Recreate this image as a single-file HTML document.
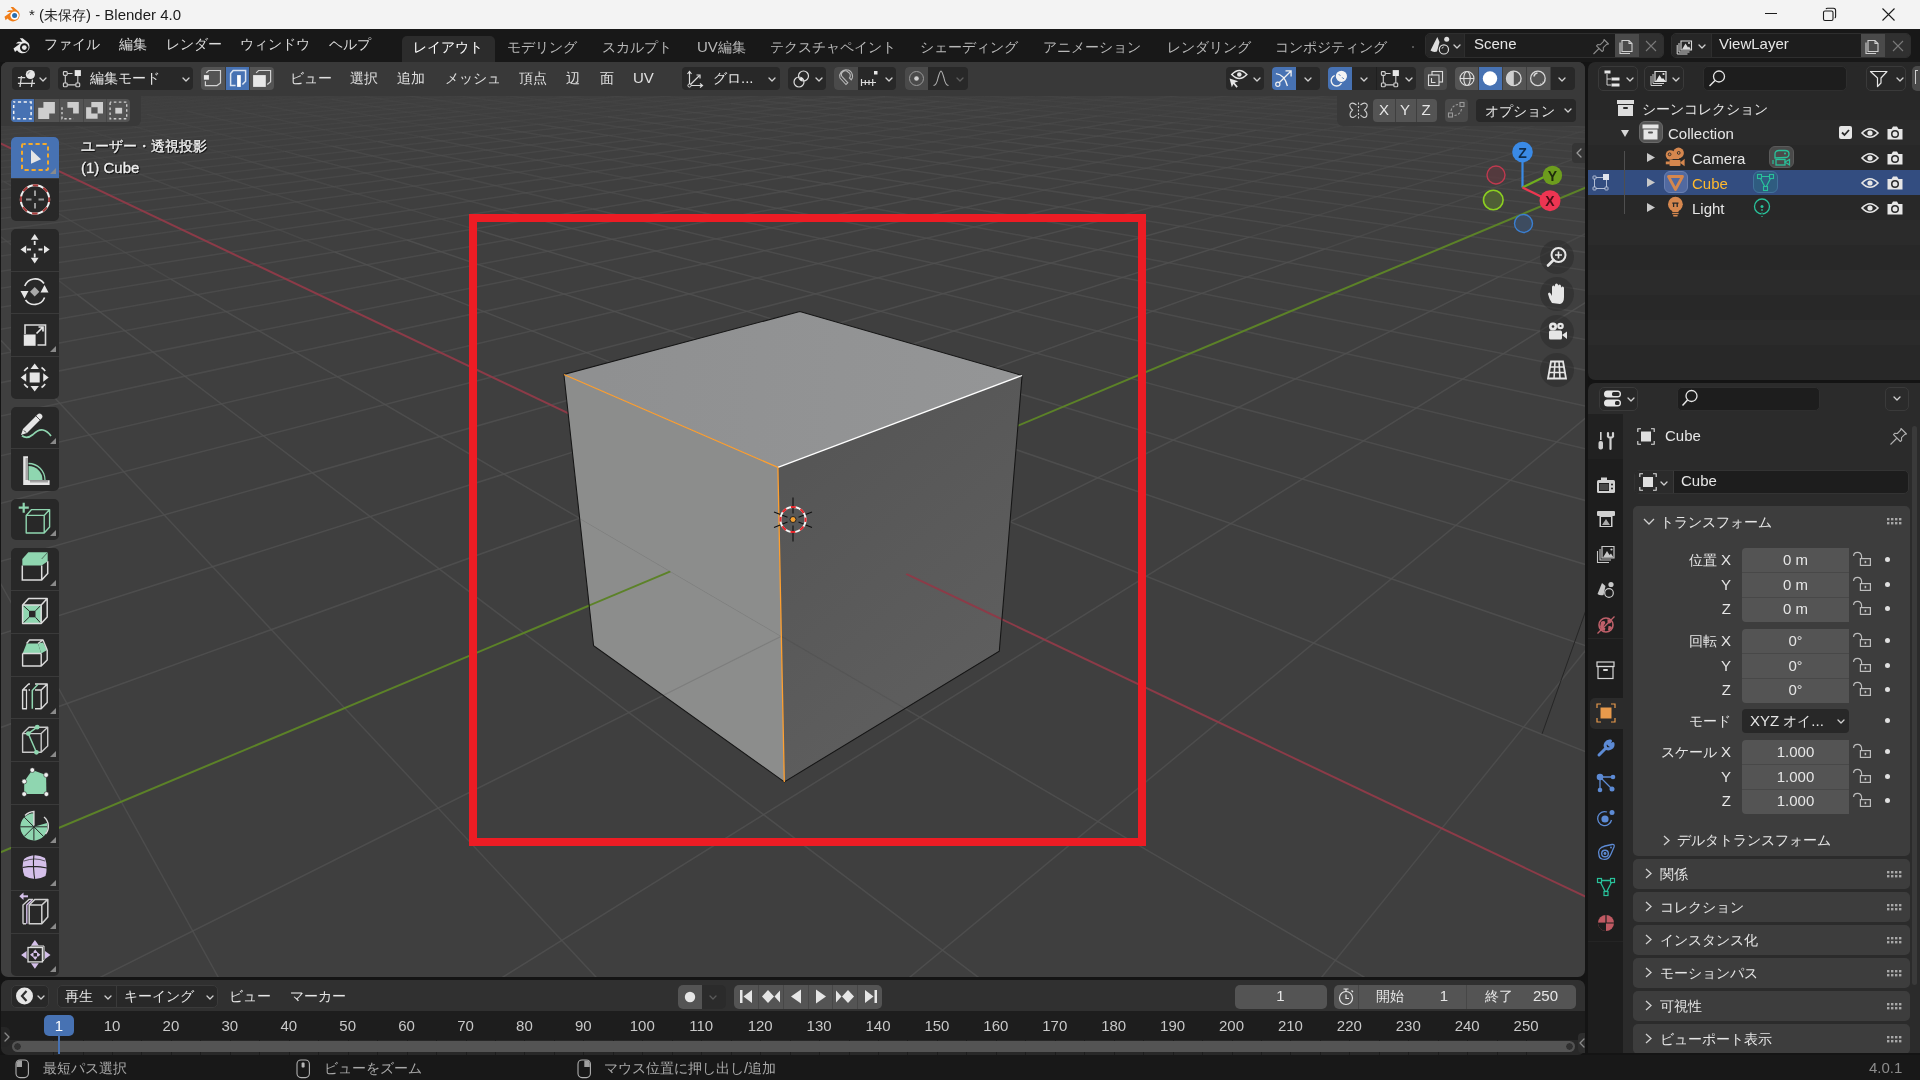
<!DOCTYPE html>
<html><head><meta charset="utf-8"><style>
*{margin:0;padding:0;box-sizing:border-box}
html,body{width:1920px;height:1080px;overflow:hidden;background:#141414;font-family:"Liberation Sans",sans-serif}
.t{position:absolute;line-height:20px;white-space:nowrap;font-size:14px}
.l{font-size:15px}
.r{position:absolute}
svg{position:absolute;overflow:visible}
</style></head><body><div style="position:absolute;left:0;top:0;width:1920px;height:1080px;will-change:transform">
<div class="r" style="left:0px;top:0px;width:1920px;height:29px;background:#f3f3f3;border-radius:0px;"></div><svg style="left:2px;top:5px;" width="21" height="18" viewBox="0 0 21 18"><path d="M2.5 11.8 L9 7 L4.6 7 L7 5.2 L11 5.2 L8.6 2 L11.2 2 L16.5 6.5 A6.5 6.2 0 1 1 5.5 13.6 L3.6 15.2 Z" fill="#f07d18"/>
    <circle cx="12.6" cy="10.6" r="4.2" fill="#fff"/><circle cx="12.6" cy="10.6" r="2.5" fill="#2a6db0"/></svg><div class="t" style="left:29px;top:5px;color:#1b1b1b;font-size:14px"><span class="l">* (</span>未保存<span class="l">) - Blender 4.0</span></div><div class="r" style="left:1765px;top:13px;width:12px;height:1.2px;background:#1b1b1b;border-radius:0px;"></div><svg style="left:1822px;top:7px;" width="15" height="15" viewBox="0 0 15 15"><rect x="1.5" y="4" width="9.5" height="9.5" rx="1.5" fill="none" stroke="#1b1b1b" stroke-width="1.1"/><path d="M4 2.2 Q4.3 1.3 5.5 1.3 L11.5 1.3 Q13.6 1.3 13.6 3.4 L13.6 9.6 Q13.6 10.7 12.8 11" fill="none" stroke="#1b1b1b" stroke-width="1.1"/></svg><svg style="left:1881px;top:7px;" width="15" height="15" viewBox="0 0 15 15"><path d="M1.5 1.5 L13.5 13.5 M13.5 1.5 L1.5 13.5" stroke="#1b1b1b" stroke-width="1.1"/></svg><div class="r" style="left:0px;top:29px;width:1920px;height:33px;background:#181818;border-radius:0px;"></div><svg style="left:12px;top:36px;" width="21" height="19" viewBox="0 0 21 19"><path d="M1.5 12.5 L8.2 7.6 L3.8 7.6 L6.2 5.8 L10.4 5.8 L7.8 2.3 L10.6 2.3 L16.5 7 A6.7 6.5 0 1 1 5 14.3 L3 16 Z" fill="#e8e8e8"/>
    <circle cx="12.3" cy="11.6" r="4.3" fill="#181818"/><circle cx="12.3" cy="11.6" r="2.4" fill="#e8e8e8"/></svg><div class="t" style="left:44px;top:34px;color:#dcdcdc;">ファイル</div><div class="t" style="left:119px;top:34px;color:#dcdcdc;">編集</div><div class="t" style="left:166px;top:34px;color:#dcdcdc;">レンダー</div><div class="t" style="left:240px;top:34px;color:#dcdcdc;">ウィンドウ</div><div class="t" style="left:329px;top:34px;color:#dcdcdc;">ヘルプ</div><div class="r" style="left:402px;top:36px;width:93px;height:26px;background:#2c2c2c;border-radius:5px 5px 0 0;"></div><div class="t" style="left:413px;top:37px;color:#ffffff;">レイアウト</div><div class="t" style="left:507px;top:37px;color:#b8b8b8;">モデリング</div><div class="t" style="left:602px;top:37px;color:#b8b8b8;">スカルプト</div><div class="t" style="left:697px;top:37px;color:#b8b8b8;"><span class="l">UV</span>編集</div><div class="t" style="left:770px;top:37px;color:#b8b8b8;">テクスチャペイント</div><div class="t" style="left:920px;top:37px;color:#b8b8b8;">シェーディング</div><div class="t" style="left:1043px;top:37px;color:#b8b8b8;">アニメーション</div><div class="t" style="left:1167px;top:37px;color:#b8b8b8;">レンダリング</div><div class="t" style="left:1275px;top:37px;color:#b8b8b8;">コンポジティング</div><div class="r" style="left:1412px;top:46px;width:2px;height:2px;background:#555;border-radius:0px;"></div><div class="r" style="left:1425px;top:33px;width:239px;height:25px;background:#1d1d1d;border-radius:5px;border:1px solid #2e2e2e"></div><div class="r" style="left:1426px;top:34px;width:38px;height:23px;background:#262626;border-radius:4px 0 0 4px;"></div><div class="r" style="left:1464px;top:34px;width:1px;height:23px;background:#2e2e2e;border-radius:0px;"></div><svg style="left:1420px;top:28px;" width="50" height="34" viewBox="0 0 50 34"><path d="M17.3 9 L10.5 22.5 Q13 24.5 17 23.6 L19.5 14 Z" fill="#dedede"/><circle cx="26.7" cy="11.2" r="2.5" fill="#dedede"/><circle cx="23.9" cy="21.4" r="4.6" fill="#262626" stroke="#dedede" stroke-width="1.2"/><path d="M22 20.6 A2 2 0 0 1 23.6 19" stroke="#dedede" stroke-width="1" fill="none"/></svg><svg style="left:1453px;top:44px;" width="8" height="6" viewBox="0 0 8 6"><path d="M1 1 L4 4 L7 1" fill="none" stroke="#d0d0d0" stroke-width="1.3" stroke-linecap="round" stroke-linejoin="round"/></svg><div class="t" style="left:1474px;top:34px;color:#e6e6e6;"><span class="l">Scene</span></div><svg style="left:1591px;top:38px;" width="20" height="18" viewBox="0 0 20 18"><path d="M13 1.5 L17.5 6 L15.6 6.4 L12.3 9.7 L12.4 12.3 L11.2 13.5 L5.5 7.8 L6.7 6.6 L9.3 6.7 L12.6 3.4 Z M8 10.5 L2.5 16" fill="none" stroke="#8a8a8a" stroke-width="1.1" stroke-linejoin="round"/></svg><div class="r" style="left:1615px;top:34px;width:24px;height:23px;background:#4a4a4a;border-radius:0px;"></div><svg style="left:1618px;top:37px;" width="18" height="18" viewBox="0 0 18 18"><path d="M4 3.5 L11 3.5 L14 6.5 L14 14.5 L4 14.5 Z M11 3.5 L11 6.5 L14 6.5" fill="none" stroke="#d0d0d0" stroke-width="1.1"/><path d="M2 5.5 L2 16.5 L12 16.5" fill="none" stroke="#d0d0d0" stroke-width="1.1"/></svg><div class="r" style="left:1639px;top:34px;width:24px;height:23px;background:#303030;border-radius:0 4px 4px 0;"></div><svg style="left:1644px;top:39px;" width="14" height="14" viewBox="0 0 14 14"><path d="M2 2 L12 12 M12 2 L2 12" stroke="#7a7a7a" stroke-width="1.1"/></svg><div class="r" style="left:1671px;top:33px;width:240px;height:25px;background:#1d1d1d;border-radius:5px;border:1px solid #2e2e2e"></div><div class="r" style="left:1672px;top:34px;width:39px;height:23px;background:#262626;border-radius:4px 0 0 4px;"></div><div class="r" style="left:1711px;top:34px;width:1px;height:23px;background:#2e2e2e;border-radius:0px;"></div><svg style="left:1676px;top:37px;" width="24" height="18" viewBox="0 0 24 18"><path d="M5 4 L15.5 4 L15.5 13 L5 13 Z" fill="none" stroke="#d8d8d8" stroke-width="1.1"/><path d="M3 6 L3 15 L13.5 15 M1.2 8 L1.2 17 L11.5 17" fill="none" stroke="#d8d8d8" stroke-width="1"/><path d="M6 12.5 L9.5 6.5 L12 10.5 L13 9.5 L15 12.5 Z" fill="#d8d8d8"/><circle cx="13" cy="6" r="1" fill="#d8d8d8"/></svg><svg style="left:1698px;top:44px;" width="8" height="6" viewBox="0 0 8 6"><path d="M1 1 L4 4 L7 1" fill="none" stroke="#d0d0d0" stroke-width="1.3" stroke-linecap="round" stroke-linejoin="round"/></svg><div class="t" style="left:1719px;top:34px;color:#e6e6e6;"><span class="l">ViewLayer</span></div><div class="r" style="left:1861px;top:34px;width:24px;height:23px;background:#4a4a4a;border-radius:0px;"></div><svg style="left:1864px;top:37px;" width="18" height="18" viewBox="0 0 18 18"><path d="M4 3.5 L11 3.5 L14 6.5 L14 14.5 L4 14.5 Z M11 3.5 L11 6.5 L14 6.5" fill="none" stroke="#d0d0d0" stroke-width="1.1"/><path d="M2 5.5 L2 16.5 L12 16.5" fill="none" stroke="#d0d0d0" stroke-width="1.1"/></svg><div class="r" style="left:1885px;top:34px;width:25px;height:23px;background:#303030;border-radius:0 4px 4px 0;"></div><svg style="left:1891px;top:39px;" width="14" height="14" viewBox="0 0 14 14"><path d="M2 2 L12 12 M12 2 L2 12" stroke="#7a7a7a" stroke-width="1.1"/></svg><div class="r" style="left:1px;top:62px;width:1584px;height:915px;background:#3f3f3f;border-radius:7px;overflow:hidden"><svg width="1584" height="915" style="left:0;top:0"><g transform="translate(-1,-62)"><g stroke="#505050" stroke-width="1.5" fill="none"><line x1="-578.0" y1="136.9" x2="-84.0" y2="103.2" stroke-opacity="0.02"/>
<line x1="-84.0" y1="103.2" x2="258.5" y2="79.8" stroke-opacity="0.02"/>
<line x1="-584.2" y1="140.7" x2="-79.0" y2="105.6" stroke-opacity="0.03"/>
<line x1="-79.0" y1="105.6" x2="268.6" y2="81.4" stroke-opacity="0.03"/>
<line x1="-590.7" y1="144.7" x2="-73.8" y2="108.1" stroke-opacity="0.05"/>
<line x1="-73.8" y1="108.1" x2="279.1" y2="83.1" stroke-opacity="0.05"/>
<line x1="-1458.5" y1="210.9" x2="-597.6" y2="148.8" stroke-opacity="0.02"/>
<line x1="-597.6" y1="148.8" x2="-68.3" y2="110.7" stroke-opacity="0.06"/>
<line x1="-68.3" y1="110.7" x2="290.0" y2="84.8" stroke-opacity="0.06"/>
<line x1="290.0" y1="84.8" x2="548.7" y2="66.2" stroke-opacity="0.02"/>
<line x1="-1499.1" y1="219.0" x2="-604.9" y2="153.2" stroke-opacity="0.04"/>
<line x1="-604.9" y1="153.2" x2="-62.7" y2="113.4" stroke-opacity="0.08"/>
<line x1="-62.7" y1="113.4" x2="301.3" y2="86.6" stroke-opacity="0.08"/>
<line x1="301.3" y1="86.6" x2="562.4" y2="67.4" stroke-opacity="0.04"/>
<line x1="-1542.6" y1="227.6" x2="-612.6" y2="157.9" stroke-opacity="0.05"/>
<line x1="-612.6" y1="157.9" x2="-56.7" y2="116.2" stroke-opacity="0.09"/>
<line x1="-56.7" y1="116.2" x2="312.9" y2="88.5" stroke-opacity="0.09"/>
<line x1="312.9" y1="88.5" x2="576.5" y2="68.7" stroke-opacity="0.05"/>
<line x1="-328942.2" y1="35590.4" x2="-1452702.1" y2="157345.6" stroke-opacity="0.05"/>
<line x1="-1589.6" y1="237.0" x2="-620.7" y2="162.8" stroke-opacity="0.06"/>
<line x1="-620.7" y1="162.8" x2="-50.5" y2="119.1" stroke-opacity="0.11"/>
<line x1="-50.5" y1="119.1" x2="325.1" y2="90.4" stroke-opacity="0.11"/>
<line x1="325.1" y1="90.4" x2="591.2" y2="70.0" stroke-opacity="0.06"/>
<line x1="-56509.3" y1="6264.9" x2="-1401796.2" y2="156609.6" stroke-opacity="0.06"/>
<line x1="-1640.3" y1="247.1" x2="-629.3" y2="168.0" stroke-opacity="0.08"/>
<line x1="-629.3" y1="168.0" x2="-44.0" y2="122.2" stroke-opacity="0.13"/>
<line x1="-44.0" y1="122.2" x2="337.7" y2="92.4" stroke-opacity="0.13"/>
<line x1="337.7" y1="92.4" x2="606.3" y2="71.4" stroke-opacity="0.08"/>
<line x1="-30030.1" y1="3414.6" x2="-1350890.2" y2="155873.6" stroke-opacity="0.08"/>
<line x1="-1695.2" y1="258.0" x2="-638.4" y2="173.5" stroke-opacity="0.09"/>
<line x1="-638.4" y1="173.5" x2="-37.2" y2="125.5" stroke-opacity="0.15"/>
<line x1="-37.2" y1="125.5" x2="350.8" y2="94.5" stroke-opacity="0.15"/>
<line x1="350.8" y1="94.5" x2="621.9" y2="72.8" stroke-opacity="0.09"/>
<line x1="-20021.6" y1="2337.3" x2="-1299984.3" y2="155137.5" stroke-opacity="0.09"/>
<line x1="-4310.8" y1="478.8" x2="-1755.0" y2="269.9" stroke-opacity="0.02"/>
<line x1="-1755.0" y1="269.9" x2="-648.1" y2="179.4" stroke-opacity="0.11"/>
<line x1="-648.1" y1="179.4" x2="-30.0" y2="128.9" stroke-opacity="0.16"/>
<line x1="-30.0" y1="128.9" x2="364.4" y2="96.6" stroke-opacity="0.16"/>
<line x1="364.4" y1="96.6" x2="638.0" y2="74.3" stroke-opacity="0.11"/>
<line x1="638.0" y1="74.3" x2="838.9" y2="57.8" stroke-opacity="0.02"/>
<line x1="-4310.8" y1="478.8" x2="-14761.7" y2="1771.1" stroke-opacity="0.02"/>
<line x1="-14761.7" y1="1771.1" x2="-1249078.4" y2="154401.5" stroke-opacity="0.11"/>
<line x1="-4621.6" y1="517.2" x2="-1820.3" y2="282.8" stroke-opacity="0.03"/>
<line x1="-1820.3" y1="282.8" x2="-658.4" y2="185.6" stroke-opacity="0.12"/>
<line x1="-658.4" y1="185.6" x2="-22.5" y2="132.4" stroke-opacity="0.18"/>
<line x1="-22.5" y1="132.4" x2="378.6" y2="98.9" stroke-opacity="0.18"/>
<line x1="378.6" y1="98.9" x2="654.7" y2="75.8" stroke-opacity="0.12"/>
<line x1="654.7" y1="75.8" x2="856.3" y2="58.9" stroke-opacity="0.03"/>
<line x1="-3913.9" y1="446.3" x2="-11519.0" y2="1422.0" stroke-opacity="0.03"/>
<line x1="-11519.0" y1="1422.0" x2="-1198172.4" y2="153665.5" stroke-opacity="0.12"/>
<line x1="-4985.0" y1="562.2" x2="-1891.8" y2="297.1" stroke-opacity="0.04"/>
<line x1="-1891.8" y1="297.1" x2="-669.4" y2="192.3" stroke-opacity="0.14"/>
<line x1="-669.4" y1="192.3" x2="-14.6" y2="136.2" stroke-opacity="0.21"/>
<line x1="-14.6" y1="136.2" x2="393.3" y2="101.2" stroke-opacity="0.21"/>
<line x1="393.3" y1="101.2" x2="671.9" y2="77.3" stroke-opacity="0.14"/>
<line x1="671.9" y1="77.3" x2="874.3" y2="60.0" stroke-opacity="0.04"/>
<line x1="-3563.0" y1="417.7" x2="-9319.7" y2="1185.3" stroke-opacity="0.04"/>
<line x1="-9319.7" y1="1185.3" x2="-1147266.5" y2="152929.4" stroke-opacity="0.14"/>
<line x1="-5415.7" y1="615.4" x2="-1970.5" y2="312.7" stroke-opacity="0.05"/>
<line x1="-1970.5" y1="312.7" x2="-681.1" y2="199.4" stroke-opacity="0.16"/>
<line x1="-681.1" y1="199.4" x2="-6.3" y2="140.1" stroke-opacity="0.23"/>
<line x1="-6.3" y1="140.1" x2="408.7" y2="103.7" stroke-opacity="0.23"/>
<line x1="408.7" y1="103.7" x2="689.8" y2="79.0" stroke-opacity="0.16"/>
<line x1="689.8" y1="79.0" x2="892.8" y2="61.1" stroke-opacity="0.05"/>
<line x1="-3250.4" y1="392.1" x2="-7730.0" y2="1014.2" stroke-opacity="0.05"/>
<line x1="-7730.0" y1="1014.2" x2="-1096360.5" y2="152193.4" stroke-opacity="0.16"/>
<line x1="-5934.2" y1="679.5" x2="-2057.6" y2="330.0" stroke-opacity="0.06"/>
<line x1="-2057.6" y1="330.0" x2="-693.8" y2="207.1" stroke-opacity="0.17"/>
<line x1="-693.8" y1="207.1" x2="2.4" y2="144.3" stroke-opacity="0.25"/>
<line x1="2.4" y1="144.3" x2="424.8" y2="106.2" stroke-opacity="0.25"/>
<line x1="424.8" y1="106.2" x2="708.4" y2="80.6" stroke-opacity="0.17"/>
<line x1="708.4" y1="80.6" x2="911.9" y2="62.3" stroke-opacity="0.06"/>
<line x1="-2970.3" y1="369.2" x2="-6527.3" y2="884.7" stroke-opacity="0.06"/>
<line x1="-6527.3" y1="884.7" x2="-1045454.6" y2="151457.4" stroke-opacity="0.17"/>
<line x1="-6570.4" y1="758.2" x2="-2154.4" y2="349.3" stroke-opacity="0.08"/>
<line x1="-2154.4" y1="349.3" x2="-707.3" y2="215.3" stroke-opacity="0.19"/>
<line x1="-707.3" y1="215.3" x2="11.7" y2="148.7" stroke-opacity="0.27"/>
<line x1="11.7" y1="148.7" x2="441.6" y2="108.9" stroke-opacity="0.27"/>
<line x1="441.6" y1="108.9" x2="727.6" y2="82.4" stroke-opacity="0.19"/>
<line x1="727.6" y1="82.4" x2="931.6" y2="63.5" stroke-opacity="0.08"/>
<line x1="-2717.8" y1="348.6" x2="-5585.6" y2="783.4" stroke-opacity="0.08"/>
<line x1="-5585.6" y1="783.4" x2="-994548.7" y2="150721.3" stroke-opacity="0.19"/>
<line x1="-7369.5" y1="857.0" x2="-2262.7" y2="370.8" stroke-opacity="0.09"/>
<line x1="-2262.7" y1="370.8" x2="-721.9" y2="224.1" stroke-opacity="0.21"/>
<line x1="-721.9" y1="224.1" x2="21.4" y2="153.3" stroke-opacity="0.29"/>
<line x1="21.4" y1="153.3" x2="459.1" y2="111.7" stroke-opacity="0.29"/>
<line x1="459.1" y1="111.7" x2="747.5" y2="84.2" stroke-opacity="0.21"/>
<line x1="747.5" y1="84.2" x2="951.9" y2="64.7" stroke-opacity="0.09"/>
<line x1="-2489.1" y1="329.9" x2="-4828.3" y2="701.8" stroke-opacity="0.09"/>
<line x1="-4828.3" y1="701.8" x2="-943642.7" y2="149985.3" stroke-opacity="0.21"/>
<line x1="-8403.4" y1="984.9" x2="-2384.7" y2="395.1" stroke-opacity="0.10"/>
<line x1="-2384.7" y1="395.1" x2="-737.7" y2="233.6" stroke-opacity="0.23"/>
<line x1="-737.7" y1="233.6" x2="31.8" y2="158.2" stroke-opacity="0.32"/>
<line x1="31.8" y1="158.2" x2="477.5" y2="114.6" stroke-opacity="0.32"/>
<line x1="477.5" y1="114.6" x2="768.2" y2="86.1" stroke-opacity="0.23"/>
<line x1="768.2" y1="86.1" x2="972.9" y2="66.0" stroke-opacity="0.10"/>
<line x1="-2280.9" y1="312.9" x2="-4206.1" y2="634.9" stroke-opacity="0.10"/>
<line x1="-4206.1" y1="634.9" x2="-290898.3" y2="48586.6" stroke-opacity="0.23"/>
<line x1="-290898.3" y1="48586.6" x2="-892736.8" y2="149249.2" stroke-opacity="0.32"/>
<line x1="-9793.2" y1="1156.7" x2="-2523.1" y2="422.6" stroke-opacity="0.11"/>
<line x1="-2523.1" y1="422.6" x2="-754.7" y2="244.0" stroke-opacity="0.24"/>
<line x1="-754.7" y1="244.0" x2="42.8" y2="163.5" stroke-opacity="0.34"/>
<line x1="42.8" y1="163.5" x2="496.7" y2="117.6" stroke-opacity="0.34"/>
<line x1="496.7" y1="117.6" x2="789.8" y2="88.0" stroke-opacity="0.24"/>
<line x1="789.8" y1="88.0" x2="994.6" y2="67.3" stroke-opacity="0.11"/>
<line x1="-2090.5" y1="297.3" x2="-3685.7" y2="578.8" stroke-opacity="0.11"/>
<line x1="-3685.7" y1="578.8" x2="-35989.9" y2="6280.6" stroke-opacity="0.24"/>
<line x1="-35989.9" y1="6280.6" x2="-841830.8" y2="148513.2" stroke-opacity="0.34"/>
<line x1="-11760.9" y1="1400.0" x2="-2681.5" y2="454.1" stroke-opacity="0.12"/>
<line x1="-2681.5" y1="454.1" x2="-773.3" y2="255.3" stroke-opacity="0.26"/>
<line x1="-773.3" y1="255.3" x2="54.4" y2="169.0" stroke-opacity="0.36"/>
<line x1="54.4" y1="169.0" x2="516.9" y2="120.8" stroke-opacity="0.36"/>
<line x1="516.9" y1="120.8" x2="812.2" y2="90.1" stroke-opacity="0.26"/>
<line x1="812.2" y1="90.1" x2="1017.0" y2="68.7" stroke-opacity="0.12"/>
<line x1="-1915.9" y1="283.0" x2="-3244.1" y2="531.3" stroke-opacity="0.12"/>
<line x1="-3244.1" y1="531.3" x2="-18247.1" y2="3335.9" stroke-opacity="0.26"/>
<line x1="-18247.1" y1="3335.9" x2="-790924.9" y2="147777.2" stroke-opacity="0.36"/>
<line x1="-14761.7" y1="1771.1" x2="-2864.6" y2="490.5" stroke-opacity="0.13"/>
<line x1="-2864.6" y1="490.5" x2="-793.6" y2="267.5" stroke-opacity="0.28"/>
<line x1="-793.6" y1="267.5" x2="66.8" y2="174.9" stroke-opacity="0.39"/>
<line x1="66.8" y1="174.9" x2="538.1" y2="124.2" stroke-opacity="0.39"/>
<line x1="538.1" y1="124.2" x2="835.5" y2="92.2" stroke-opacity="0.28"/>
<line x1="835.5" y1="92.2" x2="1040.2" y2="70.1" stroke-opacity="0.13"/>
<line x1="-1755.0" y1="269.9" x2="-2864.6" y2="490.5" stroke-opacity="0.13"/>
<line x1="-2864.6" y1="490.5" x2="-11770.9" y2="2261.1" stroke-opacity="0.28"/>
<line x1="-11770.9" y1="2261.1" x2="-740019.0" y2="147041.1" stroke-opacity="0.39"/>
<line x1="-19898.9" y1="2406.3" x2="-3078.6" y2="533.0" stroke-opacity="0.15"/>
<line x1="-3078.6" y1="533.0" x2="-815.8" y2="281.0" stroke-opacity="0.30"/>
<line x1="-815.8" y1="281.0" x2="80.1" y2="181.2" stroke-opacity="0.41"/>
<line x1="80.1" y1="181.2" x2="560.3" y2="127.7" stroke-opacity="0.41"/>
<line x1="560.3" y1="127.7" x2="859.7" y2="94.4" stroke-opacity="0.30"/>
<line x1="859.7" y1="94.4" x2="1064.3" y2="71.6" stroke-opacity="0.15"/>
<line x1="-1606.4" y1="257.7" x2="-2535.0" y2="455.0" stroke-opacity="0.15"/>
<line x1="-2535.0" y1="455.0" x2="-8416.1" y2="1704.3" stroke-opacity="0.30"/>
<line x1="-8416.1" y1="1704.3" x2="-689113.0" y2="146305.1" stroke-opacity="0.41"/>
<line x1="-1348521.1" y1="155839.3" x2="-30714.5" y2="3743.8" stroke-opacity="0.02"/>
<line x1="-30714.5" y1="3743.8" x2="-3332.0" y2="583.4" stroke-opacity="0.16"/>
<line x1="-3332.0" y1="583.4" x2="-840.3" y2="295.8" stroke-opacity="0.32"/>
<line x1="-840.3" y1="295.8" x2="94.3" y2="187.9" stroke-opacity="0.44"/>
<line x1="94.3" y1="187.9" x2="583.8" y2="131.4" stroke-opacity="0.44"/>
<line x1="583.8" y1="131.4" x2="885.1" y2="96.7" stroke-opacity="0.32"/>
<line x1="885.1" y1="96.7" x2="1089.1" y2="73.1" stroke-opacity="0.16"/>
<line x1="1089.1" y1="73.1" x2="1236.5" y2="56.1" stroke-opacity="0.02"/>
<line x1="-1140.0" y1="171.4" x2="-1468.7" y2="246.5" stroke-opacity="0.02"/>
<line x1="-1468.7" y1="246.5" x2="-2246.1" y2="423.9" stroke-opacity="0.16"/>
<line x1="-2246.1" y1="423.9" x2="-6364.2" y2="1363.8" stroke-opacity="0.32"/>
<line x1="-6364.2" y1="1363.8" x2="-638207.1" y2="145569.1" stroke-opacity="0.44"/>
<line x1="-1292190.2" y1="155024.8" x2="-68256.6" y2="8386.1" stroke-opacity="0.03"/>
<line x1="-68256.6" y1="8386.1" x2="-3637.0" y2="644.0" stroke-opacity="0.17"/>
<line x1="-3637.0" y1="644.0" x2="-867.3" y2="312.2" stroke-opacity="0.34"/>
<line x1="-867.3" y1="312.2" x2="109.4" y2="195.2" stroke-opacity="0.46"/>
<line x1="109.4" y1="195.2" x2="608.5" y2="135.4" stroke-opacity="0.46"/>
<line x1="608.5" y1="135.4" x2="911.5" y2="99.1" stroke-opacity="0.34"/>
<line x1="911.5" y1="99.1" x2="1114.9" y2="74.7" stroke-opacity="0.17"/>
<line x1="1114.9" y1="74.7" x2="1261.0" y2="57.2" stroke-opacity="0.03"/>
<line x1="-1056.4" y1="165.8" x2="-1340.7" y2="236.0" stroke-opacity="0.03"/>
<line x1="-1340.7" y1="236.0" x2="-1990.7" y2="396.4" stroke-opacity="0.17"/>
<line x1="-1990.7" y1="396.4" x2="-4979.6" y2="1134.0" stroke-opacity="0.34"/>
<line x1="-4979.6" y1="1134.0" x2="-587301.1" y2="144833.0" stroke-opacity="0.46"/>
<line x1="-1235859.2" y1="154210.4" x2="-4010.9" y2="718.3" stroke-opacity="0.18"/>
<line x1="-4010.9" y1="718.3" x2="-897.4" y2="330.4" stroke-opacity="0.36"/>
<line x1="-897.4" y1="330.4" x2="125.7" y2="202.9" stroke-opacity="0.49"/>
<line x1="125.7" y1="202.9" x2="634.6" y2="139.5" stroke-opacity="0.49"/>
<line x1="634.6" y1="139.5" x2="939.0" y2="101.6" stroke-opacity="0.36"/>
<line x1="939.0" y1="101.6" x2="1141.7" y2="76.3" stroke-opacity="0.18"/>
<line x1="1141.7" y1="76.3" x2="1286.2" y2="58.3" stroke-opacity="0.03"/>
<line x1="-976.9" y1="160.5" x2="-1221.5" y2="226.3" stroke-opacity="0.03"/>
<line x1="-1221.5" y1="226.3" x2="-1763.3" y2="371.9" stroke-opacity="0.18"/>
<line x1="-1763.3" y1="371.9" x2="-3982.4" y2="968.5" stroke-opacity="0.36"/>
<line x1="-3982.4" y1="968.5" x2="-536395.2" y2="144097.0" stroke-opacity="0.49"/>
<line x1="-1179528.3" y1="153395.9" x2="-4480.0" y2="811.6" stroke-opacity="0.19"/>
<line x1="-4480.0" y1="811.6" x2="-931.0" y2="350.8" stroke-opacity="0.37"/>
<line x1="-931.0" y1="350.8" x2="143.3" y2="211.3" stroke-opacity="0.52"/>
<line x1="143.3" y1="211.3" x2="662.2" y2="143.9" stroke-opacity="0.52"/>
<line x1="662.2" y1="143.9" x2="967.9" y2="104.2" stroke-opacity="0.37"/>
<line x1="967.9" y1="104.2" x2="1169.4" y2="78.0" stroke-opacity="0.19"/>
<line x1="1169.4" y1="78.0" x2="1312.2" y2="59.5" stroke-opacity="0.04"/>
<line x1="-901.3" y1="155.4" x2="-1110.2" y2="217.2" stroke-opacity="0.04"/>
<line x1="-1110.2" y1="217.2" x2="-1559.7" y2="350.0" stroke-opacity="0.19"/>
<line x1="-1559.7" y1="350.0" x2="-3229.8" y2="843.6" stroke-opacity="0.37"/>
<line x1="-3229.8" y1="843.6" x2="-485489.3" y2="143361.0" stroke-opacity="0.52"/>
<line x1="-1123197.3" y1="152581.4" x2="-5086.3" y2="932.1" stroke-opacity="0.20"/>
<line x1="-5086.3" y1="932.1" x2="-968.9" y2="373.7" stroke-opacity="0.39"/>
<line x1="-968.9" y1="373.7" x2="162.3" y2="220.3" stroke-opacity="0.54"/>
<line x1="162.3" y1="220.3" x2="691.4" y2="148.5" stroke-opacity="0.54"/>
<line x1="691.4" y1="148.5" x2="998.1" y2="106.9" stroke-opacity="0.39"/>
<line x1="998.1" y1="106.9" x2="1198.2" y2="79.8" stroke-opacity="0.20"/>
<line x1="1198.2" y1="79.8" x2="1339.1" y2="60.7" stroke-opacity="0.04"/>
<line x1="-829.2" y1="150.6" x2="-1005.9" y2="208.6" stroke-opacity="0.04"/>
<line x1="-1005.9" y1="208.6" x2="-1376.1" y2="330.2" stroke-opacity="0.20"/>
<line x1="-1376.1" y1="330.2" x2="-2641.8" y2="746.0" stroke-opacity="0.39"/>
<line x1="-2641.8" y1="746.0" x2="-434583.3" y2="142624.9" stroke-opacity="0.54"/>
<line x1="-1066866.4" y1="151766.9" x2="-5899.9" y2="1093.9" stroke-opacity="0.21"/>
<line x1="-5899.9" y1="1093.9" x2="-1011.8" y2="399.7" stroke-opacity="0.41"/>
<line x1="-1011.8" y1="399.7" x2="182.9" y2="230.1" stroke-opacity="0.57"/>
<line x1="182.9" y1="230.1" x2="722.4" y2="153.4" stroke-opacity="0.57"/>
<line x1="722.4" y1="153.4" x2="1029.7" y2="109.8" stroke-opacity="0.41"/>
<line x1="1029.7" y1="109.8" x2="1228.1" y2="81.6" stroke-opacity="0.21"/>
<line x1="1228.1" y1="81.6" x2="1366.9" y2="61.9" stroke-opacity="0.05"/>
<line x1="-760.4" y1="146.0" x2="-908.1" y2="200.6" stroke-opacity="0.05"/>
<line x1="-908.1" y1="200.6" x2="-1209.9" y2="312.3" stroke-opacity="0.21"/>
<line x1="-1209.9" y1="312.3" x2="-2169.6" y2="667.6" stroke-opacity="0.41"/>
<line x1="-2169.6" y1="667.6" x2="-383677.4" y2="141888.9" stroke-opacity="0.57"/>
<line x1="-1010535.4" y1="150952.5" x2="-7049.3" y2="1322.4" stroke-opacity="0.22"/>
<line x1="-7049.3" y1="1322.4" x2="-1061.0" y2="429.5" stroke-opacity="0.42"/>
<line x1="-1061.0" y1="429.5" x2="205.2" y2="240.7" stroke-opacity="0.60"/>
<line x1="205.2" y1="240.7" x2="755.3" y2="158.7" stroke-opacity="0.60"/>
<line x1="755.3" y1="158.7" x2="1062.8" y2="112.8" stroke-opacity="0.42"/>
<line x1="1062.8" y1="112.8" x2="1259.3" y2="83.5" stroke-opacity="0.22"/>
<line x1="1259.3" y1="83.5" x2="1395.6" y2="63.2" stroke-opacity="0.05"/>
<line x1="-694.8" y1="141.6" x2="-816.2" y2="193.1" stroke-opacity="0.05"/>
<line x1="-816.2" y1="193.1" x2="-1058.6" y2="296.1" stroke-opacity="0.22"/>
<line x1="-1058.6" y1="296.1" x2="-1782.2" y2="603.3" stroke-opacity="0.42"/>
<line x1="-1782.2" y1="603.3" x2="-193298.3" y2="81927.7" stroke-opacity="0.60"/>
<line x1="-193298.3" y1="81927.7" x2="-332771.4" y2="141152.8" stroke-opacity="0.60"/>
<line x1="-954204.4" y1="150138.0" x2="-8796.3" y2="1669.7" stroke-opacity="0.23"/>
<line x1="-8796.3" y1="1669.7" x2="-1117.7" y2="463.9" stroke-opacity="0.44"/>
<line x1="-1117.7" y1="463.9" x2="229.6" y2="252.3" stroke-opacity="0.62"/>
<line x1="229.6" y1="252.3" x2="790.3" y2="164.2" stroke-opacity="0.62"/>
<line x1="790.3" y1="164.2" x2="1097.7" y2="116.0" stroke-opacity="0.44"/>
<line x1="1097.7" y1="116.0" x2="1291.7" y2="85.5" stroke-opacity="0.23"/>
<line x1="1291.7" y1="85.5" x2="1425.3" y2="64.5" stroke-opacity="0.06"/>
<line x1="-632.1" y1="137.4" x2="-729.7" y2="186.1" stroke-opacity="0.06"/>
<line x1="-729.7" y1="186.1" x2="-920.4" y2="281.2" stroke-opacity="0.23"/>
<line x1="-920.4" y1="281.2" x2="-1458.5" y2="549.6" stroke-opacity="0.44"/>
<line x1="-1458.5" y1="549.6" x2="-12983.3" y2="6298.2" stroke-opacity="0.62"/>
<line x1="-12983.3" y1="6298.2" x2="-281865.5" y2="140416.8" stroke-opacity="0.62"/>
<line x1="-897873.5" y1="149323.5" x2="-11770.9" y2="2261.1" stroke-opacity="0.24"/>
<line x1="-11770.9" y1="2261.1" x2="-1184.1" y2="504.0" stroke-opacity="0.46"/>
<line x1="-1184.1" y1="504.0" x2="256.3" y2="265.0" stroke-opacity="0.65"/>
<line x1="256.3" y1="265.0" x2="827.7" y2="170.2" stroke-opacity="0.65"/>
<line x1="827.7" y1="170.2" x2="1134.3" y2="119.3" stroke-opacity="0.46"/>
<line x1="1134.3" y1="119.3" x2="1325.4" y2="87.5" stroke-opacity="0.24"/>
<line x1="1325.4" y1="87.5" x2="1456.1" y2="65.9" stroke-opacity="0.06"/>
<line x1="-572.0" y1="133.3" x2="-648.1" y2="179.4" stroke-opacity="0.06"/>
<line x1="-648.1" y1="179.4" x2="-793.6" y2="267.5" stroke-opacity="0.24"/>
<line x1="-793.6" y1="267.5" x2="-1184.1" y2="504.0" stroke-opacity="0.46"/>
<line x1="-1184.1" y1="504.0" x2="-5721.2" y2="3252.2" stroke-opacity="0.65"/>
<line x1="-5721.2" y1="3252.2" x2="-230959.6" y2="139680.8" stroke-opacity="0.65"/>
<line x1="-841542.5" y1="148509.0" x2="-17967.9" y2="3493.1" stroke-opacity="0.25"/>
<line x1="-17967.9" y1="3493.1" x2="-1262.6" y2="551.6" stroke-opacity="0.47"/>
<line x1="-1262.6" y1="551.6" x2="285.8" y2="279.0" stroke-opacity="0.67"/>
<line x1="285.8" y1="279.0" x2="867.7" y2="176.5" stroke-opacity="0.67"/>
<line x1="867.7" y1="176.5" x2="1172.8" y2="122.8" stroke-opacity="0.47"/>
<line x1="1172.8" y1="122.8" x2="1360.6" y2="89.7" stroke-opacity="0.25"/>
<line x1="1360.6" y1="89.7" x2="1487.9" y2="67.3" stroke-opacity="0.06"/>
<line x1="-514.5" y1="129.5" x2="-570.9" y2="173.1" stroke-opacity="0.06"/>
<line x1="-570.9" y1="173.1" x2="-676.8" y2="255.0" stroke-opacity="0.25"/>
<line x1="-676.8" y1="255.0" x2="-948.4" y2="464.9" stroke-opacity="0.47"/>
<line x1="-948.4" y1="464.9" x2="-3168.7" y2="2181.6" stroke-opacity="0.67"/>
<line x1="-3168.7" y1="2181.6" x2="-180053.6" y2="138944.7" stroke-opacity="0.67"/>
<line x1="-785211.6" y1="147694.6" x2="-38809.6" y2="7636.5" stroke-opacity="0.25"/>
<line x1="-38809.6" y1="7636.5" x2="-1357.0" y2="608.8" stroke-opacity="0.48"/>
<line x1="-1357.0" y1="608.8" x2="318.3" y2="294.4" stroke-opacity="0.70"/>
<line x1="318.3" y1="294.4" x2="910.5" y2="183.3" stroke-opacity="0.70"/>
<line x1="910.5" y1="183.3" x2="1213.4" y2="126.5" stroke-opacity="0.48"/>
<line x1="1213.4" y1="126.5" x2="1397.4" y2="91.9" stroke-opacity="0.25"/>
<line x1="1397.4" y1="91.9" x2="1520.9" y2="68.7" stroke-opacity="0.07"/>
<line x1="-459.4" y1="125.8" x2="-497.9" y2="167.1" stroke-opacity="0.07"/>
<line x1="-497.9" y1="167.1" x2="-569.0" y2="243.4" stroke-opacity="0.25"/>
<line x1="-569.0" y1="243.4" x2="-743.9" y2="431.0" stroke-opacity="0.48"/>
<line x1="-743.9" y1="431.0" x2="-1866.3" y2="1635.4" stroke-opacity="0.70"/>
<line x1="-1866.3" y1="1635.4" x2="-129147.7" y2="138208.7" stroke-opacity="0.70"/>
<line x1="-728880.6" y1="146880.1" x2="-1472.6" y2="678.8" stroke-opacity="0.50"/>
<line x1="-1472.6" y1="678.8" x2="354.4" y2="311.6" stroke-opacity="0.73"/>
<line x1="354.4" y1="311.6" x2="956.5" y2="190.6" stroke-opacity="0.73"/>
<line x1="956.5" y1="190.6" x2="1256.3" y2="130.3" stroke-opacity="0.50"/>
<line x1="1256.3" y1="130.3" x2="1435.7" y2="94.3" stroke-opacity="0.26"/>
<line x1="1435.7" y1="94.3" x2="1555.2" y2="70.3" stroke-opacity="0.07"/>
<line x1="-406.5" y1="122.2" x2="-428.8" y2="161.5" stroke-opacity="0.07"/>
<line x1="-428.8" y1="161.5" x2="-469.1" y2="232.6" stroke-opacity="0.26"/>
<line x1="-469.1" y1="232.6" x2="-564.6" y2="401.2" stroke-opacity="0.50"/>
<line x1="-564.6" y1="401.2" x2="-1076.2" y2="1304.0" stroke-opacity="0.73"/>
<line x1="-1076.2" y1="1304.0" x2="-78241.7" y2="137472.7" stroke-opacity="0.73"/>
<line x1="-672549.7" y1="146065.6" x2="-1617.6" y2="766.6" stroke-opacity="0.51"/>
<line x1="-1617.6" y1="766.6" x2="394.9" y2="330.8" stroke-opacity="0.75"/>
<line x1="394.9" y1="330.8" x2="1006.1" y2="198.5" stroke-opacity="0.75"/>
<line x1="1006.1" y1="198.5" x2="1301.6" y2="134.5" stroke-opacity="0.51"/>
<line x1="1301.6" y1="134.5" x2="1475.8" y2="96.7" stroke-opacity="0.27"/>
<line x1="1475.8" y1="96.7" x2="1590.7" y2="71.8" stroke-opacity="0.07"/>
<line x1="-355.7" y1="118.8" x2="-363.1" y2="156.1" stroke-opacity="0.07"/>
<line x1="-363.1" y1="156.1" x2="-376.2" y2="222.6" stroke-opacity="0.27"/>
<line x1="-376.2" y1="222.6" x2="-406.3" y2="375.0" stroke-opacity="0.51"/>
<line x1="-406.3" y1="375.0" x2="-545.9" y2="1081.5" stroke-opacity="0.75"/>
<line x1="-545.9" y1="1081.5" x2="-27335.8" y2="136736.6" stroke-opacity="0.75"/>
<line x1="-616218.7" y1="145251.1" x2="-1804.7" y2="880.0" stroke-opacity="0.52"/>
<line x1="-1804.7" y1="880.0" x2="440.4" y2="352.4" stroke-opacity="0.77"/>
<line x1="440.4" y1="352.4" x2="1059.6" y2="206.9" stroke-opacity="0.77"/>
<line x1="1059.6" y1="206.9" x2="1349.6" y2="138.8" stroke-opacity="0.52"/>
<line x1="1349.6" y1="138.8" x2="1517.8" y2="99.3" stroke-opacity="0.27"/>
<line x1="1517.8" y1="99.3" x2="1627.6" y2="73.5" stroke-opacity="0.08"/>
<line x1="-306.9" y1="115.5" x2="-300.7" y2="151.0" stroke-opacity="0.08"/>
<line x1="-300.7" y1="151.0" x2="-289.7" y2="213.3" stroke-opacity="0.27"/>
<line x1="-289.7" y1="213.3" x2="-265.4" y2="351.6" stroke-opacity="0.52"/>
<line x1="-265.4" y1="351.6" x2="-165.2" y2="921.9" stroke-opacity="0.77"/>
<line x1="-165.2" y1="921.9" x2="23570.1" y2="136000.6" stroke-opacity="0.77"/>
<line x1="-559887.8" y1="144436.7" x2="-2055.5" y2="1031.9" stroke-opacity="0.52"/>
<line x1="-2055.5" y1="1031.9" x2="492.0" y2="377.0" stroke-opacity="0.79"/>
<line x1="492.0" y1="377.0" x2="1117.6" y2="216.2" stroke-opacity="0.79"/>
<line x1="1117.6" y1="216.2" x2="1400.5" y2="143.4" stroke-opacity="0.52"/>
<line x1="1400.5" y1="143.4" x2="1561.7" y2="102.0" stroke-opacity="0.27"/>
<line x1="1561.7" y1="102.0" x2="1665.9" y2="75.2" stroke-opacity="0.08"/>
<line x1="-260.0" y1="112.4" x2="-241.3" y2="146.1" stroke-opacity="0.08"/>
<line x1="-241.3" y1="146.1" x2="-209.0" y2="204.6" stroke-opacity="0.27"/>
<line x1="-209.0" y1="204.6" x2="-139.3" y2="330.6" stroke-opacity="0.52"/>
<line x1="-139.3" y1="330.6" x2="121.2" y2="801.7" stroke-opacity="0.79"/>
<line x1="121.2" y1="801.7" x2="74476.1" y2="135264.6" stroke-opacity="0.79"/>
<line x1="-503556.8" y1="143622.2" x2="-2408.9" y2="1245.9" stroke-opacity="0.53"/>
<line x1="-2408.9" y1="1245.9" x2="551.0" y2="405.0" stroke-opacity="0.81"/>
<line x1="551.0" y1="405.0" x2="1180.6" y2="226.2" stroke-opacity="0.81"/>
<line x1="1180.6" y1="226.2" x2="1454.5" y2="148.3" stroke-opacity="0.53"/>
<line x1="1454.5" y1="148.3" x2="1607.8" y2="104.8" stroke-opacity="0.28"/>
<line x1="1607.8" y1="104.8" x2="1705.7" y2="77.0" stroke-opacity="0.08"/>
<line x1="-214.8" y1="109.4" x2="-184.8" y2="141.5" stroke-opacity="0.08"/>
<line x1="-184.8" y1="141.5" x2="-133.4" y2="196.5" stroke-opacity="0.28"/>
<line x1="-133.4" y1="196.5" x2="-25.7" y2="311.8" stroke-opacity="0.53"/>
<line x1="-25.7" y1="311.8" x2="344.6" y2="708.0" stroke-opacity="0.81"/>
<line x1="344.6" y1="708.0" x2="125382.0" y2="134528.5" stroke-opacity="0.81"/>
<line x1="-447225.8" y1="142807.7" x2="-2944.3" y2="1570.3" stroke-opacity="0.54"/>
<line x1="-2944.3" y1="1570.3" x2="619.2" y2="437.4" stroke-opacity="0.83"/>
<line x1="619.2" y1="437.4" x2="1249.4" y2="237.1" stroke-opacity="0.83"/>
<line x1="1249.4" y1="237.1" x2="1512.1" y2="153.6" stroke-opacity="0.54"/>
<line x1="1512.1" y1="153.6" x2="1656.2" y2="107.7" stroke-opacity="0.28"/>
<line x1="1656.2" y1="107.7" x2="1747.2" y2="78.8" stroke-opacity="0.08"/>
<line x1="-171.3" y1="106.4" x2="-130.8" y2="137.1" stroke-opacity="0.08"/>
<line x1="-130.8" y1="137.1" x2="-62.5" y2="188.8" stroke-opacity="0.28"/>
<line x1="-62.5" y1="188.8" x2="77.2" y2="294.7" stroke-opacity="0.54"/>
<line x1="77.2" y1="294.7" x2="523.7" y2="632.9" stroke-opacity="0.83"/>
<line x1="523.7" y1="632.9" x2="176288.0" y2="133792.5" stroke-opacity="0.83"/>
<line x1="-390894.9" y1="141993.2" x2="-3851.2" y2="2119.6" stroke-opacity="0.54"/>
<line x1="-3851.2" y1="2119.6" x2="698.7" y2="475.2" stroke-opacity="0.83"/>
<line x1="698.7" y1="475.2" x2="1324.7" y2="249.0" stroke-opacity="0.83"/>
<line x1="1324.7" y1="249.0" x2="1573.5" y2="159.1" stroke-opacity="0.54"/>
<line x1="1573.5" y1="159.1" x2="1707.1" y2="110.8" stroke-opacity="0.28"/>
<line x1="1707.1" y1="110.8" x2="1790.4" y2="80.7" stroke-opacity="0.08"/>
<line x1="-129.3" y1="103.6" x2="-79.3" y2="132.9" stroke-opacity="0.08"/>
<line x1="-79.3" y1="132.9" x2="4.1" y2="181.7" stroke-opacity="0.28"/>
<line x1="4.1" y1="181.7" x2="170.8" y2="279.2" stroke-opacity="0.54"/>
<line x1="170.8" y1="279.2" x2="670.4" y2="571.4" stroke-opacity="0.83"/>
<line x1="670.4" y1="571.4" x2="227193.9" y2="133056.4" stroke-opacity="0.83"/>
<line x1="-278233.0" y1="140364.3" x2="-11825.6" y2="6949.7" stroke-opacity="0.54"/>
<line x1="-11825.6" y1="6949.7" x2="906.1" y2="573.8" stroke-opacity="0.83"/>
<line x1="906.1" y1="573.8" x2="1499.3" y2="276.7" stroke-opacity="0.83"/>
<line x1="1499.3" y1="276.7" x2="1709.5" y2="171.5" stroke-opacity="0.54"/>
<line x1="1709.5" y1="171.5" x2="1817.1" y2="117.6" stroke-opacity="0.28"/>
<line x1="1817.1" y1="117.6" x2="1882.5" y2="84.8" stroke-opacity="0.08"/>
<line x1="-49.8" y1="98.3" x2="17.1" y2="125.0" stroke-opacity="0.08"/>
<line x1="17.1" y1="125.0" x2="126.0" y2="168.5" stroke-opacity="0.28"/>
<line x1="126.0" y1="168.5" x2="334.8" y2="252.0" stroke-opacity="0.54"/>
<line x1="334.8" y1="252.0" x2="896.7" y2="476.5" stroke-opacity="0.83"/>
<line x1="896.7" y1="476.5" x2="7620.1" y2="3163.1" stroke-opacity="0.83"/>
<line x1="7620.1" y1="3163.1" x2="329005.8" y2="131584.4" stroke-opacity="0.54"/>
<line x1="-221902.0" y1="139549.8" x2="1044.6" y2="639.6" stroke-opacity="0.83"/>
<line x1="1044.6" y1="639.6" x2="1601.1" y2="292.9" stroke-opacity="0.83"/>
<line x1="1601.1" y1="292.9" x2="1785.0" y2="178.3" stroke-opacity="0.54"/>
<line x1="1785.0" y1="178.3" x2="1876.6" y2="121.2" stroke-opacity="0.28"/>
<line x1="1876.6" y1="121.2" x2="1931.5" y2="87.0" stroke-opacity="0.08"/>
<line x1="-12.1" y1="95.8" x2="62.2" y2="121.3" stroke-opacity="0.08"/>
<line x1="62.2" y1="121.3" x2="181.9" y2="162.5" stroke-opacity="0.28"/>
<line x1="181.9" y1="162.5" x2="407.0" y2="240.0" stroke-opacity="0.54"/>
<line x1="407.0" y1="240.0" x2="985.7" y2="439.2" stroke-opacity="0.83"/>
<line x1="985.7" y1="439.2" x2="5807.9" y2="2098.7" stroke-opacity="0.83"/>
<line x1="5807.9" y1="2098.7" x2="379911.7" y2="130848.3" stroke-opacity="0.54"/>
<line x1="-165571.1" y1="138735.3" x2="1218.1" y2="722.1" stroke-opacity="0.81"/>
<line x1="1218.1" y1="722.1" x2="1715.0" y2="311.0" stroke-opacity="0.81"/>
<line x1="1715.0" y1="311.0" x2="1866.3" y2="185.7" stroke-opacity="0.53"/>
<line x1="1866.3" y1="185.7" x2="1939.6" y2="125.0" stroke-opacity="0.28"/>
<line x1="1939.6" y1="125.0" x2="1982.9" y2="89.3" stroke-opacity="0.08"/>
<line x1="24.3" y1="93.3" x2="105.4" y2="117.8" stroke-opacity="0.08"/>
<line x1="105.4" y1="117.8" x2="234.8" y2="156.8" stroke-opacity="0.28"/>
<line x1="234.8" y1="156.8" x2="473.6" y2="228.9" stroke-opacity="0.53"/>
<line x1="473.6" y1="228.9" x2="1062.9" y2="406.8" stroke-opacity="0.81"/>
<line x1="1062.9" y1="406.8" x2="4897.7" y2="1564.2" stroke-opacity="0.81"/>
<line x1="4897.7" y1="1564.2" x2="430817.7" y2="130112.3" stroke-opacity="0.53"/>
<line x1="-109240.1" y1="137920.9" x2="1441.8" y2="828.4" stroke-opacity="0.79"/>
<line x1="1441.8" y1="828.4" x2="1843.1" y2="331.3" stroke-opacity="0.79"/>
<line x1="1843.1" y1="331.3" x2="1954.2" y2="193.7" stroke-opacity="0.52"/>
<line x1="1954.2" y1="193.7" x2="2006.3" y2="129.1" stroke-opacity="0.27"/>
<line x1="2006.3" y1="129.1" x2="2036.5" y2="91.7" stroke-opacity="0.08"/>
<line x1="59.6" y1="90.9" x2="146.9" y2="114.4" stroke-opacity="0.08"/>
<line x1="146.9" y1="114.4" x2="284.9" y2="151.4" stroke-opacity="0.27"/>
<line x1="284.9" y1="151.4" x2="535.4" y2="218.7" stroke-opacity="0.52"/>
<line x1="535.4" y1="218.7" x2="1130.5" y2="378.4" stroke-opacity="0.79"/>
<line x1="1130.5" y1="378.4" x2="4350.2" y2="1242.6" stroke-opacity="0.79"/>
<line x1="4350.2" y1="1242.6" x2="481723.6" y2="129376.3" stroke-opacity="0.52"/>
<line x1="-52909.2" y1="137106.4" x2="1741.0" y2="970.6" stroke-opacity="0.77"/>
<line x1="1741.0" y1="970.6" x2="1988.3" y2="354.3" stroke-opacity="0.77"/>
<line x1="1988.3" y1="354.3" x2="2049.4" y2="202.3" stroke-opacity="0.52"/>
<line x1="2049.4" y1="202.3" x2="2077.0" y2="133.4" stroke-opacity="0.27"/>
<line x1="2077.0" y1="133.4" x2="2092.8" y2="94.2" stroke-opacity="0.08"/>
<line x1="93.6" y1="88.7" x2="186.8" y2="111.1" stroke-opacity="0.08"/>
<line x1="186.8" y1="111.1" x2="332.5" y2="146.3" stroke-opacity="0.27"/>
<line x1="332.5" y1="146.3" x2="592.8" y2="209.1" stroke-opacity="0.52"/>
<line x1="592.8" y1="209.1" x2="1190.2" y2="353.4" stroke-opacity="0.77"/>
<line x1="1190.2" y1="353.4" x2="3984.7" y2="1027.9" stroke-opacity="0.77"/>
<line x1="3984.7" y1="1027.9" x2="532629.5" y2="128640.2" stroke-opacity="0.52"/>
<line x1="3421.8" y1="136291.9" x2="2161.8" y2="1170.6" stroke-opacity="0.75"/>
<line x1="2161.8" y1="1170.6" x2="2154.4" y2="380.7" stroke-opacity="0.75"/>
<line x1="2154.4" y1="380.7" x2="2152.8" y2="211.7" stroke-opacity="0.51"/>
<line x1="2152.8" y1="211.7" x2="2152.2" y2="138.0" stroke-opacity="0.27"/>
<line x1="2152.2" y1="138.0" x2="2151.8" y2="96.8" stroke-opacity="0.07"/>
<line x1="126.6" y1="86.4" x2="225.1" y2="108.0" stroke-opacity="0.07"/>
<line x1="225.1" y1="108.0" x2="377.7" y2="141.4" stroke-opacity="0.27"/>
<line x1="377.7" y1="141.4" x2="646.2" y2="200.3" stroke-opacity="0.51"/>
<line x1="646.2" y1="200.3" x2="1243.3" y2="331.1" stroke-opacity="0.75"/>
<line x1="1243.3" y1="331.1" x2="3723.3" y2="874.4" stroke-opacity="0.75"/>
<line x1="3723.3" y1="874.4" x2="583535.5" y2="127904.2" stroke-opacity="0.51"/>
<line x1="59752.8" y1="135477.4" x2="2797.3" y2="1472.7" stroke-opacity="0.73"/>
<line x1="2797.3" y1="1472.7" x2="2346.1" y2="411.1" stroke-opacity="0.73"/>
<line x1="2346.1" y1="411.1" x2="2265.7" y2="221.9" stroke-opacity="0.50"/>
<line x1="2265.7" y1="221.9" x2="2232.1" y2="142.9" stroke-opacity="0.26"/>
<line x1="2232.1" y1="142.9" x2="2213.7" y2="99.5" stroke-opacity="0.07"/>
<line x1="158.6" y1="84.3" x2="261.9" y2="105.0" stroke-opacity="0.07"/>
<line x1="261.9" y1="105.0" x2="420.7" y2="136.8" stroke-opacity="0.26"/>
<line x1="420.7" y1="136.8" x2="696.1" y2="192.0" stroke-opacity="0.50"/>
<line x1="696.1" y1="192.0" x2="1290.8" y2="311.2" stroke-opacity="0.73"/>
<line x1="1290.8" y1="311.2" x2="3527.2" y2="759.2" stroke-opacity="0.73"/>
<line x1="3527.2" y1="759.2" x2="634441.4" y2="127168.2" stroke-opacity="0.50"/>
<line x1="116083.7" y1="134663.0" x2="3868.1" y2="1981.6" stroke-opacity="0.70"/>
<line x1="3868.1" y1="1981.6" x2="2569.9" y2="446.6" stroke-opacity="0.70"/>
<line x1="2569.9" y1="446.6" x2="2389.3" y2="233.1" stroke-opacity="0.48"/>
<line x1="2389.3" y1="233.1" x2="2317.4" y2="148.1" stroke-opacity="0.25"/>
<line x1="2317.4" y1="148.1" x2="2278.8" y2="102.4" stroke-opacity="0.07"/>
<line x1="189.5" y1="82.2" x2="297.3" y2="102.1" stroke-opacity="0.07"/>
<line x1="297.3" y1="102.1" x2="461.7" y2="132.4" stroke-opacity="0.25"/>
<line x1="461.7" y1="132.4" x2="742.8" y2="184.2" stroke-opacity="0.48"/>
<line x1="742.8" y1="184.2" x2="1333.6" y2="293.2" stroke-opacity="0.70"/>
<line x1="1333.6" y1="293.2" x2="3374.5" y2="669.6" stroke-opacity="0.70"/>
<line x1="3374.5" y1="669.6" x2="685347.3" y2="126432.1" stroke-opacity="0.48"/>
<line x1="172414.7" y1="133848.5" x2="6054.2" y2="3020.6" stroke-opacity="0.67"/>
<line x1="6054.2" y1="3020.6" x2="2834.5" y2="488.6" stroke-opacity="0.67"/>
<line x1="2834.5" y1="488.6" x2="2525.3" y2="245.5" stroke-opacity="0.47"/>
<line x1="2525.3" y1="245.5" x2="2408.6" y2="153.7" stroke-opacity="0.25"/>
<line x1="2408.6" y1="153.7" x2="2347.3" y2="105.5" stroke-opacity="0.06"/>
<line x1="219.5" y1="80.2" x2="331.5" y2="99.3" stroke-opacity="0.06"/>
<line x1="331.5" y1="99.3" x2="500.8" y2="128.2" stroke-opacity="0.25"/>
<line x1="500.8" y1="128.2" x2="786.6" y2="177.0" stroke-opacity="0.47"/>
<line x1="786.6" y1="177.0" x2="1372.4" y2="277.0" stroke-opacity="0.67"/>
<line x1="1372.4" y1="277.0" x2="3252.3" y2="597.8" stroke-opacity="0.67"/>
<line x1="3252.3" y1="597.8" x2="736253.3" y2="125696.1" stroke-opacity="0.47"/>
<line x1="228745.6" y1="133034.0" x2="12991.9" y2="6318.0" stroke-opacity="0.65"/>
<line x1="12991.9" y1="6318.0" x2="3152.3" y2="539.1" stroke-opacity="0.65"/>
<line x1="3152.3" y1="539.1" x2="2675.6" y2="259.1" stroke-opacity="0.46"/>
<line x1="2675.6" y1="259.1" x2="2506.3" y2="159.7" stroke-opacity="0.24"/>
<line x1="2506.3" y1="159.7" x2="2419.5" y2="108.7" stroke-opacity="0.06"/>
<line x1="248.6" y1="78.3" x2="364.4" y2="96.6" stroke-opacity="0.06"/>
<line x1="364.4" y1="96.6" x2="538.1" y2="124.2" stroke-opacity="0.24"/>
<line x1="538.1" y1="124.2" x2="827.7" y2="170.2" stroke-opacity="0.46"/>
<line x1="827.7" y1="170.2" x2="1407.6" y2="262.2" stroke-opacity="0.65"/>
<line x1="1407.6" y1="262.2" x2="3152.3" y2="539.1" stroke-opacity="0.65"/>
<line x1="3152.3" y1="539.1" x2="787159.2" y2="124960.0" stroke-opacity="0.46"/>
<line x1="285076.6" y1="132219.5" x2="3541.0" y2="600.8" stroke-opacity="0.62"/>
<line x1="3541.0" y1="600.8" x2="2842.6" y2="274.3" stroke-opacity="0.44"/>
<line x1="2842.6" y1="274.3" x2="2611.2" y2="166.1" stroke-opacity="0.23"/>
<line x1="2611.2" y1="166.1" x2="2495.8" y2="112.1" stroke-opacity="0.06"/>
<line x1="276.9" y1="76.4" x2="396.1" y2="94.0" stroke-opacity="0.06"/>
<line x1="396.1" y1="94.0" x2="573.7" y2="120.3" stroke-opacity="0.23"/>
<line x1="573.7" y1="120.3" x2="866.4" y2="163.7" stroke-opacity="0.44"/>
<line x1="866.4" y1="163.7" x2="1439.8" y2="248.7" stroke-opacity="0.62"/>
<line x1="1439.8" y1="248.7" x2="3069.0" y2="490.1" stroke-opacity="0.62"/>
<line x1="3069.0" y1="490.1" x2="42550.0" y2="6340.6" stroke-opacity="0.44"/>
<line x1="42550.0" y1="6340.6" x2="838065.2" y2="124224.0" stroke-opacity="0.23"/>
<line x1="341407.5" y1="131405.1" x2="4027.5" y2="678.0" stroke-opacity="0.60"/>
<line x1="4027.5" y1="678.0" x2="3029.3" y2="291.2" stroke-opacity="0.42"/>
<line x1="3029.3" y1="291.2" x2="2724.2" y2="173.0" stroke-opacity="0.22"/>
<line x1="2724.2" y1="173.0" x2="2576.3" y2="115.7" stroke-opacity="0.05"/>
<line x1="304.3" y1="74.5" x2="426.8" y2="91.5" stroke-opacity="0.05"/>
<line x1="426.8" y1="91.5" x2="607.9" y2="116.7" stroke-opacity="0.22"/>
<line x1="607.9" y1="116.7" x2="903.0" y2="157.7" stroke-opacity="0.42"/>
<line x1="903.0" y1="157.7" x2="1469.3" y2="236.3" stroke-opacity="0.60"/>
<line x1="1469.3" y1="236.3" x2="2998.4" y2="448.7" stroke-opacity="0.60"/>
<line x1="2998.4" y1="448.7" x2="21859.2" y2="3068.0" stroke-opacity="0.42"/>
<line x1="21859.2" y1="3068.0" x2="888971.1" y2="123488.0" stroke-opacity="0.22"/>
<line x1="397738.5" y1="130590.6" x2="4653.8" y2="777.3" stroke-opacity="0.57"/>
<line x1="4653.8" y1="777.3" x2="3239.3" y2="310.2" stroke-opacity="0.41"/>
<line x1="3239.3" y1="310.2" x2="2846.2" y2="180.4" stroke-opacity="0.21"/>
<line x1="2846.2" y1="180.4" x2="2661.6" y2="119.5" stroke-opacity="0.05"/>
<line x1="330.9" y1="72.7" x2="456.3" y2="89.1" stroke-opacity="0.05"/>
<line x1="456.3" y1="89.1" x2="640.5" y2="113.2" stroke-opacity="0.21"/>
<line x1="640.5" y1="113.2" x2="937.5" y2="151.9" stroke-opacity="0.41"/>
<line x1="937.5" y1="151.9" x2="1496.5" y2="224.9" stroke-opacity="0.57"/>
<line x1="1496.5" y1="224.9" x2="2937.9" y2="413.1" stroke-opacity="0.57"/>
<line x1="2937.9" y1="413.1" x2="15184.0" y2="2012.1" stroke-opacity="0.41"/>
<line x1="15184.0" y1="2012.1" x2="939877.0" y2="122751.9" stroke-opacity="0.21"/>
<line x1="454069.4" y1="129776.1" x2="5490.3" y2="910.1" stroke-opacity="0.54"/>
<line x1="5490.3" y1="910.1" x2="3477.3" y2="331.8" stroke-opacity="0.39"/>
<line x1="3477.3" y1="331.8" x2="2978.4" y2="188.5" stroke-opacity="0.20"/>
<line x1="2978.4" y1="188.5" x2="2752.1" y2="123.5" stroke-opacity="0.04"/>
<line x1="356.8" y1="71.0" x2="484.9" y2="86.8" stroke-opacity="0.04"/>
<line x1="484.9" y1="86.8" x2="671.8" y2="109.8" stroke-opacity="0.20"/>
<line x1="671.8" y1="109.8" x2="970.1" y2="146.5" stroke-opacity="0.39"/>
<line x1="970.1" y1="146.5" x2="1521.5" y2="214.4" stroke-opacity="0.54"/>
<line x1="1521.5" y1="214.4" x2="2885.5" y2="382.3" stroke-opacity="0.54"/>
<line x1="2885.5" y1="382.3" x2="11886.5" y2="1490.6" stroke-opacity="0.39"/>
<line x1="11886.5" y1="1490.6" x2="990783.0" y2="122015.9" stroke-opacity="0.20"/>
<line x1="510400.4" y1="128961.6" x2="6664.4" y2="1096.4" stroke-opacity="0.52"/>
<line x1="6664.4" y1="1096.4" x2="3749.4" y2="356.5" stroke-opacity="0.37"/>
<line x1="3749.4" y1="356.5" x2="3122.0" y2="197.2" stroke-opacity="0.19"/>
<line x1="3122.0" y1="197.2" x2="2848.2" y2="127.7" stroke-opacity="0.04"/>
<line x1="381.9" y1="69.3" x2="512.5" y2="84.5" stroke-opacity="0.04"/>
<line x1="512.5" y1="84.5" x2="701.9" y2="106.6" stroke-opacity="0.19"/>
<line x1="701.9" y1="106.6" x2="1001.1" y2="141.4" stroke-opacity="0.37"/>
<line x1="1001.1" y1="141.4" x2="1544.7" y2="204.7" stroke-opacity="0.52"/>
<line x1="1544.7" y1="204.7" x2="2839.6" y2="355.4" stroke-opacity="0.52"/>
<line x1="2839.6" y1="355.4" x2="9920.6" y2="1179.6" stroke-opacity="0.37"/>
<line x1="9920.6" y1="1179.6" x2="1041688.9" y2="121279.9" stroke-opacity="0.19"/>
<line x1="566731.4" y1="128147.2" x2="8431.8" y2="1376.9" stroke-opacity="0.49"/>
<line x1="8431.8" y1="1376.9" x2="4063.3" y2="385.0" stroke-opacity="0.36"/>
<line x1="4063.3" y1="385.0" x2="3278.7" y2="206.8" stroke-opacity="0.18"/>
<line x1="3278.7" y1="206.8" x2="2950.5" y2="132.3" stroke-opacity="0.03"/>
<line x1="406.4" y1="67.7" x2="539.3" y2="82.3" stroke-opacity="0.03"/>
<line x1="539.3" y1="82.3" x2="730.7" y2="103.4" stroke-opacity="0.18"/>
<line x1="730.7" y1="103.4" x2="1030.4" y2="136.5" stroke-opacity="0.36"/>
<line x1="1030.4" y1="136.5" x2="1566.3" y2="195.6" stroke-opacity="0.49"/>
<line x1="1566.3" y1="195.6" x2="2799.1" y2="331.6" stroke-opacity="0.49"/>
<line x1="2799.1" y1="331.6" x2="8615.3" y2="973.2" stroke-opacity="0.36"/>
<line x1="8615.3" y1="973.2" x2="1092594.9" y2="120543.8" stroke-opacity="0.18"/>
<line x1="623062.3" y1="127332.7" x2="11394.6" y2="1847.1" stroke-opacity="0.46"/>
<line x1="11394.6" y1="1847.1" x2="4429.6" y2="418.2" stroke-opacity="0.34"/>
<line x1="4429.6" y1="418.2" x2="3450.2" y2="217.3" stroke-opacity="0.17"/>
<line x1="3450.2" y1="217.3" x2="3059.6" y2="137.1" stroke-opacity="0.03"/>
<line x1="430.1" y1="66.1" x2="565.1" y2="80.2" stroke-opacity="0.03"/>
<line x1="565.1" y1="80.2" x2="758.4" y2="100.5" stroke-opacity="0.17"/>
<line x1="758.4" y1="100.5" x2="1058.3" y2="131.9" stroke-opacity="0.34"/>
<line x1="1058.3" y1="131.9" x2="1586.4" y2="187.2" stroke-opacity="0.46"/>
<line x1="1586.4" y1="187.2" x2="2763.1" y2="310.5" stroke-opacity="0.46"/>
<line x1="2763.1" y1="310.5" x2="7685.4" y2="826.1" stroke-opacity="0.34"/>
<line x1="7685.4" y1="826.1" x2="1143500.8" y2="119807.8" stroke-opacity="0.17"/>
<line x1="679393.3" y1="126518.2" x2="17385.2" y2="2797.8" stroke-opacity="0.44"/>
<line x1="17385.2" y1="2797.8" x2="4862.4" y2="457.5" stroke-opacity="0.32"/>
<line x1="4862.4" y1="457.5" x2="3638.9" y2="228.8" stroke-opacity="0.16"/>
<line x1="3638.9" y1="228.8" x2="3176.2" y2="142.3" stroke-opacity="0.02"/>
<line x1="453.3" y1="64.5" x2="590.2" y2="78.2" stroke-opacity="0.02"/>
<line x1="590.2" y1="78.2" x2="785.1" y2="97.6" stroke-opacity="0.16"/>
<line x1="785.1" y1="97.6" x2="1084.9" y2="127.5" stroke-opacity="0.32"/>
<line x1="1084.9" y1="127.5" x2="1605.1" y2="179.3" stroke-opacity="0.44"/>
<line x1="1605.1" y1="179.3" x2="2730.9" y2="291.5" stroke-opacity="0.44"/>
<line x1="2730.9" y1="291.5" x2="6989.4" y2="716.0" stroke-opacity="0.32"/>
<line x1="6989.4" y1="716.0" x2="1194406.7" y2="119071.8" stroke-opacity="0.16"/>
<line x1="735724.2" y1="125703.7" x2="35893.8" y2="5735.1" stroke-opacity="0.41"/>
<line x1="35893.8" y1="5735.1" x2="5382.0" y2="504.6" stroke-opacity="0.30"/>
<line x1="5382.0" y1="504.6" x2="3847.4" y2="241.5" stroke-opacity="0.15"/>
<line x1="614.5" y1="76.2" x2="810.8" y2="94.8" stroke-opacity="0.15"/>
<line x1="810.8" y1="94.8" x2="1110.1" y2="123.3" stroke-opacity="0.30"/>
<line x1="1110.1" y1="123.3" x2="1622.7" y2="172.0" stroke-opacity="0.41"/>
<line x1="1622.7" y1="172.0" x2="2701.9" y2="274.5" stroke-opacity="0.41"/>
<line x1="2701.9" y1="274.5" x2="6448.9" y2="630.5" stroke-opacity="0.30"/>
<line x1="6448.9" y1="630.5" x2="1245312.7" y2="118335.7" stroke-opacity="0.15"/>
<line x1="792055.2" y1="124889.3" x2="6017.0" y2="562.2" stroke-opacity="0.28"/>
<line x1="6017.0" y1="562.2" x2="4079.1" y2="255.7" stroke-opacity="0.13"/>
<line x1="638.0" y1="74.3" x2="835.5" y2="92.2" stroke-opacity="0.13"/>
<line x1="835.5" y1="92.2" x2="1134.3" y2="119.3" stroke-opacity="0.28"/>
<line x1="1134.3" y1="119.3" x2="1639.1" y2="165.1" stroke-opacity="0.39"/>
<line x1="1639.1" y1="165.1" x2="2675.6" y2="259.1" stroke-opacity="0.39"/>
<line x1="2675.6" y1="259.1" x2="6017.0" y2="562.2" stroke-opacity="0.28"/>
<line x1="6017.0" y1="562.2" x2="1296218.6" y2="117599.7" stroke-opacity="0.13"/>
<line x1="848386.1" y1="124074.8" x2="6810.9" y2="634.2" stroke-opacity="0.26"/>
<line x1="6810.9" y1="634.2" x2="4338.0" y2="271.5" stroke-opacity="0.12"/>
<line x1="660.8" y1="72.4" x2="859.3" y2="89.6" stroke-opacity="0.12"/>
<line x1="859.3" y1="89.6" x2="1157.3" y2="115.5" stroke-opacity="0.26"/>
<line x1="1157.3" y1="115.5" x2="1654.6" y2="158.6" stroke-opacity="0.36"/>
<line x1="1654.6" y1="158.6" x2="2651.8" y2="245.1" stroke-opacity="0.36"/>
<line x1="2651.8" y1="245.1" x2="5664.0" y2="506.4" stroke-opacity="0.26"/>
<line x1="5664.0" y1="506.4" x2="1347124.6" y2="116863.6" stroke-opacity="0.12"/>
<line x1="904717.1" y1="123260.3" x2="7831.9" y2="726.8" stroke-opacity="0.24"/>
<line x1="7831.9" y1="726.8" x2="4629.1" y2="289.3" stroke-opacity="0.11"/>
<line x1="682.9" y1="70.6" x2="882.3" y2="87.1" stroke-opacity="0.11"/>
<line x1="882.3" y1="87.1" x2="1179.3" y2="111.8" stroke-opacity="0.24"/>
<line x1="1179.3" y1="111.8" x2="1669.1" y2="152.5" stroke-opacity="0.34"/>
<line x1="1669.1" y1="152.5" x2="2630.0" y2="232.3" stroke-opacity="0.34"/>
<line x1="2630.0" y1="232.3" x2="5370.0" y2="459.9" stroke-opacity="0.24"/>
<line x1="5370.0" y1="459.9" x2="76487.2" y2="6366.5" stroke-opacity="0.11"/>
<line x1="961048.0" y1="122445.8" x2="9193.4" y2="850.3" stroke-opacity="0.23"/>
<line x1="9193.4" y1="850.3" x2="4959.0" y2="309.4" stroke-opacity="0.10"/>
<line x1="704.4" y1="68.8" x2="904.4" y2="84.8" stroke-opacity="0.10"/>
<line x1="904.4" y1="84.8" x2="1200.3" y2="108.3" stroke-opacity="0.23"/>
<line x1="1200.3" y1="108.3" x2="1682.9" y2="146.7" stroke-opacity="0.32"/>
<line x1="1682.9" y1="146.7" x2="2610.0" y2="220.6" stroke-opacity="0.32"/>
<line x1="2610.0" y1="220.6" x2="5121.4" y2="420.6" stroke-opacity="0.23"/>
<line x1="5121.4" y1="420.6" x2="37089.9" y2="2966.2" stroke-opacity="0.10"/>
<line x1="1017379.0" y1="121631.4" x2="11100.3" y2="1023.3" stroke-opacity="0.21"/>
<line x1="11100.3" y1="1023.3" x2="5336.0" y2="332.4" stroke-opacity="0.09"/>
<line x1="725.3" y1="67.1" x2="925.8" y2="82.4" stroke-opacity="0.09"/>
<line x1="925.8" y1="82.4" x2="1220.5" y2="105.0" stroke-opacity="0.21"/>
<line x1="1220.5" y1="105.0" x2="1695.8" y2="141.3" stroke-opacity="0.29"/>
<line x1="1695.8" y1="141.3" x2="2591.7" y2="209.8" stroke-opacity="0.29"/>
<line x1="2591.7" y1="209.8" x2="4908.5" y2="386.9" stroke-opacity="0.21"/>
<line x1="4908.5" y1="386.9" x2="24986.9" y2="1921.6" stroke-opacity="0.09"/>
<line x1="1073710.0" y1="120816.9" x2="13962.1" y2="1282.9" stroke-opacity="0.19"/>
<line x1="13962.1" y1="1282.9" x2="5770.7" y2="359.0" stroke-opacity="0.08"/>
<line x1="745.6" y1="65.5" x2="946.5" y2="80.2" stroke-opacity="0.08"/>
<line x1="946.5" y1="80.2" x2="1239.8" y2="101.8" stroke-opacity="0.19"/>
<line x1="1239.8" y1="101.8" x2="1708.1" y2="136.2" stroke-opacity="0.27"/>
<line x1="1708.1" y1="136.2" x2="2574.7" y2="199.8" stroke-opacity="0.27"/>
<line x1="2574.7" y1="199.8" x2="4724.0" y2="357.7" stroke-opacity="0.19"/>
<line x1="4724.0" y1="357.7" x2="19111.6" y2="1414.5" stroke-opacity="0.08"/>
<line x1="1130040.9" y1="120002.4" x2="18735.4" y2="1715.9" stroke-opacity="0.17"/>
<line x1="18735.4" y1="1715.9" x2="6277.8" y2="389.9" stroke-opacity="0.06"/>
<line x1="765.3" y1="63.9" x2="966.5" y2="78.1" stroke-opacity="0.06"/>
<line x1="966.5" y1="78.1" x2="1258.3" y2="98.7" stroke-opacity="0.17"/>
<line x1="1258.3" y1="98.7" x2="1719.7" y2="131.3" stroke-opacity="0.25"/>
<line x1="1719.7" y1="131.3" x2="2559.0" y2="190.6" stroke-opacity="0.25"/>
<line x1="2559.0" y1="190.6" x2="4562.7" y2="332.2" stroke-opacity="0.17"/>
<line x1="4562.7" y1="332.2" x2="15640.8" y2="1115.0" stroke-opacity="0.06"/>
<line x1="1186371.9" y1="119187.9" x2="28296.4" y2="2583.2" stroke-opacity="0.16"/>
<line x1="28296.4" y1="2583.2" x2="6876.8" y2="426.5" stroke-opacity="0.05"/>
<line x1="784.5" y1="62.3" x2="985.8" y2="76.0" stroke-opacity="0.05"/>
<line x1="985.8" y1="76.0" x2="1276.1" y2="95.7" stroke-opacity="0.16"/>
<line x1="1276.1" y1="95.7" x2="1730.7" y2="126.7" stroke-opacity="0.23"/>
<line x1="1730.7" y1="126.7" x2="2544.4" y2="182.0" stroke-opacity="0.23"/>
<line x1="2544.4" y1="182.0" x2="4420.4" y2="309.7" stroke-opacity="0.16"/>
<line x1="4420.4" y1="309.7" x2="13349.2" y2="917.2" stroke-opacity="0.05"/>
<line x1="1242702.8" y1="118373.5" x2="57093.6" y2="5195.5" stroke-opacity="0.14"/>
<line x1="57093.6" y1="5195.5" x2="7595.2" y2="470.4" stroke-opacity="0.04"/>
<line x1="803.1" y1="60.8" x2="1004.6" y2="74.0" stroke-opacity="0.04"/>
<line x1="1004.6" y1="74.0" x2="1293.2" y2="92.9" stroke-opacity="0.14"/>
<line x1="1293.2" y1="92.9" x2="1741.2" y2="122.3" stroke-opacity="0.21"/>
<line x1="1741.2" y1="122.3" x2="2530.8" y2="174.1" stroke-opacity="0.21"/>
<line x1="2530.8" y1="174.1" x2="4294.0" y2="289.7" stroke-opacity="0.14"/>
<line x1="4294.0" y1="289.7" x2="11723.1" y2="776.8" stroke-opacity="0.04"/>
<line x1="1299033.8" y1="117559.0" x2="8472.7" y2="524.0" stroke-opacity="0.03"/>
<line x1="821.2" y1="59.3" x2="1022.7" y2="72.0" stroke-opacity="0.03"/>
<line x1="1022.7" y1="72.0" x2="1309.6" y2="90.2" stroke-opacity="0.12"/>
<line x1="1309.6" y1="90.2" x2="1751.1" y2="118.1" stroke-opacity="0.18"/>
<line x1="1751.1" y1="118.1" x2="2518.2" y2="166.6" stroke-opacity="0.18"/>
<line x1="2518.2" y1="166.6" x2="4180.9" y2="271.8" stroke-opacity="0.12"/>
<line x1="4180.9" y1="271.8" x2="10509.3" y2="672.1" stroke-opacity="0.03"/>
<line x1="1355364.7" y1="116744.5" x2="9568.7" y2="590.9" stroke-opacity="0.02"/>
<line x1="838.9" y1="57.8" x2="1040.2" y2="70.1" stroke-opacity="0.02"/>
<line x1="1040.2" y1="70.1" x2="1325.4" y2="87.5" stroke-opacity="0.11"/>
<line x1="1325.4" y1="87.5" x2="1760.6" y2="114.1" stroke-opacity="0.16"/>
<line x1="1760.6" y1="114.1" x2="2506.3" y2="159.7" stroke-opacity="0.16"/>
<line x1="2506.3" y1="159.7" x2="4079.1" y2="255.7" stroke-opacity="0.11"/>
<line x1="4079.1" y1="255.7" x2="9568.7" y2="590.9" stroke-opacity="0.02"/>
<line x1="1057.3" y1="68.3" x2="1340.7" y2="85.0" stroke-opacity="0.09"/>
<line x1="1340.7" y1="85.0" x2="1769.7" y2="110.3" stroke-opacity="0.15"/>
<line x1="1769.7" y1="110.3" x2="2495.2" y2="153.1" stroke-opacity="0.15"/>
<line x1="2495.2" y1="153.1" x2="3987.1" y2="241.1" stroke-opacity="0.09"/>
<line x1="1073.8" y1="66.5" x2="1355.4" y2="82.6" stroke-opacity="0.08"/>
<line x1="1355.4" y1="82.6" x2="1778.3" y2="106.7" stroke-opacity="0.13"/>
<line x1="1778.3" y1="106.7" x2="2484.8" y2="147.0" stroke-opacity="0.13"/>
<line x1="2484.8" y1="147.0" x2="3903.4" y2="227.9" stroke-opacity="0.08"/>
<line x1="1089.8" y1="64.8" x2="1369.5" y2="80.2" stroke-opacity="0.06"/>
<line x1="1369.5" y1="80.2" x2="1786.6" y2="103.2" stroke-opacity="0.11"/>
<line x1="1786.6" y1="103.2" x2="2474.9" y2="141.2" stroke-opacity="0.11"/>
<line x1="2474.9" y1="141.2" x2="3827.0" y2="215.8" stroke-opacity="0.06"/>
<line x1="1105.3" y1="63.1" x2="1383.2" y2="78.0" stroke-opacity="0.05"/>
<line x1="1383.2" y1="78.0" x2="1794.5" y2="99.9" stroke-opacity="0.09"/>
<line x1="1794.5" y1="99.9" x2="2465.7" y2="135.8" stroke-opacity="0.09"/>
<line x1="2465.7" y1="135.8" x2="3757.0" y2="204.7" stroke-opacity="0.05"/>
<line x1="1120.4" y1="61.5" x2="1396.4" y2="75.8" stroke-opacity="0.04"/>
<line x1="1396.4" y1="75.8" x2="1802.0" y2="96.8" stroke-opacity="0.08"/>
<line x1="1802.0" y1="96.8" x2="2456.9" y2="130.6" stroke-opacity="0.08"/>
<line x1="2456.9" y1="130.6" x2="3692.6" y2="194.6" stroke-opacity="0.04"/>
<line x1="1135.1" y1="59.9" x2="1409.1" y2="73.7" stroke-opacity="0.02"/>
<line x1="1409.1" y1="73.7" x2="1809.3" y2="93.7" stroke-opacity="0.06"/>
<line x1="1809.3" y1="93.7" x2="2448.6" y2="125.8" stroke-opacity="0.06"/>
<line x1="2448.6" y1="125.8" x2="3633.2" y2="185.2" stroke-opacity="0.02"/>
<line x1="1421.4" y1="71.6" x2="1816.2" y2="90.8" stroke-opacity="0.05"/>
<line x1="1816.2" y1="90.8" x2="2440.8" y2="121.2" stroke-opacity="0.05"/>
<line x1="1433.4" y1="69.6" x2="1822.9" y2="88.0" stroke-opacity="0.03"/>
<line x1="1822.9" y1="88.0" x2="2433.3" y2="116.8" stroke-opacity="0.03"/>
<line x1="1444.9" y1="67.7" x2="1829.3" y2="85.3" stroke-opacity="0.02"/>
<line x1="1829.3" y1="85.3" x2="2426.3" y2="112.6" stroke-opacity="0.02"/></g><line x1="-271.5" y1="14.1" x2="8301.8" y2="4088.9" stroke="#8c3b48" stroke-width="2"/>
<line x1="-4198.0" y1="2613.4" x2="2073.1" y2="-16.9" stroke="#5c8228" stroke-width="2"/><polygon points="563.9,374.5 799.8,311.5 1022.1,375.5 777.9,467.4" fill="url(#tf)"/><polygon points="563.9,374.5 777.9,467.4 784.3,781.9 593.6,645.7" fill="#8c8d8c"/><defs><linearGradient id="rf" gradientUnits="userSpaceOnUse" x1="800" y1="470" x2="1000" y2="700"><stop offset="0" stop-color="#565656"/><stop offset="1" stop-color="#5f5f5f"/></linearGradient><linearGradient id="tf" gradientUnits="userSpaceOnUse" x1="600" y1="360" x2="1000" y2="400"><stop offset="0" stop-color="#8f9091"/><stop offset="1" stop-color="#949596"/></linearGradient></defs><polygon points="777.9,467.4 1022.1,375.5 999.3,651.1 784.3,781.9" fill="url(#rf)"/><clipPath id="lh"><polygon points="579.7,518.3 781.4,636.2 1010.0,521.8 999.3,651.1 784.3,781.9 593.6,645.7"/></clipPath><g clip-path="url(#lh)"><g stroke="#3a3a3a" stroke-width="1.1" fill="none" opacity="0.2"><line x1="-1782.2" y1="603.3" x2="-483.1" y2="387.7" stroke-opacity="0.70"/>
<line x1="-483.1" y1="387.7" x2="170.8" y2="279.2" stroke-opacity="0.76"/>
<line x1="-11825.6" y1="6949.7" x2="-230959.6" y2="139680.8" stroke-opacity="0.76"/>
<line x1="-1061.0" y1="429.5" x2="-1704.8" y2="819.5" stroke-opacity="0.70"/>
<line x1="-1704.8" y1="819.5" x2="-11825.6" y2="6949.7" stroke-opacity="0.77"/>
<line x1="-1942.2" y1="671.3" x2="-494.0" y2="416.3" stroke-opacity="0.71"/>
<line x1="-494.0" y1="416.3" x2="197.1" y2="294.6" stroke-opacity="0.78"/>
<line x1="-4757.6" y1="3410.1" x2="-180053.6" y2="138944.7" stroke-opacity="0.78"/>
<line x1="-864.7" y1="400.2" x2="-1284.4" y2="724.7" stroke-opacity="0.72"/>
<line x1="-1284.4" y1="724.7" x2="-4757.6" y2="3410.1" stroke-opacity="0.79"/>
<line x1="-2141.9" y1="756.1" x2="-506.6" y2="449.2" stroke-opacity="0.73"/>
<line x1="-506.6" y1="449.2" x2="226.4" y2="311.7" stroke-opacity="0.80"/>
<line x1="-2437.4" y1="2248.2" x2="-129147.7" y2="138208.7" stroke-opacity="0.80"/>
<line x1="-691.0" y1="374.3" x2="-946.7" y2="648.6" stroke-opacity="0.74"/>
<line x1="-946.7" y1="648.6" x2="-2437.4" y2="2248.2" stroke-opacity="0.82"/>
<line x1="-2398.1" y1="864.8" x2="-521.3" y2="487.6" stroke-opacity="0.74"/>
<line x1="-521.3" y1="487.6" x2="259.1" y2="330.8" stroke-opacity="0.82"/>
<line x1="-1283.9" y1="1670.5" x2="-78241.7" y2="137472.7" stroke-opacity="0.82"/>
<line x1="-536.3" y1="351.2" x2="-669.4" y2="586.1" stroke-opacity="0.75"/>
<line x1="-669.4" y1="586.1" x2="-1283.9" y2="1670.5" stroke-opacity="0.84"/>
<line x1="-2738.5" y1="1009.4" x2="-538.7" y2="533.0" stroke-opacity="0.75"/>
<line x1="-538.7" y1="533.0" x2="295.8" y2="352.3" stroke-opacity="0.84"/>
<line x1="-593.9" y1="1325.0" x2="-27335.8" y2="136736.6" stroke-opacity="0.84"/>
<line x1="-397.6" y1="330.6" x2="-437.7" y2="533.9" stroke-opacity="0.76"/>
<line x1="-437.7" y1="533.9" x2="-593.9" y2="1325.0" stroke-opacity="0.86"/>
<line x1="-3213.1" y1="1210.9" x2="-559.5" y2="587.4" stroke-opacity="0.77"/>
<line x1="-559.5" y1="587.4" x2="337.5" y2="376.6" stroke-opacity="0.86"/>
<line x1="-134.8" y1="1095.1" x2="23570.1" y2="136000.6" stroke-opacity="0.86"/>
<line x1="-272.4" y1="311.9" x2="-241.2" y2="489.6" stroke-opacity="0.78"/>
<line x1="-241.2" y1="489.6" x2="-134.8" y2="1095.1" stroke-opacity="0.88"/>
<line x1="-3920.5" y1="1511.3" x2="-584.9" y2="653.8" stroke-opacity="0.78"/>
<line x1="-584.9" y1="653.8" x2="385.1" y2="404.5" stroke-opacity="0.88"/>
<line x1="192.7" y1="931.0" x2="3759.5" y2="7381.3" stroke-opacity="0.88"/>
<line x1="3759.5" y1="7381.3" x2="74476.1" y2="135264.6" stroke-opacity="0.78"/>
<line x1="-159.0" y1="295.0" x2="-72.4" y2="451.6" stroke-opacity="0.79"/>
<line x1="-72.4" y1="451.6" x2="192.7" y2="931.0" stroke-opacity="0.90"/>
<line x1="-5088.0" y1="2007.1" x2="-616.6" y2="736.8" stroke-opacity="0.78"/>
<line x1="-616.6" y1="736.8" x2="440.0" y2="436.6" stroke-opacity="0.89"/>
<line x1="438.1" y1="808.1" x2="2908.7" y2="3452.3" stroke-opacity="0.89"/>
<line x1="2908.7" y1="3452.3" x2="125382.0" y2="134528.5" stroke-opacity="0.78"/>
<line x1="-55.7" y1="279.6" x2="74.1" y2="418.6" stroke-opacity="0.79"/>
<line x1="74.1" y1="418.6" x2="438.1" y2="808.1" stroke-opacity="0.92"/>
<line x1="-7380.2" y1="2980.4" x2="-657.4" y2="843.2" stroke-opacity="0.79"/>
<line x1="-657.4" y1="843.2" x2="504.0" y2="474.0" stroke-opacity="0.91"/>
<line x1="628.9" y1="712.6" x2="2646.4" y2="2241.1" stroke-opacity="0.91"/>
<line x1="2646.4" y1="2241.1" x2="176288.0" y2="133792.5" stroke-opacity="0.79"/>
<line x1="38.7" y1="265.5" x2="202.5" y2="389.6" stroke-opacity="0.80"/>
<line x1="202.5" y1="389.6" x2="628.9" y2="712.6" stroke-opacity="0.93"/>
<line x1="-13933.8" y1="5763.3" x2="-711.6" y2="984.9" stroke-opacity="0.79"/>
<line x1="-711.6" y1="984.9" x2="579.7" y2="518.3" stroke-opacity="0.91"/>
<line x1="781.4" y1="636.2" x2="2519.0" y2="1652.5" stroke-opacity="0.91"/>
<line x1="2519.0" y1="1652.5" x2="227193.9" y2="133056.4" stroke-opacity="0.79"/>
<line x1="125.4" y1="252.6" x2="316.0" y2="364.1" stroke-opacity="0.80"/>
<line x1="316.0" y1="364.1" x2="781.4" y2="636.2" stroke-opacity="0.95"/>
<line x1="-278233.0" y1="140364.3" x2="-900.4" y2="1478.5" stroke-opacity="0.79"/>
<line x1="-900.4" y1="1478.5" x2="781.4" y2="636.2" stroke-opacity="0.91"/>
<line x1="1010.0" y1="521.8" x2="1368.9" y2="342.0" stroke-opacity="0.91"/>
<line x1="1368.9" y1="342.0" x2="1555.9" y2="248.3" stroke-opacity="0.79"/>
<line x1="1010.0" y1="521.8" x2="2393.8" y2="1074.7" stroke-opacity="0.91"/>
<line x1="2393.8" y1="1074.7" x2="329005.8" y2="131584.4" stroke-opacity="0.79"/>
<line x1="-221902.0" y1="139549.8" x2="-1087.8" y2="1968.2" stroke-opacity="0.79"/>
<line x1="-1087.8" y1="1968.2" x2="919.9" y2="717.3" stroke-opacity="0.91"/>
<line x1="919.9" y1="717.3" x2="1440.3" y2="393.1" stroke-opacity="0.93"/>
<line x1="1440.3" y1="393.1" x2="1651.3" y2="261.6" stroke-opacity="0.80"/>
<line x1="1097.8" y1="477.7" x2="2358.5" y2="911.6" stroke-opacity="0.91"/>
<line x1="2358.5" y1="911.6" x2="22679.4" y2="7905.1" stroke-opacity="0.79"/>
<line x1="-165571.1" y1="138735.3" x2="-1458.3" y2="2936.8" stroke-opacity="0.78"/>
<line x1="-1458.3" y1="2936.8" x2="1098.0" y2="821.5" stroke-opacity="0.89"/>
<line x1="1098.0" y1="821.5" x2="1577.6" y2="424.6" stroke-opacity="0.92"/>
<line x1="1577.6" y1="424.6" x2="1756.9" y2="276.3" stroke-opacity="0.79"/>
<line x1="1173.1" y1="440.0" x2="2332.1" y2="789.8" stroke-opacity="0.89"/>
<line x1="2332.1" y1="789.8" x2="11306.6" y2="3498.4" stroke-opacity="0.78"/>
<line x1="-109240.1" y1="137920.9" x2="-2537.2" y2="5756.9" stroke-opacity="0.78"/>
<line x1="-2537.2" y1="5756.9" x2="1335.3" y2="960.2" stroke-opacity="0.88"/>
<line x1="1335.3" y1="960.2" x2="1738.0" y2="461.5" stroke-opacity="0.90"/>
<line x1="1738.0" y1="461.5" x2="1874.4" y2="292.6" stroke-opacity="0.79"/>
<line x1="1238.4" y1="407.4" x2="2311.7" y2="695.5" stroke-opacity="0.88"/>
<line x1="2311.7" y1="695.5" x2="8042.5" y2="2233.7" stroke-opacity="0.78"/>
<line x1="-52909.2" y1="137106.4" x2="-50360.2" y2="130756.7" stroke-opacity="0.77"/>
<line x1="-50360.2" y1="130756.7" x2="1667.2" y2="1154.3" stroke-opacity="0.86"/>
<line x1="1667.2" y1="1154.3" x2="1927.8" y2="505.1" stroke-opacity="0.88"/>
<line x1="1927.8" y1="505.1" x2="2005.8" y2="310.8" stroke-opacity="0.78"/>
<line x1="1295.5" y1="378.8" x2="2295.4" y2="620.2" stroke-opacity="0.86"/>
<line x1="2295.4" y1="620.2" x2="6494.0" y2="1633.7" stroke-opacity="0.77"/>
<line x1="3421.8" y1="136291.9" x2="2164.4" y2="1445.1" stroke-opacity="0.84"/>
<line x1="2164.4" y1="1445.1" x2="2156.1" y2="557.5" stroke-opacity="0.86"/>
<line x1="2156.1" y1="557.5" x2="2154.0" y2="331.4" stroke-opacity="0.76"/>
<line x1="1345.8" y1="353.6" x2="2282.1" y2="558.7" stroke-opacity="0.84"/>
<line x1="2282.1" y1="558.7" x2="5590.1" y2="1283.4" stroke-opacity="0.75"/>
<line x1="59752.8" y1="135477.4" x2="2991.1" y2="1928.7" stroke-opacity="0.82"/>
<line x1="2991.1" y1="1928.7" x2="2435.7" y2="621.8" stroke-opacity="0.84"/>
<line x1="2435.7" y1="621.8" x2="2322.2" y2="354.8" stroke-opacity="0.75"/>
<line x1="1390.6" y1="331.1" x2="2271.0" y2="507.5" stroke-opacity="0.82"/>
<line x1="2271.0" y1="507.5" x2="4997.5" y2="1053.8" stroke-opacity="0.74"/>
<line x1="116083.7" y1="134663.0" x2="4637.9" y2="2891.8" stroke-opacity="0.80"/>
<line x1="4637.9" y1="2891.8" x2="2786.1" y2="702.3" stroke-opacity="0.82"/>
<line x1="2786.1" y1="702.3" x2="2514.8" y2="381.5" stroke-opacity="0.74"/>
<line x1="1430.6" y1="311.1" x2="2261.7" y2="464.3" stroke-opacity="0.80"/>
<line x1="2261.7" y1="464.3" x2="4579.2" y2="891.7" stroke-opacity="0.73"/>
<line x1="172414.7" y1="133848.5" x2="9524.9" y2="5750.0" stroke-opacity="0.78"/>
<line x1="9524.9" y1="5750.0" x2="3238.3" y2="806.2" stroke-opacity="0.79"/>
<line x1="3238.3" y1="806.2" x2="2737.7" y2="412.5" stroke-opacity="0.72"/>
<line x1="1466.7" y1="293.0" x2="2253.7" y2="427.4" stroke-opacity="0.78"/>
<line x1="2253.7" y1="427.4" x2="4268.0" y2="771.1" stroke-opacity="0.71"/>
<line x1="228745.6" y1="133034.0" x2="3844.0" y2="945.3" stroke-opacity="0.77"/>
<line x1="3844.0" y1="945.3" x2="2998.4" y2="448.7" stroke-opacity="0.70"/>
<line x1="1499.3" y1="276.7" x2="2246.7" y2="395.3" stroke-opacity="0.76"/>
<line x1="2246.7" y1="395.3" x2="4027.5" y2="678.0" stroke-opacity="0.70"/></g><line x1="906.1" y1="573.8" x2="8301.8" y2="4088.9" stroke="#8c3b48" stroke-width="2"/>
<line x1="-4198.0" y1="2613.4" x2="670.4" y2="571.4" stroke="#5c8228" stroke-width="2"/></g><polyline points="1022.1,375.5 799.8,311.5 563.9,374.5 593.6,645.7 784.3,781.9 999.3,651.1 1022.1,375.5" fill="none" stroke="#151515" stroke-width="1.05"/><line x1="777.9" y1="467.4" x2="1022.1" y2="375.5" stroke="#fff" stroke-width="1.3"/><polyline points="563.9,374.5 777.9,467.4 784.3,781.9" fill="none" stroke="#ffa030" stroke-width="1.3"/><g transform="translate(793,519.5)"><path d="M0 -22 L0 -6 M0 6 L0 22 M-19 -7.5 L-5.5 -2.2 M5.5 -2.2 L19 -7.5 M-19 8 L-5.5 2.5 M5.5 2.5 L19 8" stroke="#111" stroke-width="1.1"/><circle r="12.6" fill="none" stroke="#f4f4f4" stroke-width="2"/><circle r="12.6" fill="none" stroke="#e8262b" stroke-width="2" stroke-dasharray="4.95 4.95" stroke-dashoffset="2.5"/><circle r="3" fill="#f5a030" stroke="#222" stroke-width="1"/></g><line x1="1542.1" y1="733.8" x2="1609.4" y2="544" stroke="#262626" stroke-width="1"/><rect x="473" y="218" width="669" height="624" fill="none" stroke="#ed1c24" stroke-width="8"/></g></svg></div><div class="r" style="left:1px;top:62px;width:1584px;height:34px;background:#393939;border-radius:7px 7px 0 0;"></div><div class="r" style="left:12px;top:67px;width:38px;height:23px;background:#282828;border-radius:4px;"></div><svg style="left:8px;top:62px;" width="40" height="30" viewBox="0 0 40 30"><path d="M9.9 15.6 L17.2 15.6 M9.9 21.4 L27 21.4 M13.5 14 L12 25 M24.5 17.7 L23.4 25" stroke="#d8d8d8" stroke-width="1.3" fill="none"/>
    <circle cx="22.4" cy="12.5" r="4.6" fill="#e6e6e6"/><path d="M19.8 12.3 A2.7 2.7 0 0 1 22.3 9.7" stroke="#8a8a8a" stroke-width="1" fill="none"/></svg><svg style="left:39px;top:77px;" width="8" height="6" viewBox="0 0 8 6"><path d="M1 1 L4 4 L7 1" fill="none" stroke="#d0d0d0" stroke-width="1.3" stroke-linecap="round" stroke-linejoin="round"/></svg><div class="r" style="left:58px;top:67px;width:135px;height:23px;background:#282828;border-radius:4px;"></div><svg style="left:62px;top:69px;" width="20" height="20" viewBox="0 0 20 20"><rect x="1.4" y="2.6" width="3.8" height="3.8" rx="0.8" fill="none" stroke="#d0d0d0" stroke-width="1.1"/>
    <rect x="1.4" y="14" width="3.8" height="3.8" rx="0.8" fill="none" stroke="#d0d0d0" stroke-width="1.1"/>
    <rect x="13.9" y="14" width="3.8" height="3.8" rx="0.8" fill="none" stroke="#d0d0d0" stroke-width="1.1"/>
    <rect x="12.7" y="1.1" width="6.2" height="5.9" fill="#e6e6e6"/>
    <path d="M3.3 6.5 L3.3 14 M5.3 15.9 L13.8 15.9 M15.8 7 L15.8 14 M5.3 4.5 L10.5 4.5" stroke="#d0d0d0" stroke-width="1.1" fill="none"/></svg><div class="t" style="left:90px;top:68px;color:#e6e6e6;">編集モード</div><svg style="left:182px;top:77px;" width="8" height="6" viewBox="0 0 8 6"><path d="M1 1 L4 4 L7 1" fill="none" stroke="#d0d0d0" stroke-width="1.3" stroke-linecap="round" stroke-linejoin="round"/></svg><div class="r" style="left:201px;top:67px;width:73px;height:23px;background:#545454;border-radius:4px;"></div><div class="r" style="left:225px;top:67px;width:24px;height:23px;background:#4772b3;border-radius:0px;"></div><div class="r" style="left:224.5px;top:67px;width:1px;height:23px;background:#3a3a3a;border-radius:0px;"></div><div class="r" style="left:249px;top:67px;width:1px;height:23px;background:#3a3a3a;border-radius:0px;"></div><svg style="left:196px;top:62px;" width="84" height="33" viewBox="0 0 84 33"><path d="M10.3 10.7 L12.7 8.5 L24.5 8.5 L24.5 21 L21 23.6 L9.4 23.6 L9.4 19.2" fill="none" stroke="#d2d2d2" stroke-width="1.2"/>
    <rect x="7.9" y="13.1" width="5" height="4.6" fill="#e8e8e8"/>
    <path d="M39.6 23.6 L34.6 23.6 L34.6 11.6 L37.2 8.5 L49.6 8.5 L49.6 19.2 L46.4 22.5" fill="none" stroke="#dce4f0" stroke-width="1.5"/>
    <rect x="41.1" y="13.1" width="3.7" height="11.8" fill="#ffffff"/>
    <path d="M60.1 10.9 L62.6 8.5 L74.6 8.5 L74.6 19.7 L71.3 22.5" fill="none" stroke="#d2d2d2" stroke-width="1.2"/>
    <rect x="57.1" y="13.1" width="12.7" height="11.8" fill="#e8e8e8"/></svg><div class="t" style="left:290px;top:68px;color:#e0e0e0;">ビュー</div><div class="t" style="left:350px;top:68px;color:#e0e0e0;">選択</div><div class="t" style="left:397px;top:68px;color:#e0e0e0;">追加</div><div class="t" style="left:445px;top:68px;color:#e0e0e0;">メッシュ</div><div class="t" style="left:519px;top:68px;color:#e0e0e0;">頂点</div><div class="t" style="left:566px;top:68px;color:#e0e0e0;">辺</div><div class="t" style="left:600px;top:68px;color:#e0e0e0;">面</div><div class="t" style="left:633px;top:68px;color:#e0e0e0;"><span class="l">UV</span></div><div class="r" style="left:682px;top:67px;width:98px;height:23px;background:#282828;border-radius:4px;"></div><svg style="left:686px;top:69px;" width="20" height="20" viewBox="0 0 20 20"><path d="M3.5 3 L3.5 16.5 L16 16.5 M3.5 16.5 L13.5 6.5" stroke="#dcdcdc" stroke-width="1.2" fill="none"/><path d="M1.5 5 L3.5 2.5 L5.5 5 M14 14.5 L16.5 16.5 L14 18.5 M10.5 6 L14 6 L14 9.5" stroke="#dcdcdc" stroke-width="1.2" fill="none"/><circle cx="3.5" cy="16.5" r="1.6" fill="#282828" stroke="#dcdcdc" stroke-width="1"/></svg><div class="t" style="left:713px;top:68px;color:#e6e6e6;">グロ<span class="l">...</span></div><svg style="left:768px;top:77px;" width="8" height="6" viewBox="0 0 8 6"><path d="M1 1 L4 4 L7 1" fill="none" stroke="#d0d0d0" stroke-width="1.3" stroke-linecap="round" stroke-linejoin="round"/></svg><div class="r" style="left:788px;top:67px;width:38px;height:23px;background:#282828;border-radius:4px;"></div><svg style="left:792px;top:69px;" width="20" height="20" viewBox="0 0 20 20"><circle cx="11.5" cy="7" r="5" fill="none" stroke="#dcdcdc" stroke-width="1.2"/><circle cx="7" cy="13" r="5" fill="none" stroke="#dcdcdc" stroke-width="1.2"/><circle cx="9.3" cy="10" r="1.5" fill="#e6e6e6"/></svg><svg style="left:815px;top:77px;" width="8" height="6" viewBox="0 0 8 6"><path d="M1 1 L4 4 L7 1" fill="none" stroke="#d0d0d0" stroke-width="1.3" stroke-linecap="round" stroke-linejoin="round"/></svg><div class="r" style="left:834px;top:67px;width:62px;height:23px;background:#282828;border-radius:4px;"></div><div class="r" style="left:834px;top:67px;width:24px;height:23px;background:#4a4a4a;border-radius:4px 0 0 4px;"></div><svg style="left:836px;top:69px;" width="20" height="19" viewBox="0 0 20 19"><path d="M4 9 L10 15.5 L11.8 13.8 L6.3 8 A3.8 3.8 0 0 1 12 3 A3.8 3.8 0 0 1 13.4 9 L15.3 10.8 A6.3 6.3 0 0 0 10.5 0.8 A6.3 6.3 0 0 0 4 9 Z" fill="none" stroke="#b8b8b8" stroke-width="1.1"/></svg><svg style="left:859px;top:69px;" width="22" height="20" viewBox="0 0 22 20"><path d="M2 13.5 L17 13.5 M2.5 10 L2.5 17 M6.3 11 L6.3 16 M10 11 L10 16 M13.7 10 L13.7 17" stroke="#dcdcdc" stroke-width="1.2"/><rect x="15" y="2" width="3.5" height="3.5" fill="#e6e6e6"/></svg><svg style="left:885px;top:77px;" width="8" height="6" viewBox="0 0 8 6"><path d="M1 1 L4 4 L7 1" fill="none" stroke="#d0d0d0" stroke-width="1.3" stroke-linecap="round" stroke-linejoin="round"/></svg><div class="r" style="left:905px;top:67px;width:63px;height:23px;background:#282828;border-radius:4px;"></div><div class="r" style="left:905px;top:67px;width:23px;height:23px;background:#4a4a4a;border-radius:4px 0 0 4px;"></div><svg style="left:907px;top:69px;" width="19" height="19" viewBox="0 0 19 19"><circle cx="9.5" cy="9.5" r="7" fill="none" stroke="#9a9a9a" stroke-width="1"/><circle cx="9.5" cy="9.5" r="2.3" fill="#d0d0d0"/></svg><svg style="left:931px;top:69px;" width="20" height="19" viewBox="0 0 20 19"><path d="M2.5 16.5 Q5.5 16.5 7 9 Q9 2 10 2 Q11 2 13 9 Q14.5 16.5 17.5 16.5" fill="none" stroke="#b0b0b0" stroke-width="1.1"/></svg><svg style="left:956px;top:77px;" width="8" height="6" viewBox="0 0 8 6"><path d="M1 1 L4 4 L7 1" fill="none" stroke="#5f5f5f" stroke-width="1.3" stroke-linecap="round" stroke-linejoin="round"/></svg><div class="r" style="left:1226px;top:67px;width:38px;height:23px;background:#282828;border-radius:4px;"></div><svg style="left:1220px;top:62px;" width="50" height="33" viewBox="0 0 50 33"><path d="M9.6 16.4 L18.3 19.3 L14.6 20.8 L17.8 24.6 L16.5 25.8 L13.4 22 L11.8 25.2 Z" fill="#e6e6e6"/><path d="M11.8 12.5 Q19.3 4.5 26.8 12.5 Q19.3 20.5 11.8 12.5 Z" fill="none" stroke="#e6e6e6" stroke-width="1.6"/><circle cx="19.3" cy="12.5" r="2.3" fill="#e6e6e6"/></svg><svg style="left:1253px;top:77px;" width="8" height="6" viewBox="0 0 8 6"><path d="M1 1 L4 4 L7 1" fill="none" stroke="#d0d0d0" stroke-width="1.3" stroke-linecap="round" stroke-linejoin="round"/></svg><div class="r" style="left:1272px;top:67px;width:48px;height:23px;background:#282828;border-radius:4px;"></div><div class="r" style="left:1272px;top:67px;width:24px;height:23px;background:#4772b3;border-radius:4px 0 0 4px;"></div><svg style="left:1220px;top:62px;" width="80" height="33" viewBox="0 0 80 33"><path d="M55.9 11.6 Q64.5 12.5 67.4 24" fill="none" stroke="#f0f0f0" stroke-width="1.3"/><path d="M59.2 20.8 L70.8 9.2 M65.5 8.9 L71.1 8.9 L71.1 14.5" fill="none" stroke="#f0f0f0" stroke-width="1.3"/><circle cx="57.8" cy="22.2" r="2.1" fill="#4772b3" stroke="#f0f0f0" stroke-width="1.2"/></svg><svg style="left:1304px;top:77px;" width="8" height="6" viewBox="0 0 8 6"><path d="M1 1 L4 4 L7 1" fill="none" stroke="#d0d0d0" stroke-width="1.3" stroke-linecap="round" stroke-linejoin="round"/></svg><div class="r" style="left:1328px;top:67px;width:88px;height:23px;background:#282828;border-radius:4px;"></div><div class="r" style="left:1328px;top:67px;width:24px;height:23px;background:#4772b3;border-radius:4px 0 0 4px;"></div><div class="r" style="left:1376px;top:67px;width:1px;height:23px;background:#1f1f1f;border-radius:0px;"></div><svg style="left:1320px;top:62px;" width="40" height="33" viewBox="0 0 40 33"><circle cx="16.6" cy="18.6" r="5.4" fill="none" stroke="#f0f0f0" stroke-width="1.4"/><circle cx="21.4" cy="14.3" r="6.2" fill="#f4f4f4" stroke="#4772b3" stroke-width="1.2"/><path d="M18.8 12.2 L20.4 13.8 M22.2 15.4 L23.8 17" stroke="#4772b3" stroke-width="1"/></svg><svg style="left:1360px;top:77px;" width="8" height="6" viewBox="0 0 8 6"><path d="M1 1 L4 4 L7 1" fill="none" stroke="#d0d0d0" stroke-width="1.3" stroke-linecap="round" stroke-linejoin="round"/></svg><svg style="left:1380px;top:69px;" width="20" height="20" viewBox="0 0 20 20"><rect x="1.4" y="2.6" width="3.8" height="3.8" rx="0.8" fill="none" stroke="#d0d0d0" stroke-width="1.1"/>
    <rect x="1.4" y="14" width="3.8" height="3.8" rx="0.8" fill="none" stroke="#d0d0d0" stroke-width="1.1"/>
    <rect x="13.9" y="14" width="3.8" height="3.8" rx="0.8" fill="none" stroke="#d0d0d0" stroke-width="1.1"/>
    <rect x="12.7" y="1.1" width="6.2" height="5.9" fill="#e6e6e6"/>
    <path d="M3.3 6.5 L3.3 14 M5.3 15.9 L13.8 15.9 M15.8 7 L15.8 14 M5.3 4.5 L10.5 4.5" stroke="#d0d0d0" stroke-width="1.1" fill="none"/></svg><svg style="left:1405px;top:77px;" width="8" height="6" viewBox="0 0 8 6"><path d="M1 1 L4 4 L7 1" fill="none" stroke="#d0d0d0" stroke-width="1.3" stroke-linecap="round" stroke-linejoin="round"/></svg><div class="r" style="left:1424px;top:67px;width:23px;height:23px;background:#4a4a4a;border-radius:4px;"></div><svg style="left:1426px;top:69px;" width="19" height="19" viewBox="0 0 19 19"><rect x="6" y="2.5" width="10.5" height="10.5" fill="none" stroke="#dcdcdc" stroke-width="1.1"/><rect x="2.5" y="6" width="10.5" height="10.5" fill="#4a4a4a" stroke="#dcdcdc" stroke-width="1.1"/><path d="M5.5 9 L5.5 13.5 L9.5 13.5" stroke="#dcdcdc" stroke-width="1.1" fill="none"/></svg><div class="r" style="left:1455px;top:67px;width:120px;height:23px;background:#282828;border-radius:4px;"></div><div class="r" style="left:1455px;top:67px;width:95px;height:23px;background:#545454;border-radius:4px 0 0 4px;"></div><div class="r" style="left:1478px;top:67px;width:24px;height:23px;background:#4772b3;border-radius:0px;"></div><div class="r" style="left:1477.5px;top:67px;width:1px;height:23px;background:#3f3f3f;border-radius:0px;"></div><div class="r" style="left:1501.5px;top:67px;width:1px;height:23px;background:#3f3f3f;border-radius:0px;"></div><div class="r" style="left:1525.5px;top:67px;width:1px;height:23px;background:#3f3f3f;border-radius:0px;"></div><div class="r" style="left:1549.5px;top:67px;width:1px;height:23px;background:#3f3f3f;border-radius:0px;"></div><svg style="left:1457px;top:69px;" width="20" height="19" viewBox="0 0 20 19"><circle cx="10" cy="9.5" r="7" fill="none" stroke="#dcdcdc" stroke-width="1.1"/><ellipse cx="10" cy="9.5" rx="3.2" ry="7" fill="none" stroke="#dcdcdc" stroke-width="1.1"/><path d="M3 9.5 L17 9.5" stroke="#dcdcdc" stroke-width="1.1"/></svg><svg style="left:1480px;top:69px;" width="20" height="19" viewBox="0 0 20 19"><circle cx="10" cy="9.5" r="7.2" fill="#ffffff"/></svg><svg style="left:1500px;top:62px;" width="60" height="33" viewBox="0 0 60 33"><circle cx="13.8" cy="16.4" r="7.3" fill="none" stroke="#d8d8d8" stroke-width="1.3"/><path d="M13.8 9.1 A7.3 7.3 0 0 0 13.8 23.7 Z" fill="#cfcfcf"/><path d="M16.5 21.8 L17.3 23 M18.5 20.5 L19.6 21.5 M20 18.6 L21.2 19.2" stroke="#d8d8d8" stroke-width="0.9"/></svg><svg style="left:1524px;top:62px;" width="36" height="33" viewBox="0 0 36 33"><circle cx="13.9" cy="16.4" r="7.3" fill="none" stroke="#d8d8d8" stroke-width="1.3"/><path d="M10 14.5 A4 4 0 0 1 13.5 11" fill="none" stroke="#d8d8d8" stroke-width="1.6"/><path d="M16.5 21.5 L17.5 22.8 M18.5 20 L19.8 21 M20 18 L21.3 18.6" stroke="#d8d8d8" stroke-width="0.9"/></svg><svg style="left:1558px;top:77px;" width="8" height="6" viewBox="0 0 8 6"><path d="M1 1 L4 4 L7 1" fill="none" stroke="#d0d0d0" stroke-width="1.3" stroke-linecap="round" stroke-linejoin="round"/></svg><div class="r" style="left:1px;top:96px;width:140px;height:30px;background:#393939;border-radius:0 0 6px 0;"></div><div class="r" style="left:11px;top:99px;width:118.5px;height:23px;background:#545454;border-radius:4px;"></div><div class="r" style="left:11px;top:99px;width:24px;height:23px;background:#4772b3;border-radius:4px 0 0 4px;"></div><div class="r" style="left:34px;top:99px;width:1px;height:23px;background:#474747;border-radius:0px;"></div><div class="r" style="left:58.5px;top:99px;width:1px;height:23px;background:#474747;border-radius:0px;"></div><div class="r" style="left:82.5px;top:99px;width:1px;height:23px;background:#474747;border-radius:0px;"></div><div class="r" style="left:106.4px;top:99px;width:1px;height:23px;background:#474747;border-radius:0px;"></div><svg style="left:0px;top:95px;" width="140" height="30" viewBox="0 0 140 30"><path d="M13.7 7.1 L31.1 7.1 L31.1 23.8 L13.7 23.8 Z" fill="none" stroke="#f4f4f4" stroke-width="1.5" stroke-dasharray="3.2 2.6" stroke-dashoffset="1.6"/>
    <path d="M38.2 12.8 L43.4 12.8 L43.4 7.1 L54.9 7.1 L54.9 18.6 L49.2 18.6 L49.2 24 L38.2 24 Z" fill="#cdcdcd"/>
    <path d="M67.4 7.1 L78.8 7.1 L78.8 18.6 L73.1 18.6 L73.1 12.8 L67.4 12.8 Z" fill="#cdcdcd"/>
    <path d="M62 12.3 L62 23.8 L73.6 23.8" fill="none" stroke="#cdcdcd" stroke-width="1.4" stroke-dasharray="2.4 2.2"/>
    <path d="M86.1 12.3 L91.3 12.3 L91.3 18.6 L97.6 18.6 L97.6 23.8 L86.1 23.8 Z M91.3 7.1 L103 7.1 L103 18.6 L97.6 18.6 L97.6 12.3 L91.3 12.3 Z" fill="#cdcdcd"/>
    <path d="M110.1 7.1 L126.7 7.1 L126.7 23.8 L110.1 23.8 Z" fill="none" stroke="#cdcdcd" stroke-width="1.4" stroke-dasharray="2.6 2.4" stroke-dashoffset="1.3"/>
    <rect x="115.3" y="12.8" width="6.8" height="5.8" fill="#cdcdcd"/></svg><div class="r" style="left:1337px;top:96px;width:248px;height:30px;background:#393939;border-radius:0 0 0 6px;"></div><svg style="left:1348px;top:101px;" width="22" height="19" viewBox="0 0 22 19"><path d="M10.5 1.5 L10.5 18" stroke="#cfcfcf" stroke-width="1.1" stroke-dasharray="2 1.5"/><path d="M8.5 4 Q4 0.5 2 3.5 Q1 6 4.5 9 Q1 12 2.5 15.5 Q5 18 8.5 14" fill="none" stroke="#cfcfcf" stroke-width="1.1"/><path d="M12.5 4 Q17 0.5 19 3.5 Q20 6 16.5 9 Q20 12 18.5 15.5 Q16 18 12.5 14" fill="none" stroke="#cfcfcf" stroke-width="1.1"/></svg><div class="r" style="left:1373px;top:99px;width:64px;height:23px;background:#545454;border-radius:4px;"></div><div class="r" style="left:1394.5px;top:99px;width:1px;height:23px;background:#3f3f3f;border-radius:0px;"></div><div class="r" style="left:1415.5px;top:99px;width:1px;height:23px;background:#3f3f3f;border-radius:0px;"></div><div class="t" style="left:1234px;width:300px;text-align:center;top:100px;color:#e6e6e6;"><span class="l">X</span></div><div class="t" style="left:1255px;width:300px;text-align:center;top:100px;color:#e6e6e6;"><span class="l">Y</span></div><div class="t" style="left:1276px;width:300px;text-align:center;top:100px;color:#e6e6e6;"><span class="l">Z</span></div><div class="r" style="left:1445px;top:99px;width:23px;height:23px;background:#4a4a4a;border-radius:4px;"></div><svg style="left:1447px;top:101px;" width="19" height="19" viewBox="0 0 19 19"><rect x="1.5" y="12" width="4" height="4" fill="none" stroke="#9a9a9a" stroke-width="1.1"/><rect x="13" y="1.5" width="4" height="4" fill="none" stroke="#9a9a9a" stroke-width="1.1"/><path d="M4 10 Q5 4.5 11 3.5 M14.5 8 Q13.5 13.5 7.5 14.5" fill="none" stroke="#9a9a9a" stroke-width="1.1" stroke-dasharray="2.5 1.5"/></svg><div class="r" style="left:1476px;top:99px;width:99.5px;height:23px;background:#282828;border-radius:4px;"></div><div class="t" style="left:1485px;top:101px;color:#e6e6e6;">オプション</div><svg style="left:1564px;top:108px;" width="8" height="6" viewBox="0 0 8 6"><path d="M1 1 L4 4 L7 1" fill="none" stroke="#d0d0d0" stroke-width="1.3" stroke-linecap="round" stroke-linejoin="round"/></svg><div class="r" style="left:11px;top:137px;width:48px;height:84px;background:#282828;border-radius:5px;"></div><div class="r" style="left:11px;top:229px;width:48px;height:170px;background:#282828;border-radius:5px;"></div><div class="r" style="left:11px;top:407px;width:48px;height:84px;background:#282828;border-radius:5px;"></div><div class="r" style="left:11px;top:499px;width:48px;height:41px;background:#282828;border-radius:5px;"></div><div class="r" style="left:11px;top:548px;width:48px;height:428px;background:#282828;border-radius:5px;"></div><div class="r" style="left:11px;top:137px;width:48px;height:41px;background:#4772b3;border-radius:5px 5px 0 0;"></div><div class="r" style="left:11px;top:178px;width:48px;height:1px;background:#3a3a3a;border-radius:0px;"></div><div class="r" style="left:11px;top:271px;width:48px;height:1px;background:#3a3a3a;border-radius:0px;"></div><div class="r" style="left:11px;top:313px;width:48px;height:1px;background:#3a3a3a;border-radius:0px;"></div><div class="r" style="left:11px;top:356px;width:48px;height:1px;background:#3a3a3a;border-radius:0px;"></div><div class="r" style="left:11px;top:448px;width:48px;height:1px;background:#3a3a3a;border-radius:0px;"></div><div class="r" style="left:11px;top:590px;width:48px;height:1px;background:#3a3a3a;border-radius:0px;"></div><div class="r" style="left:11px;top:633px;width:48px;height:1px;background:#3a3a3a;border-radius:0px;"></div><div class="r" style="left:11px;top:676px;width:48px;height:1px;background:#3a3a3a;border-radius:0px;"></div><div class="r" style="left:11px;top:718px;width:48px;height:1px;background:#3a3a3a;border-radius:0px;"></div><div class="r" style="left:11px;top:761px;width:48px;height:1px;background:#3a3a3a;border-radius:0px;"></div><div class="r" style="left:11px;top:804px;width:48px;height:1px;background:#3a3a3a;border-radius:0px;"></div><div class="r" style="left:11px;top:847px;width:48px;height:1px;background:#3a3a3a;border-radius:0px;"></div><div class="r" style="left:11px;top:890px;width:48px;height:1px;background:#3a3a3a;border-radius:0px;"></div><div class="r" style="left:11px;top:933px;width:48px;height:1px;background:#3a3a3a;border-radius:0px;"></div><svg style="left:0px;top:0px;" width="70" height="1000" viewBox="0 0 70 1000"><path d="M56 168 L56 174 L50 174 Z" fill="#8a8a8a"/><path d="M56 346 L56 352 L50 352 Z" fill="#8a8a8a"/><path d="M56 438 L56 444 L50 444 Z" fill="#8a8a8a"/><path d="M56 530 L56 536 L50 536 Z" fill="#8a8a8a"/><path d="M56 580 L56 586 L50 586 Z" fill="#8a8a8a"/><path d="M56 708 L56 714 L50 714 Z" fill="#8a8a8a"/><path d="M56 751 L56 757 L50 757 Z" fill="#8a8a8a"/><path d="M56 837 L56 843 L50 843 Z" fill="#8a8a8a"/><path d="M56 880 L56 886 L50 886 Z" fill="#8a8a8a"/><path d="M56 923 L56 929 L50 929 Z" fill="#8a8a8a"/><path d="M56 966 L56 972 L50 972 Z" fill="#8a8a8a"/><rect x="22" y="144" width="26" height="26" rx="1.5" fill="none" stroke="#f2aa2e" stroke-width="2" stroke-dasharray="4.2 2.8" stroke-dashoffset="2"/><path d="M31 149.8 L41 159.2 L31 163.8 Z" fill="#e6e6e6"/><circle cx="35" cy="199.4" r="14.2" fill="none" stroke="#f2f2f2" stroke-width="2"/><circle cx="35" cy="199.4" r="14.2" fill="none" stroke="#a83a3a" stroke-width="2" stroke-dasharray="5.58 5.58" stroke-dashoffset="2.8"/><path d="M35 190.5 L35 196 M35 203 L35 208.5 M26 199.4 L31.5 199.4 M38.5 199.4 L44 199.4" stroke="#9a9a9a" stroke-width="2"/><path d="M34.7 234 L30.8 239.7 L38.6 239.7 Z M34.7 263.5 L30.8 257.8 L38.6 257.8 Z M20.5 249.5 L26.2 245.6 L26.2 253.4 Z M49.7 249.5 L44 245.6 L44 253.4 Z" fill="#e6e6e6"/><path d="M34.7 241 L34.7 245 M34.7 253.5 L34.7 257.5 M27 249.5 L31 249.5 M38.5 249.5 L42.5 249.5" stroke="#e6e6e6" stroke-width="1.8"/><path d="M24.8 286 A11 11 0 0 1 44 283.5 M44.6 297.5 A11 11 0 0 1 25.5 300" fill="none" stroke="#e6e6e6" stroke-width="1.6"/><path d="M20.5 291 L28.5 291 L24.5 298.5 Z M40.5 292.5 L48.5 292.5 L44.5 285 Z" fill="#e6e6e6"/><path d="M34.7 287 L39.4 291.7 L34.7 296.4 L30 291.7 Z" fill="#a8a8a8"/><path d="M25 334 L25 325 L45.5 325 L45.5 345 L37.5 345" fill="none" stroke="#dadada" stroke-width="1.6"/><rect x="23.8" y="334.5" width="11.8" height="11.3" fill="#e6e6e6"/><path d="M36.5 333.5 L42.5 327.5 M38.5 327 L43 327 L43 331.5" fill="none" stroke="#e6e6e6" stroke-width="1.7"/><path d="M24.2 371 A12.8 12.8 0 0 1 28 367.5 M41.5 367.5 A12.8 12.8 0 0 1 45.2 371 M45.2 384 A12.8 12.8 0 0 1 41.5 387.5 M28 387.5 A12.8 12.8 0 0 1 24.2 384" fill="none" stroke="#e6e6e6" stroke-width="1.6"/><path d="M34.7 363.5 L30.5 369 L38.9 369 Z M34.7 391.5 L30.5 386 L38.9 386 Z M20.7 377.5 L26.2 373.3 L26.2 381.7 Z M48.7 377.5 L43.2 373.3 L43.2 381.7 Z" fill="#e6e6e6"/><rect x="29.7" y="372.5" width="10" height="10" fill="#e6e6e6"/><path d="M21 435 L23 429 L37.5 414.5 Q39.5 412.5 41.5 414.5 Q43.5 416.5 41.5 418.5 L27 433 Z" fill="#e6e6e6"/><path d="M24 430.5 L26 432.5" stroke="#282828" stroke-width="1"/><path d="M36 416 L40 420" stroke="#282828" stroke-width="0.8"/><path d="M22 435.8 Q27 439.5 33 434.5 Q38.5 429 43 430 Q47.5 431 51 436" fill="none" stroke="#8fd6b0" stroke-width="1.7"/><path d="M23.2 456.3 L28 456.3 L28 480.3 L49.6 480.3 L49.6 485 L23.2 485 Z" fill="#e6e6e6"/><path d="M28.5 466 A14 14 0 0 1 42.5 480 L28.5 480 Z" fill="#8fd6b0"/><path d="M28.5 463.5 A16.5 16.5 0 0 1 45 480" fill="none" stroke="#8fd6b0" stroke-width="1.3"/><path d="M25.5 459 L28 459 M25.5 461 L28 461 M25.5 463 L28 463 M25.5 465 L28 465 M25.5 467 L28 467 M25.5 469 L28 469 M25.5 471 L28 471 M25.5 473 L28 473 M25.5 475 L28 475 M25.5 477 L28 477 M25.5 479 L28 479 M31 480.3 L31 482.5 M33 480.3 L33 482.5 M35 480.3 L35 482.5 M37 480.3 L37 482.5 M39 480.3 L39 482.5 M41 480.3 L41 482.5 M43 480.3 L43 482.5 M45 480.3 L45 482.5 M47 480.3 L47 482.5 " stroke="#282828" stroke-width="0.7"/><path d="M18.7 507.7 L28.8 507.7 M23.7 502.7 L23.7 512.7" stroke="#8fd6b0" stroke-width="2.2"/><path d="M26.2 515.4 L44.2 515.4 L44.2 533 L26.2 533 Z M26.2 515.4 L31.6 509.6 L49.6 509.6 L49.6 527 L44.2 533 M44.2 515.4 L49.6 509.6" fill="none" stroke="#8fd6b0" stroke-width="1.4" stroke-linejoin="round"/><path d="M22.3 559 L28.3 552.3 L47.7 552.3 L47.7 561.2 L41.7 565.6 L22.3 565.6 Z" fill="#8fd6b0"/><path d="M41.7 559 L47.7 552.3" stroke="#282828" stroke-width="0.6"/><path d="M22.3 565.6 L22.3 580 L41.7 580 L47.7 573.5 L47.7 561.2 M41.7 565.6 L41.7 580" fill="none" stroke="#dcdcdc" stroke-width="1.5"/><path d="M22.6 605 L41.2 605 L41.2 623.6 L22.6 623.6 Z" fill="#8fd6b0"/><rect x="29" y="610.8" width="6.5" height="6.5" fill="#282828"/><path d="M22.6 605 L29 610.8 M41.2 605 L35.5 610.8 M41.2 623.6 L35.5 617.3 M22.6 623.6 L29 617.3" stroke="#282828" stroke-width="1"/><path d="M22.6 605 L41.2 605 L41.2 623.6 L22.6 623.6 Z M22.6 605 L28.6 598.5 L47.2 598.5 L47.2 617 L41.2 623.6 M41.2 605 L47.2 598.5" fill="none" stroke="#dcdcdc" stroke-width="1.5" stroke-linejoin="round"/><path d="M22.6 653.5 L26.6 643.5 L38 643.5 L41.2 653.5 Z" fill="#8fd6b0"/><path d="M38 643.5 L43 642.5 L47.2 650 L41.2 653.5 Z" fill="#8fd6b0"/><path d="M22.6 653.5 L22.6 666 L41.2 666 L47.2 660 L47.2 650 M41.2 653.5 L41.2 666 M22.6 653.5 L41.2 653.5 M26.6 643.5 L29.5 640 L43 640 L47.2 650 M38 643.5 L43 640" fill="none" stroke="#dcdcdc" stroke-width="1.4" stroke-linejoin="round"/><path d="M27 690 L22.6 690 L22.6 708.7 L27 708.7 M30 690 L28.6 690 M35 690 L41.2 690 L41.2 708.7 L35 708.7 M22.6 690 L28.6 684 L30 684 M35 684 L47.2 684 L47.2 702.5 L41.2 708.7 M41.2 690 L47.2 684" fill="none" stroke="#dcdcdc" stroke-width="1.4" stroke-linejoin="round"/><path d="M32.3 708.7 L32.3 690.5 L38 684.2" fill="none" stroke="#8fd6b0" stroke-width="1.5"/><path d="M26.5 690 L26.5 708.7" stroke="#dcdcdc" stroke-width="1.2"/><path d="M22.6 733.6 L41.2 733.6 L41.2 752.3 L22.6 752.3 Z M22.6 733.6 L29 727.2 L47.7 727.2 L47.7 746 L41.2 752.3 M41.2 733.6 L47.7 727.2" fill="none" stroke="#c8c8c8" stroke-width="1.4" stroke-linejoin="round"/><path d="M37.2 727.2 L28.3 733.6 L36.4 752.3" fill="none" stroke="#8fd6b0" stroke-width="1.5"/><circle cx="37.2" cy="727.2" r="2.4" fill="#8fd6b0"/><circle cx="28.3" cy="733.6" r="2.4" fill="#8fd6b0"/><circle cx="36.4" cy="752.3" r="2.4" fill="#8fd6b0"/><path d="M32.3 770.1 L46.1 775 L46.4 794.1 L24.2 794.1 L24.2 781.5 Z" fill="#8fd6b0"/><circle cx="32.3" cy="770.1" r="2.4" fill="#f0f0f0" stroke="#282828" stroke-width="0.6"/><circle cx="46.1" cy="775" r="2.4" fill="#f0f0f0" stroke="#282828" stroke-width="0.6"/><circle cx="46.4" cy="794.1" r="2.4" fill="#f0f0f0" stroke="#282828" stroke-width="0.6"/><circle cx="24.2" cy="794.1" r="2.4" fill="#f0f0f0" stroke="#282828" stroke-width="0.6"/><circle cx="24.2" cy="781.5" r="2.4" fill="#f0f0f0" stroke="#282828" stroke-width="0.6"/><path d="M33.9 826.8 L33.9 813.2 A13.6 13.6 0 1 0 47 823 Z" fill="#8fd6b0"/><path d="M33.9 826.8 L33.9 840.4 M33.9 826.8 L20.3 826.8 M33.9 826.8 L24.3 817.2 M33.9 826.8 L24.3 836.4 M33.9 826.8 L43.5 836.4 M33.9 826.8 L47.5 826.8" stroke="#282828" stroke-width="1"/><path d="M25 815.5 A14 14 0 0 1 33.9 811.5 L33.9 825.5" fill="none" stroke="#dcdcdc" stroke-width="1.4"/><path d="M44 817 A12 12 0 0 1 45.5 834" fill="none" stroke="#dcdcdc" stroke-width="1.4"/><path d="M24 859 Q34 852 45 858 Q48 867 45.5 876 Q35 882 24.5 876 Q21 867 24 859 Z" fill="#d5c0ea"/><path d="M22.5 867.5 Q35 865 47 868 M34 854 Q32.5 867 35 881" fill="none" stroke="#282828" stroke-width="1.1"/><path d="M24 861 Q35 857 45 861" fill="none" stroke="#282828" stroke-width="0.7"/><path d="M19.3 896.3 L23.5 892.5 L23.5 900 Z" fill="#d5c0ea"/><path d="M22 896.3 L28 896.3" stroke="#d5c0ea" stroke-width="2"/><path d="M29.2 905 L41.8 905 L41.8 923.8 L29.2 923.8 Z M29.2 905 L34.9 899.4 L47.8 899.4 L47.8 917 L41.8 923.8 M41.8 905 L47.8 899.4" fill="none" stroke="#d0d0d0" stroke-width="1.5" stroke-linejoin="round"/><path d="M23 923.8 L23 905 L29 899.4 L33 899.4 M23 923.8 L26 923.8" fill="none" stroke="#d0d0d0" stroke-width="1.4"/><path d="M26.8 923.8 L26.8 905 L32 900" fill="none" stroke="#d5c0ea" stroke-width="1.4"/><path d="M34.9 940 L31 945.5 L38.8 945.5 Z M34.9 968.8 L31 963.3 L38.8 963.3 Z M21.1 955 L26.6 951.1 L26.6 958.9 Z M50.5 955 L45 951.1 L45 958.9 Z" fill="#d5c0ea"/><rect x="28" y="947.5" width="14.4" height="14.4" fill="none" stroke="#e0e0e0" stroke-width="1.3"/><path d="M30 947.5 L31.5 946 L44 946 L44 960 L42.4 961.9" fill="none" stroke="#e0e0e0" stroke-width="1"/><path d="M35.2 949.5 L32.5 953 L38 953 Z M35.2 960 L32.5 956.5 L38 956.5 Z M30 954.7 L33.5 952 L33.5 957.5 Z M40.4 954.7 L37 952 L37 957.5 Z" fill="#d5c0ea"/></svg><div class="t" style="left:81px;top:136px;color:#f0f0f0;text-shadow:0 0 1.5px #111,1px 1px 1px #000;-webkit-text-stroke:0.35px #f0f0f0">ユーザー・透視投影</div><div class="t" style="left:81px;top:158px;color:#f0f0f0;text-shadow:0 0 1.5px #111,1px 1px 1px #000;-webkit-text-stroke:0.35px #f0f0f0"><span class="l">(1) Cube</span></div><div class="r" style="left:1572px;top:143px;width:13px;height:20px;background:#353535;border-radius:4px 0 0 4px;"></div><svg style="left:1576px;top:148px;" width="6" height="10" viewBox="0 0 6 10"><path d="M5 1 L1 5 L5 9" fill="none" stroke="#9a9a9a" stroke-width="1.3" stroke-linecap="round" stroke-linejoin="round"/></svg><svg style="left:1480px;top:135px;" width="90" height="100" viewBox="0 0 90 100">
    <circle cx="16" cy="40" r="9" fill="#5a3a3f" fill-opacity="0.8" stroke="#c0394f" stroke-width="1.4"/>
    <circle cx="13.3" cy="65" r="9.8" fill="#4f5f35" stroke="#8ccf21" stroke-width="1.6"/>
    <circle cx="43.5" cy="88.5" r="9" fill="#3d4c60" stroke="#3b7fd1" stroke-width="1.4"/>
    <path d="M42.5 52.5 L42.5 22" stroke="#3a8ae6" stroke-width="2.2"/>
    <path d="M42.5 52.5 L66 41" stroke="#6fae1e" stroke-width="2.2"/>
    <path d="M42.5 52.5 L64 63" stroke="#ec3750" stroke-width="2.2"/>
    <circle cx="42.5" cy="17" r="10.3" fill="#3a8ae6"/>
    <circle cx="72.5" cy="40.4" r="9.6" fill="#6d9d1e"/>
    <circle cx="70" cy="65.7" r="10.5" fill="#ed3552"/>
    <text x="42.5" y="22.5" text-anchor="middle" font-family="Liberation Sans" font-weight="bold" font-size="14" fill="#0f2c4c">Z</text>
    <text x="72.5" y="45.8" text-anchor="middle" font-family="Liberation Sans" font-weight="bold" font-size="14" fill="#1e2a0c">Y</text>
    <text x="70" y="71" text-anchor="middle" font-family="Liberation Sans" font-weight="bold" font-size="14" fill="#4c0e18">X</text>
    </svg><div class="r" style="left:1540px;top:240px;width:34px;height:34px;border-radius:17px;background:rgba(40,40,40,0.45)"></div><div class="r" style="left:1540px;top:277px;width:34px;height:34px;border-radius:17px;background:rgba(40,40,40,0.45)"></div><div class="r" style="left:1540px;top:315px;width:34px;height:34px;border-radius:17px;background:rgba(40,40,40,0.45)"></div><div class="r" style="left:1540px;top:353px;width:34px;height:34px;border-radius:17px;background:rgba(40,40,40,0.45)"></div><svg style="left:1545px;top:245px;" width="24" height="24" viewBox="0 0 24 24"><circle cx="13.5" cy="10" r="7" fill="none" stroke="#e6e6e6" stroke-width="2"/><path d="M8.5 15 L3 20.5" stroke="#e6e6e6" stroke-width="2.6" stroke-linecap="round"/><path d="M13.5 6.5 L13.5 13.5 M10 10 L17 10" stroke="#e6e6e6" stroke-width="1.6"/></svg><svg style="left:1545px;top:282px;" width="24" height="24" viewBox="0 0 24 24"><path d="M7 21 Q4 17 3 12 Q3 10.5 4.5 10.5 Q6 11 7 14 L7 5 Q7 3.5 8.5 3.5 Q10 3.5 10 5 L10 11 L10 3 Q10 1.5 11.5 1.5 Q13 1.5 13 3 L13 11 L13 4 Q13 2.5 14.5 2.5 Q16 2.5 16 4 L16 11 L16 6 Q16 4.5 17.5 4.5 Q19 4.5 19 6 L19 15 Q19 21 15 22 Z" fill="#e6e6e6"/></svg><svg style="left:1545px;top:320px;" width="24" height="24" viewBox="0 0 24 24"><circle cx="8" cy="6.5" r="4" fill="#e6e6e6"/><circle cx="15.5" cy="6" r="3.3" fill="#e6e6e6"/><rect x="4" y="10.5" width="13" height="9" rx="1.5" fill="#e6e6e6"/><path d="M17 15 L22 11.5 L22 19 Z" fill="#e6e6e6"/><circle cx="8" cy="6.5" r="1.3" fill="#353535"/><circle cx="15.5" cy="6" r="1.1" fill="#353535"/></svg><svg style="left:1545px;top:358px;" width="24" height="24" viewBox="0 0 24 24"><path d="M6 3.5 L18 3.5 L21 20.5 L3 20.5 Z" fill="none" stroke="#e6e6e6" stroke-width="1.8"/><path d="M5 9 L19 9 M4 14.5 L20 14.5 M10 3.5 L9 20.5 M14 3.5 L15 20.5" stroke="#e6e6e6" stroke-width="1.6"/></svg><div class="r" style="left:1588px;top:62px;width:332px;height:318px;background:#282828;border-radius:7px 0 0 7px;"></div><div class="r" style="left:1588px;top:120px;width:332px;height:25px;background:#2b2b2b;border-radius:0px;"></div><div class="r" style="left:1588px;top:170px;width:332px;height:25px;background:#2b2b2b;border-radius:0px;"></div><div class="r" style="left:1588px;top:220px;width:332px;height:25px;background:#2b2b2b;border-radius:0px;"></div><div class="r" style="left:1588px;top:270px;width:332px;height:25px;background:#2b2b2b;border-radius:0px;"></div><div class="r" style="left:1588px;top:320px;width:332px;height:25px;background:#2b2b2b;border-radius:0px;"></div><div class="r" style="left:1588px;top:170px;width:332px;height:25px;background:#334d80;border-radius:0px;"></div><div class="r" style="left:1598px;top:66px;width:40px;height:25px;background:#282828;border-radius:5px;border:1px solid #3a3a3a"></div><svg style="left:1603px;top:69px;" width="22" height="20" viewBox="0 0 22 20"><rect x="1.5" y="1.5" width="6" height="3" fill="#e6e6e6"/><path d="M4 5 L4 16 L8 16 M4 10 L8 10" stroke="#cfcfcf" stroke-width="1" fill="none"/><rect x="8.5" y="8.5" width="8" height="3" fill="#e6e6e6"/><rect x="8.5" y="14.5" width="8" height="3" fill="#e6e6e6"/></svg><svg style="left:1626px;top:77px;" width="8" height="6" viewBox="0 0 8 6"><path d="M1 1 L4 4 L7 1" fill="none" stroke="#d0d0d0" stroke-width="1.3" stroke-linecap="round" stroke-linejoin="round"/></svg><div class="r" style="left:1644px;top:66px;width:40px;height:25px;background:#282828;border-radius:5px;border:1px solid #3a3a3a"></div><svg style="left:1649px;top:69px;" width="22" height="20" viewBox="0 0 22 20"><path d="M6 2.5 L17 2.5 L17 12.5 L6 12.5 Z" fill="none" stroke="#e0e0e0" stroke-width="1.2"/><path d="M4 5 L4 14.5 L15 14.5 M2 7 L2 16.5 L13 16.5" stroke="#cfcfcf" stroke-width="1" fill="none"/><path d="M7 12 L10.5 6 L13 10 L14 9 L16.5 12 Z" fill="#e6e6e6"/><circle cx="14.5" cy="5" r="1.1" fill="#e6e6e6"/></svg><svg style="left:1672px;top:77px;" width="8" height="6" viewBox="0 0 8 6"><path d="M1 1 L4 4 L7 1" fill="none" stroke="#d0d0d0" stroke-width="1.3" stroke-linecap="round" stroke-linejoin="round"/></svg><div class="r" style="left:1703px;top:66px;width:144px;height:25px;background:#1d1d1d;border-radius:5px;border:1px solid #2e2e2e"></div><svg style="left:1708px;top:69px;" width="18" height="20" viewBox="0 0 18 20"><circle cx="11" cy="7.5" r="5.5" fill="none" stroke="#e6e6e6" stroke-width="1.3"/><path d="M7 11.5 L1.5 17" stroke="#e6e6e6" stroke-width="1.5"/></svg><div class="r" style="left:1866px;top:66px;width:40px;height:25px;background:#282828;border-radius:5px;border:1px solid #3a3a3a"></div><svg style="left:1869px;top:69px;" width="22" height="20" viewBox="0 0 22 20"><path d="M1.5 2.5 L18 2.5 L12 9 L12 14 L8.5 17.5 L8.5 9 Z" fill="none" stroke="#e6e6e6" stroke-width="1.2" stroke-linejoin="round"/></svg><svg style="left:1896px;top:77px;" width="8" height="6" viewBox="0 0 8 6"><path d="M1 1 L4 4 L7 1" fill="none" stroke="#d0d0d0" stroke-width="1.3" stroke-linecap="round" stroke-linejoin="round"/></svg><div class="r" style="left:1912px;top:66px;width:10px;height:25px;background:#4a4a4a;border-radius:5px 0 0 5px;"></div><div class="r" style="left:1914.5px;top:70px;width:3px;height:1px;background:#cfcfcf;border-radius:0px;"></div><div class="r" style="left:1914.5px;top:70px;width:1px;height:14px;background:#cfcfcf;border-radius:0px;"></div><svg style="left:1617px;top:100px;" width="17" height="16" viewBox="0 0 17 16"><rect x="0" y="0" width="17" height="4" fill="#dcdcdc"/><rect x="1" y="5" width="15" height="11" fill="#dcdcdc"/><rect x="6" y="7" width="5" height="2" rx="1" fill="#282828"/></svg><div class="t" style="left:1642px;top:99px;color:#e6e6e6;">シーンコレクション</div><svg style="left:1621px;top:130px;" width="8" height="7" viewBox="0 0 8 7"><path d="M0 0 L8 0 L4 7 Z" fill="#d8d8d8"/></svg><div class="r" style="left:1638.5px;top:121px;width:24px;height:22px;background:#555555;border-radius:6px;border:1px solid #6a6a6a"></div><svg style="left:1642px;top:124px;" width="17" height="16" viewBox="0 0 17 16"><rect x="0.5" y="0.5" width="16" height="4" fill="#e6e6e6"/><rect x="1.5" y="5.5" width="14" height="10" fill="#e6e6e6"/><rect x="6" y="7.5" width="5" height="2" rx="1" fill="#555"/></svg><div class="t" style="left:1668px;top:124px;color:#e6e6e6;"><span class="l">Collection</span></div><div class="r" style="left:1839px;top:126px;width:13px;height:13px;background:#e6e6e6;border-radius:2px;"></div><svg style="left:1840px;top:127px;" width="11" height="11" viewBox="0 0 11 11"><path d="M2 5.5 L4.5 8 L9 3" fill="none" stroke="#282828" stroke-width="1.8"/></svg><svg style="left:1861px;top:126px;" width="18" height="14" viewBox="0 0 18 14"><path d="M1 7 Q9 -1.5 17 7 Q9 15.5 1 7 Z" fill="none" stroke="#e6e6e6" stroke-width="1.7"/><circle cx="9" cy="7" r="2.6" fill="#e6e6e6"/></svg><svg style="left:1886px;top:125px;" width="18" height="16" viewBox="0 0 18 16"><path d="M1.5 4 L5.5 4 L7 1.5 L11 1.5 L12.5 4 L16.5 4 L16.5 14.5 L1.5 14.5 Z" fill="#e6e6e6"/><circle cx="9" cy="9" r="4" fill="#282828"/><circle cx="9" cy="9" r="2.5" fill="#e6e6e6"/></svg><svg style="left:1861px;top:151px;" width="18" height="14" viewBox="0 0 18 14"><path d="M1 7 Q9 -1.5 17 7 Q9 15.5 1 7 Z" fill="none" stroke="#e6e6e6" stroke-width="1.7"/><circle cx="9" cy="7" r="2.6" fill="#e6e6e6"/></svg><svg style="left:1886px;top:150px;" width="18" height="16" viewBox="0 0 18 16"><path d="M1.5 4 L5.5 4 L7 1.5 L11 1.5 L12.5 4 L16.5 4 L16.5 14.5 L1.5 14.5 Z" fill="#e6e6e6"/><circle cx="9" cy="9" r="4" fill="#282828"/><circle cx="9" cy="9" r="2.5" fill="#e6e6e6"/></svg><svg style="left:1861px;top:176px;" width="18" height="14" viewBox="0 0 18 14"><path d="M1 7 Q9 -1.5 17 7 Q9 15.5 1 7 Z" fill="none" stroke="#e6e6e6" stroke-width="1.7"/><circle cx="9" cy="7" r="2.6" fill="#e6e6e6"/></svg><svg style="left:1886px;top:175px;" width="18" height="16" viewBox="0 0 18 16"><path d="M1.5 4 L5.5 4 L7 1.5 L11 1.5 L12.5 4 L16.5 4 L16.5 14.5 L1.5 14.5 Z" fill="#e6e6e6"/><circle cx="9" cy="9" r="4" fill="#282828"/><circle cx="9" cy="9" r="2.5" fill="#e6e6e6"/></svg><svg style="left:1861px;top:201px;" width="18" height="14" viewBox="0 0 18 14"><path d="M1 7 Q9 -1.5 17 7 Q9 15.5 1 7 Z" fill="none" stroke="#e6e6e6" stroke-width="1.7"/><circle cx="9" cy="7" r="2.6" fill="#e6e6e6"/></svg><svg style="left:1886px;top:200px;" width="18" height="16" viewBox="0 0 18 16"><path d="M1.5 4 L5.5 4 L7 1.5 L11 1.5 L12.5 4 L16.5 4 L16.5 14.5 L1.5 14.5 Z" fill="#e6e6e6"/><circle cx="9" cy="9" r="4" fill="#282828"/><circle cx="9" cy="9" r="2.5" fill="#e6e6e6"/></svg><div class="r" style="left:1624px;top:151px;width:1px;height:63px;background:#4f4f4f;border-radius:0px;"></div><svg style="left:1647px;top:153px;" width="8" height="9" viewBox="0 0 8 9"><path d="M0 0 L8 4.5 L0 9 Z" fill="#c8c8c8"/></svg><svg style="left:1647px;top:178px;" width="8" height="9" viewBox="0 0 8 9"><path d="M0 0 L8 4.5 L0 9 Z" fill="#c8c8c8"/></svg><svg style="left:1647px;top:203px;" width="8" height="9" viewBox="0 0 8 9"><path d="M0 0 L8 4.5 L0 9 Z" fill="#c8c8c8"/></svg><svg style="left:1640px;top:145px;" width="60" height="30" viewBox="0 0 60 30"><circle cx="30.5" cy="10" r="4.8" fill="#d5874e"/><circle cx="38.5" cy="8" r="5.4" fill="#d5874e"/><rect x="30" y="9" width="9" height="5" fill="#d5874e"/><circle cx="29.6" cy="9.3" r="1.4" fill="none" stroke="#282828" stroke-width="0.9"/><circle cx="38.7" cy="7.9" r="1.4" fill="none" stroke="#282828" stroke-width="0.9"/><rect x="29.5" y="15" width="11" height="6" rx="0.8" fill="#d5874e"/><path d="M40 17.8 L44.6 13.8 L44.6 21.2 Z" fill="#d5874e"/><rect x="25.8" y="16.5" width="4" height="2.8" fill="#d5874e"/></svg><div class="t" style="left:1692px;top:149px;color:#e6e6e6;"><span class="l">Camera</span></div><div class="r" style="left:1769px;top:146px;width:25px;height:22px;background:#4a4a4a;border-radius:6px;border:1px solid #5a5a5a"></div><svg style="left:1772px;top:149px;" width="20" height="18" viewBox="0 0 20 18"><path d="M3 9 L3 5 Q3 1.5 7 1.5 L13 1.5 Q17 1.5 17 5 Q17 8.5 13 8.5 Z" fill="none" stroke="#29c19a" stroke-width="1.3"/><circle cx="13" cy="4.5" r="1" fill="#29c19a"/><rect x="4" y="10.5" width="9" height="5.5" fill="none" stroke="#29c19a" stroke-width="1.3"/><path d="M13 13 L17.5 10.5 L17.5 16 Z M1 11 L1 15" fill="none" stroke="#29c19a" stroke-width="1.2"/></svg><svg style="left:1592px;top:174px;" width="18" height="17" viewBox="0 0 18 17"><rect x="1" y="2" width="3" height="3" rx="0.5" fill="none" stroke="#bfc9dc" stroke-width="0.9"/><rect x="1" y="13" width="3" height="3" rx="0.5" fill="none" stroke="#bfc9dc" stroke-width="0.9"/><rect x="13" y="13" width="3" height="3" rx="0.5" fill="none" stroke="#bfc9dc" stroke-width="0.9"/><rect x="11" y="0" width="6" height="6" fill="#dfe4ee"/><path d="M2.5 5 L2.5 13 M4 14.5 L13 14.5 M14.5 13 L14.5 6 M4 3.5 L11 3.5" stroke="#bfc9dc" stroke-width="0.9"/></svg><div class="r" style="left:1663.5px;top:171px;width:24px;height:22px;background:#5169a0;border-radius:6px;border:1px solid #6a80b0"></div><svg style="left:1666px;top:174px;" width="19" height="17" viewBox="0 0 19 17"><path d="M2.5 2.5 L16.5 2.5 L9.5 15.5 Z" fill="none" stroke="#d5874e" stroke-width="2.8" stroke-linejoin="round"/></svg><div class="t" style="left:1692px;top:174px;color:#ffb92d;"><span class="l">Cube</span></div><div class="r" style="left:1753px;top:171px;width:25px;height:22px;background:#2f5c80;border-radius:6px;border:1px solid #42729a"></div><svg style="left:1756px;top:173px;" width="19" height="19" viewBox="0 0 19 19"><path d="M3.5 3.5 L15.5 3.5 L9.5 15 Z" fill="none" stroke="#29c19a" stroke-width="1.2"/><rect x="1.5" y="1.5" width="4" height="4" fill="#2f5c80" stroke="#29c19a" stroke-width="1.1"/><rect x="13.5" y="1.5" width="4" height="4" fill="#2f5c80" stroke="#29c19a" stroke-width="1.1"/><rect x="7.5" y="13.5" width="4" height="4" fill="#2f5c80" stroke="#29c19a" stroke-width="1.1"/></svg><svg style="left:1640px;top:195px;" width="60" height="30" viewBox="0 0 60 30"><circle cx="35.4" cy="9.2" r="7.4" fill="#d5874e"/><path d="M31.8 15 L39 15 L38.3 17 L32.5 17 Z" fill="#d5874e"/><rect x="32.2" y="17.8" width="6.4" height="1.4" fill="#d5874e"/><rect x="33" y="20" width="4.8" height="1.6" rx="0.8" fill="#d5874e"/><path d="M32.3 8.2 L38.5 8.2 M33.6 8.2 L33.6 12 M37.2 8.2 L37.2 12" stroke="#282828" stroke-width="1.3"/></svg><div class="t" style="left:1692px;top:199px;color:#e6e6e6;"><span class="l">Light</span></div><svg style="left:1753px;top:198px;" width="18" height="20" viewBox="0 0 18 20"><circle cx="9" cy="8.5" r="7.5" fill="none" stroke="#29c19a" stroke-width="1.3"/><circle cx="9" cy="8.5" r="1.5" fill="#29c19a"/><path d="M9 10 L9 19" stroke="#282828" stroke-width="2"/><path d="M9 11 L9 19" stroke="#29c19a" stroke-width="1.2" stroke-dasharray="2 1.5"/></svg><div class="r" style="left:1588px;top:383px;width:332px;height:670px;background:#2b2b2b;border-radius:7px 0 0 7px;"></div><div class="r" style="left:1598.5px;top:386.5px;width:39px;height:24px;background:#282828;border-radius:5px;border:1px solid #3a3a3a"></div><svg style="left:1603px;top:389px;" width="20" height="19" viewBox="0 0 20 19"><rect x="1" y="1.5" width="17" height="7" rx="3.5" fill="#e6e6e6"/><rect x="9" y="3" width="7.5" height="4" rx="1.5" fill="#282828"/><rect x="1" y="10.5" width="17" height="7" rx="3.5" fill="#e6e6e6"/><rect x="12" y="12" width="4.5" height="4" rx="1.5" fill="#282828"/></svg><svg style="left:1627px;top:397px;" width="8" height="6" viewBox="0 0 8 6"><path d="M1 1 L4 4 L7 1" fill="none" stroke="#d0d0d0" stroke-width="1.3" stroke-linecap="round" stroke-linejoin="round"/></svg><div class="r" style="left:1676.5px;top:386.5px;width:143px;height:24px;background:#1d1d1d;border-radius:5px;border:1px solid #2e2e2e"></div><svg style="left:1681px;top:389px;" width="18" height="20" viewBox="0 0 18 20"><circle cx="10.5" cy="7" r="5.5" fill="none" stroke="#e6e6e6" stroke-width="1.3"/><path d="M6.5 11 L1.5 16.5" stroke="#e6e6e6" stroke-width="1.5"/></svg><div class="r" style="left:1884.5px;top:386.5px;width:24px;height:24px;background:#2b2b2b;border-radius:5px;border:1px solid #3a3a3a"></div><svg style="left:1893px;top:396px;" width="8" height="6" viewBox="0 0 8 6"><path d="M1 1 L4 4 L7 1" fill="none" stroke="#d0d0d0" stroke-width="1.3" stroke-linecap="round" stroke-linejoin="round"/></svg><div class="r" style="left:1588px;top:414px;width:35px;height:639px;background:#1d1d1d;border-radius:0px;"></div><div class="r" style="left:1588px;top:414px;width:35px;height:45px;background:#212121;border-radius:0px;"></div><div class="r" style="left:1590px;top:698px;width:33px;height:31px;background:#2b2b2b;border-radius:5px 0 0 5px;"></div><svg style="left:1596px;top:431px;" width="20" height="20" viewBox="0 0 20 20"><rect x="4" y="1" width="1.6" height="8" fill="#d0d0d0"/><rect x="2.5" y="10" width="4.5" height="8.5" rx="2" fill="#d0d0d0"/><path d="M12 2 L12 5.5 Q14.5 8 17 5.5 L17 2 M14.5 7 L14.5 18" fill="none" stroke="#d0d0d0" stroke-width="2.2" stroke-linecap="round"/></svg><svg style="left:1596px;top:476px;" width="20" height="18" viewBox="0 0 20 18"><rect x="1" y="4" width="18" height="13" rx="1.5" fill="#d0d0d0"/><rect x="5" y="1.5" width="6" height="3" fill="#d0d0d0"/><rect x="3" y="7" width="10" height="8" fill="#1d1d1d"/><path d="M3.5 9 L12.5 9 M3.5 11 L12.5 11 M3.5 13 L12.5 13" stroke="#888" stroke-width="0.8"/><circle cx="16" cy="8.5" r="1" fill="#1d1d1d"/><circle cx="16" cy="12.5" r="1" fill="#1d1d1d"/></svg><svg style="left:1596px;top:510px;" width="20" height="18" viewBox="0 0 20 18"><rect x="1" y="1" width="18" height="5" rx="1" fill="#d0d0d0"/><rect x="3.5" y="5" width="13" height="12" fill="#d0d0d0"/><rect x="5" y="7" width="10" height="9" fill="#1d1d1d"/><path d="M6 15 L10 9 L14 15 Z" fill="#aaa"/></svg><svg style="left:1596px;top:545px;" width="20" height="20" viewBox="0 0 20 20"><path d="M6 1.5 L18 1.5 L18 13 L6 13 Z" fill="none" stroke="#c8c8c8" stroke-width="1.2"/><path d="M4 4 L4 15 L15 15 M1.5 6 L1.5 17.5 L13 17.5" stroke="#c8c8c8" stroke-width="1.1" fill="none"/><path d="M7 12.5 L11 6 L13.5 10 L15 8.5 L17.5 12.5 Z" fill="#c8c8c8"/><circle cx="15.5" cy="4.5" r="1.1" fill="#c8c8c8"/></svg><svg style="left:1596px;top:580px;" width="20" height="19" viewBox="0 0 20 19"><path d="M6 3 L1.5 14 Q4 16 7.5 15 L9.5 6 Z" fill="#c8c8c8"/><circle cx="15" cy="4.5" r="2.6" fill="#c8c8c8"/><circle cx="13" cy="13" r="4.3" fill="#1d1d1d" stroke="#c8c8c8" stroke-width="1.2"/></svg><svg style="left:1596px;top:615px;" width="20" height="20" viewBox="0 0 20 20"><circle cx="10" cy="10" r="7" fill="none" stroke="#c0606a" stroke-width="1.6"/><path d="M5 7 Q7 5.5 9 6.5 Q10 8.5 8 10 Q7 12 9.5 13.5 L8.5 16 Q5 15 4 12 Z M11.5 4 Q14.5 4.5 15.5 7 Q14 9 12.5 8.5 Q11 7 11.5 4 Z M12.5 11 Q15.5 10.5 16 12.5 Q14.5 15.5 12 15.5 Z" fill="#c0606a"/><path d="M1.5 18.5 L18.5 1.5" stroke="#c0606a" stroke-width="1.2"/></svg><div class="r" style="left:1588px;top:638px;width:35px;height:1px;background:#262626;border-radius:0px;"></div><svg style="left:1596px;top:661px;" width="20" height="19" viewBox="0 0 20 19"><rect x="1" y="1" width="17" height="4.5" fill="none" stroke="#d8d8d8" stroke-width="1.2"/><rect x="2" y="5.5" width="15" height="12" fill="none" stroke="#d8d8d8" stroke-width="1.2"/><rect x="7" y="8" width="5" height="2" rx="1" fill="#d8d8d8"/></svg><svg style="left:1596px;top:703px;" width="20" height="20" viewBox="0 0 20 20"><rect x="4.5" y="4.5" width="11" height="11" fill="#e89a4c"/><path d="M1 5 L1 1 L5 1 M15 1 L19 1 L19 5 M19 15 L19 19 L15 19 M5 19 L1 19 L1 15" fill="none" stroke="#e89a4c" stroke-width="1.2"/></svg><svg style="left:1596px;top:738px;" width="20" height="20" viewBox="0 0 20 20"><path d="M3 17 L10 10 A4.5 4.5 0 0 1 14.5 3 L12.5 6 L14 7.5 L17 5.5 A4.5 4.5 0 0 1 10 10" fill="none" stroke="#5d8bd5" stroke-width="3" stroke-linecap="round" stroke-linejoin="round"/></svg><svg style="left:1596px;top:773px;" width="20" height="20" viewBox="0 0 20 20"><circle cx="4" cy="4" r="3.3" fill="#5d8bd5"/><circle cx="17" cy="4" r="2.3" fill="#5d8bd5"/><circle cx="4" cy="17" r="2.3" fill="#5d8bd5"/><circle cx="16" cy="16" r="2.5" fill="#5d8bd5"/><path d="M4 4 L17 4 M4 4 L4 17 M4 4 L16 16" stroke="#5d8bd5" stroke-width="1.3"/></svg><svg style="left:1596px;top:808px;" width="20" height="20" viewBox="0 0 20 20"><circle cx="9" cy="11" r="3.6" fill="#5d8bd5"/><path d="M15.5 12 A7 7 0 1 1 11 4" fill="none" stroke="#5d8bd5" stroke-width="1.3"/><circle cx="16" cy="4.5" r="2.5" fill="#5d8bd5"/></svg><svg style="left:1596px;top:843px;" width="20" height="20" viewBox="0 0 20 20"><path d="M3 12 Q1 5 9 3 L16 1.5 Q19 1 18 4 L15 11 Q12 18 6 16 Q3 15 3 12 Z" fill="none" stroke="#5d8bd5" stroke-width="1.3"/><circle cx="9" cy="10.5" r="3.3" fill="none" stroke="#5d8bd5" stroke-width="1.4"/><circle cx="9" cy="10.5" r="1.4" fill="#5d8bd5"/><circle cx="15" cy="4.5" r="0.9" fill="#5d8bd5"/></svg><svg style="left:1596px;top:877px;" width="20" height="20" viewBox="0 0 20 20"><path d="M3.5 3.5 L16.5 3.5 L10 16 Z" fill="none" stroke="#29c19a" stroke-width="1.3"/><rect x="1.5" y="1.5" width="4" height="4" fill="#1d1d1d" stroke="#29c19a" stroke-width="1.2"/><rect x="14.5" y="1.5" width="4" height="4" fill="#1d1d1d" stroke="#29c19a" stroke-width="1.2"/><rect x="8" y="14.5" width="4" height="4" fill="#1d1d1d" stroke="#29c19a" stroke-width="1.2"/></svg><svg style="left:1596px;top:913px;" width="20" height="20" viewBox="0 0 20 20"><circle cx="10" cy="10" r="8" fill="#c05a63"/><path d="M10 2 L10 10 L18 10" fill="none" stroke="#1d1d1d" stroke-width="1.2"/><path d="M2 10 A8 8 0 0 0 10 18 L10 10 Z" fill="#1d1d1d"/><path d="M10 10 L2 10" stroke="#1d1d1d" stroke-width="0.8"/></svg><div class="r" style="left:1588px;top:941px;width:35px;height:1px;background:#242424;border-radius:0px;"></div><svg style="left:1637px;top:428px;" width="18" height="17" viewBox="0 0 18 17"><rect x="4" y="3.5" width="10" height="10" fill="#e0e0e0"/><path d="M0.8 4 L0.8 0.8 L4 0.8 M14 0.8 L17.2 0.8 L17.2 4 M17.2 13 L17.2 16.2 L14 16.2 M4 16.2 L0.8 16.2 L0.8 13" fill="none" stroke="#e0e0e0" stroke-width="1.1"/></svg><div class="t" style="left:1665px;top:426px;color:#e6e6e6;"><span class="l">Cube</span></div><svg style="left:1889px;top:427px;" width="19" height="19" viewBox="0 0 19 19"><path d="M12 1.5 L17.5 7 L15.8 7.4 L12.5 10.7 L12.6 13.3 L11.4 14.5 L4.5 7.6 L5.7 6.4 L8.3 6.5 L11.6 3.2 Z M7.5 11.5 L1.5 17.5" fill="none" stroke="#b0b0b0" stroke-width="1.1" stroke-linejoin="round"/></svg><div class="r" style="left:1634px;top:470px;width:275px;height:24px;background:#1d1d1d;border-radius:5px;border:1px solid #333"></div><div class="r" style="left:1635px;top:471px;width:38px;height:22px;background:#2b2b2b;border-radius:4px 0 0 4px;"></div><div class="r" style="left:1673px;top:471px;width:1px;height:22px;background:#3a3a3a;border-radius:0px;"></div><svg style="left:1639px;top:473px;" width="18" height="18" viewBox="0 0 18 18"><rect x="4" y="4" width="10" height="10" fill="#e0e0e0"/><path d="M0.8 4 L0.8 0.8 L4 0.8 M14 0.8 L17.2 0.8 L17.2 4 M17.2 14 L17.2 17.2 L14 17.2 M4 17.2 L0.8 17.2 L0.8 14" fill="none" stroke="#e0e0e0" stroke-width="1.1"/></svg><svg style="left:1660px;top:481px;" width="8" height="6" viewBox="0 0 8 6"><path d="M1 1 L4 4 L7 1" fill="none" stroke="#d0d0d0" stroke-width="1.3" stroke-linecap="round" stroke-linejoin="round"/></svg><div class="t" style="left:1681px;top:471px;color:#e6e6e6;"><span class="l">Cube</span></div><div class="r" style="left:1633px;top:506px;width:277px;height:350px;background:#3d3d3d;border-radius:5px;"></div><svg style="left:1643px;top:518px;" width="12" height="7" viewBox="0 0 12 7"><path d="M1 1 L6 6 L11 1" fill="none" stroke="#d0d0d0" stroke-width="1.3"/></svg><div class="t" style="left:1660px;top:512px;color:#e6e6e6;">トランスフォーム</div><svg style="left:1887px;top:518px;" width="15" height="7" viewBox="0 0 15 7"><rect x="0" y="0" width="2.4" height="2.4" fill="#a8a8a8"/><rect x="0" y="4" width="2.4" height="2.4" fill="#a8a8a8"/><rect x="4" y="0" width="2.4" height="2.4" fill="#a8a8a8"/><rect x="4" y="4" width="2.4" height="2.4" fill="#a8a8a8"/><rect x="8" y="0" width="2.4" height="2.4" fill="#a8a8a8"/><rect x="8" y="4" width="2.4" height="2.4" fill="#a8a8a8"/><rect x="12" y="0" width="2.4" height="2.4" fill="#a8a8a8"/><rect x="12" y="4" width="2.4" height="2.4" fill="#a8a8a8"/></svg><div class="r" style="left:1742px;top:548px;width:107px;height:73.60000000000002px;background:#545454;border-radius:4px 0 0 4px;"></div><div class="r" style="left:1742px;top:629px;width:107px;height:73.5px;background:#545454;border-radius:4px 0 0 4px;"></div><div class="r" style="left:1742px;top:740px;width:107px;height:73.5px;background:#545454;border-radius:4px 0 0 4px;"></div><div class="t" style="left:1431px;width:300px;text-align:right;top:550px;color:#e6e6e6;">位置<span class="l"> X</span></div><div class="t" style="left:1645.5px;width:300px;text-align:center;top:550px;color:#e6e6e6;"><span class="l">0 m</span></div><svg style="left:1852px;top:548px;" width="20" height="20" viewBox="0 0 20 20"><path d="M1.6 8 Q1.8 4.4 5.5 4.4 Q9.4 4.4 9.6 8.5 L9.6 10.3" fill="none" stroke="#bdbdbd" stroke-width="1.2"/><rect x="8.4" y="10.6" width="10" height="6.8" fill="none" stroke="#bdbdbd" stroke-width="1.2"/><rect x="12.6" y="12.8" width="1.6" height="2.4" fill="#bdbdbd"/></svg><div class="r" style="left:1885px;top:557px;width:5px;height:5px;background:#e0e0e0;border-radius:3px;"></div><div class="t" style="left:1431px;width:300px;text-align:right;top:574.7px;color:#e6e6e6;"><span class="l">Y</span></div><div class="t" style="left:1645.5px;width:300px;text-align:center;top:574.7px;color:#e6e6e6;"><span class="l">0 m</span></div><svg style="left:1852px;top:572.7px;" width="20" height="20" viewBox="0 0 20 20"><path d="M1.6 8 Q1.8 4.4 5.5 4.4 Q9.4 4.4 9.6 8.5 L9.6 10.3" fill="none" stroke="#bdbdbd" stroke-width="1.2"/><rect x="8.4" y="10.6" width="10" height="6.8" fill="none" stroke="#bdbdbd" stroke-width="1.2"/><rect x="12.6" y="12.8" width="1.6" height="2.4" fill="#bdbdbd"/></svg><div class="r" style="left:1885px;top:581.7px;width:5px;height:5px;background:#e0e0e0;border-radius:3px;"></div><div class="t" style="left:1431px;width:300px;text-align:right;top:599.4px;color:#e6e6e6;"><span class="l">Z</span></div><div class="t" style="left:1645.5px;width:300px;text-align:center;top:599.4px;color:#e6e6e6;"><span class="l">0 m</span></div><svg style="left:1852px;top:597.4px;" width="20" height="20" viewBox="0 0 20 20"><path d="M1.6 8 Q1.8 4.4 5.5 4.4 Q9.4 4.4 9.6 8.5 L9.6 10.3" fill="none" stroke="#bdbdbd" stroke-width="1.2"/><rect x="8.4" y="10.6" width="10" height="6.8" fill="none" stroke="#bdbdbd" stroke-width="1.2"/><rect x="12.6" y="12.8" width="1.6" height="2.4" fill="#bdbdbd"/></svg><div class="r" style="left:1885px;top:606.4px;width:5px;height:5px;background:#e0e0e0;border-radius:3px;"></div><div class="t" style="left:1431px;width:300px;text-align:right;top:631px;color:#e6e6e6;">回転<span class="l"> X</span></div><div class="t" style="left:1645.5px;width:300px;text-align:center;top:631px;color:#e6e6e6;"><span class="l">0</span>°</div><svg style="left:1852px;top:629px;" width="20" height="20" viewBox="0 0 20 20"><path d="M1.6 8 Q1.8 4.4 5.5 4.4 Q9.4 4.4 9.6 8.5 L9.6 10.3" fill="none" stroke="#bdbdbd" stroke-width="1.2"/><rect x="8.4" y="10.6" width="10" height="6.8" fill="none" stroke="#bdbdbd" stroke-width="1.2"/><rect x="12.6" y="12.8" width="1.6" height="2.4" fill="#bdbdbd"/></svg><div class="r" style="left:1885px;top:638px;width:5px;height:5px;background:#e0e0e0;border-radius:3px;"></div><div class="t" style="left:1431px;width:300px;text-align:right;top:655.7px;color:#e6e6e6;"><span class="l">Y</span></div><div class="t" style="left:1645.5px;width:300px;text-align:center;top:655.7px;color:#e6e6e6;"><span class="l">0</span>°</div><svg style="left:1852px;top:653.7px;" width="20" height="20" viewBox="0 0 20 20"><path d="M1.6 8 Q1.8 4.4 5.5 4.4 Q9.4 4.4 9.6 8.5 L9.6 10.3" fill="none" stroke="#bdbdbd" stroke-width="1.2"/><rect x="8.4" y="10.6" width="10" height="6.8" fill="none" stroke="#bdbdbd" stroke-width="1.2"/><rect x="12.6" y="12.8" width="1.6" height="2.4" fill="#bdbdbd"/></svg><div class="r" style="left:1885px;top:662.7px;width:5px;height:5px;background:#e0e0e0;border-radius:3px;"></div><div class="t" style="left:1431px;width:300px;text-align:right;top:680.4px;color:#e6e6e6;"><span class="l">Z</span></div><div class="t" style="left:1645.5px;width:300px;text-align:center;top:680.4px;color:#e6e6e6;"><span class="l">0</span>°</div><svg style="left:1852px;top:678.4px;" width="20" height="20" viewBox="0 0 20 20"><path d="M1.6 8 Q1.8 4.4 5.5 4.4 Q9.4 4.4 9.6 8.5 L9.6 10.3" fill="none" stroke="#bdbdbd" stroke-width="1.2"/><rect x="8.4" y="10.6" width="10" height="6.8" fill="none" stroke="#bdbdbd" stroke-width="1.2"/><rect x="12.6" y="12.8" width="1.6" height="2.4" fill="#bdbdbd"/></svg><div class="r" style="left:1885px;top:687.4px;width:5px;height:5px;background:#e0e0e0;border-radius:3px;"></div><div class="t" style="left:1431px;width:300px;text-align:right;top:742px;color:#e6e6e6;">スケール<span class="l"> X</span></div><div class="t" style="left:1645.5px;width:300px;text-align:center;top:742px;color:#e6e6e6;"><span class="l">1.000</span></div><svg style="left:1852px;top:740px;" width="20" height="20" viewBox="0 0 20 20"><path d="M1.6 8 Q1.8 4.4 5.5 4.4 Q9.4 4.4 9.6 8.5 L9.6 10.3" fill="none" stroke="#bdbdbd" stroke-width="1.2"/><rect x="8.4" y="10.6" width="10" height="6.8" fill="none" stroke="#bdbdbd" stroke-width="1.2"/><rect x="12.6" y="12.8" width="1.6" height="2.4" fill="#bdbdbd"/></svg><div class="r" style="left:1885px;top:749px;width:5px;height:5px;background:#e0e0e0;border-radius:3px;"></div><div class="t" style="left:1431px;width:300px;text-align:right;top:766.7px;color:#e6e6e6;"><span class="l">Y</span></div><div class="t" style="left:1645.5px;width:300px;text-align:center;top:766.7px;color:#e6e6e6;"><span class="l">1.000</span></div><svg style="left:1852px;top:764.7px;" width="20" height="20" viewBox="0 0 20 20"><path d="M1.6 8 Q1.8 4.4 5.5 4.4 Q9.4 4.4 9.6 8.5 L9.6 10.3" fill="none" stroke="#bdbdbd" stroke-width="1.2"/><rect x="8.4" y="10.6" width="10" height="6.8" fill="none" stroke="#bdbdbd" stroke-width="1.2"/><rect x="12.6" y="12.8" width="1.6" height="2.4" fill="#bdbdbd"/></svg><div class="r" style="left:1885px;top:773.7px;width:5px;height:5px;background:#e0e0e0;border-radius:3px;"></div><div class="t" style="left:1431px;width:300px;text-align:right;top:791.4px;color:#e6e6e6;"><span class="l">Z</span></div><div class="t" style="left:1645.5px;width:300px;text-align:center;top:791.4px;color:#e6e6e6;"><span class="l">1.000</span></div><svg style="left:1852px;top:789.4px;" width="20" height="20" viewBox="0 0 20 20"><path d="M1.6 8 Q1.8 4.4 5.5 4.4 Q9.4 4.4 9.6 8.5 L9.6 10.3" fill="none" stroke="#bdbdbd" stroke-width="1.2"/><rect x="8.4" y="10.6" width="10" height="6.8" fill="none" stroke="#bdbdbd" stroke-width="1.2"/><rect x="12.6" y="12.8" width="1.6" height="2.4" fill="#bdbdbd"/></svg><div class="r" style="left:1885px;top:798.4px;width:5px;height:5px;background:#e0e0e0;border-radius:3px;"></div><div class="r" style="left:1742px;top:572.2px;width:107px;height:1px;background:#484848;border-radius:0px;"></div><div class="r" style="left:1742px;top:596.9px;width:107px;height:1px;background:#484848;border-radius:0px;"></div><div class="r" style="left:1742px;top:653.2px;width:107px;height:1px;background:#484848;border-radius:0px;"></div><div class="r" style="left:1742px;top:677.9px;width:107px;height:1px;background:#484848;border-radius:0px;"></div><div class="r" style="left:1742px;top:764.2px;width:107px;height:1px;background:#484848;border-radius:0px;"></div><div class="r" style="left:1742px;top:788.9px;width:107px;height:1px;background:#484848;border-radius:0px;"></div><div class="t" style="left:1431px;width:300px;text-align:right;top:711px;color:#e6e6e6;">モード</div><div class="r" style="left:1742px;top:709px;width:107px;height:24px;background:#282828;border-radius:4px;"></div><div class="t" style="left:1750px;top:711px;color:#e6e6e6;"><span class="l">XYZ </span>オイ<span class="l">...</span></div><svg style="left:1837px;top:719px;" width="8" height="6" viewBox="0 0 8 6"><path d="M1 1 L4 4 L7 1" fill="none" stroke="#d0d0d0" stroke-width="1.3" stroke-linecap="round" stroke-linejoin="round"/></svg><div class="r" style="left:1885px;top:718px;width:5px;height:5px;background:#e0e0e0;border-radius:3px;"></div><svg style="left:1663px;top:835px;" width="7" height="11" viewBox="0 0 7 11"><path d="M1 1 L6 5.5 L1 10" fill="none" stroke="#d0d0d0" stroke-width="1.3"/></svg><div class="t" style="left:1677px;top:830px;color:#e6e6e6;">デルタトランスフォーム</div><div class="r" style="left:1633px;top:858.5px;width:277px;height:30.5px;background:#3d3d3d;border-radius:5px;"></div><svg style="left:1645px;top:868.0px;" width="7" height="11" viewBox="0 0 7 11"><path d="M1 1 L6 5.5 L1 10" fill="none" stroke="#d0d0d0" stroke-width="1.3"/></svg><div class="t" style="left:1660px;top:864.0px;color:#e6e6e6;">関係</div><svg style="left:1887px;top:870.5px;" width="15" height="7" viewBox="0 0 15 7"><rect x="0" y="0" width="2.4" height="2.4" fill="#a8a8a8"/><rect x="0" y="4" width="2.4" height="2.4" fill="#a8a8a8"/><rect x="4" y="0" width="2.4" height="2.4" fill="#a8a8a8"/><rect x="4" y="4" width="2.4" height="2.4" fill="#a8a8a8"/><rect x="8" y="0" width="2.4" height="2.4" fill="#a8a8a8"/><rect x="8" y="4" width="2.4" height="2.4" fill="#a8a8a8"/><rect x="12" y="0" width="2.4" height="2.4" fill="#a8a8a8"/><rect x="12" y="4" width="2.4" height="2.4" fill="#a8a8a8"/></svg><div class="r" style="left:1633px;top:891.5px;width:277px;height:30.5px;background:#3d3d3d;border-radius:5px;"></div><svg style="left:1645px;top:901.0px;" width="7" height="11" viewBox="0 0 7 11"><path d="M1 1 L6 5.5 L1 10" fill="none" stroke="#d0d0d0" stroke-width="1.3"/></svg><div class="t" style="left:1660px;top:897.0px;color:#e6e6e6;">コレクション</div><svg style="left:1887px;top:903.5px;" width="15" height="7" viewBox="0 0 15 7"><rect x="0" y="0" width="2.4" height="2.4" fill="#a8a8a8"/><rect x="0" y="4" width="2.4" height="2.4" fill="#a8a8a8"/><rect x="4" y="0" width="2.4" height="2.4" fill="#a8a8a8"/><rect x="4" y="4" width="2.4" height="2.4" fill="#a8a8a8"/><rect x="8" y="0" width="2.4" height="2.4" fill="#a8a8a8"/><rect x="8" y="4" width="2.4" height="2.4" fill="#a8a8a8"/><rect x="12" y="0" width="2.4" height="2.4" fill="#a8a8a8"/><rect x="12" y="4" width="2.4" height="2.4" fill="#a8a8a8"/></svg><div class="r" style="left:1633px;top:924.5px;width:277px;height:30.5px;background:#3d3d3d;border-radius:5px;"></div><svg style="left:1645px;top:934.0px;" width="7" height="11" viewBox="0 0 7 11"><path d="M1 1 L6 5.5 L1 10" fill="none" stroke="#d0d0d0" stroke-width="1.3"/></svg><div class="t" style="left:1660px;top:930.0px;color:#e6e6e6;">インスタンス化</div><svg style="left:1887px;top:936.5px;" width="15" height="7" viewBox="0 0 15 7"><rect x="0" y="0" width="2.4" height="2.4" fill="#a8a8a8"/><rect x="0" y="4" width="2.4" height="2.4" fill="#a8a8a8"/><rect x="4" y="0" width="2.4" height="2.4" fill="#a8a8a8"/><rect x="4" y="4" width="2.4" height="2.4" fill="#a8a8a8"/><rect x="8" y="0" width="2.4" height="2.4" fill="#a8a8a8"/><rect x="8" y="4" width="2.4" height="2.4" fill="#a8a8a8"/><rect x="12" y="0" width="2.4" height="2.4" fill="#a8a8a8"/><rect x="12" y="4" width="2.4" height="2.4" fill="#a8a8a8"/></svg><div class="r" style="left:1633px;top:957.5px;width:277px;height:30.5px;background:#3d3d3d;border-radius:5px;"></div><svg style="left:1645px;top:967.0px;" width="7" height="11" viewBox="0 0 7 11"><path d="M1 1 L6 5.5 L1 10" fill="none" stroke="#d0d0d0" stroke-width="1.3"/></svg><div class="t" style="left:1660px;top:963.0px;color:#e6e6e6;">モーションパス</div><svg style="left:1887px;top:969.5px;" width="15" height="7" viewBox="0 0 15 7"><rect x="0" y="0" width="2.4" height="2.4" fill="#a8a8a8"/><rect x="0" y="4" width="2.4" height="2.4" fill="#a8a8a8"/><rect x="4" y="0" width="2.4" height="2.4" fill="#a8a8a8"/><rect x="4" y="4" width="2.4" height="2.4" fill="#a8a8a8"/><rect x="8" y="0" width="2.4" height="2.4" fill="#a8a8a8"/><rect x="8" y="4" width="2.4" height="2.4" fill="#a8a8a8"/><rect x="12" y="0" width="2.4" height="2.4" fill="#a8a8a8"/><rect x="12" y="4" width="2.4" height="2.4" fill="#a8a8a8"/></svg><div class="r" style="left:1633px;top:990.5px;width:277px;height:30.5px;background:#3d3d3d;border-radius:5px;"></div><svg style="left:1645px;top:1000.0px;" width="7" height="11" viewBox="0 0 7 11"><path d="M1 1 L6 5.5 L1 10" fill="none" stroke="#d0d0d0" stroke-width="1.3"/></svg><div class="t" style="left:1660px;top:996.0px;color:#e6e6e6;">可視性</div><svg style="left:1887px;top:1002.5px;" width="15" height="7" viewBox="0 0 15 7"><rect x="0" y="0" width="2.4" height="2.4" fill="#a8a8a8"/><rect x="0" y="4" width="2.4" height="2.4" fill="#a8a8a8"/><rect x="4" y="0" width="2.4" height="2.4" fill="#a8a8a8"/><rect x="4" y="4" width="2.4" height="2.4" fill="#a8a8a8"/><rect x="8" y="0" width="2.4" height="2.4" fill="#a8a8a8"/><rect x="8" y="4" width="2.4" height="2.4" fill="#a8a8a8"/><rect x="12" y="0" width="2.4" height="2.4" fill="#a8a8a8"/><rect x="12" y="4" width="2.4" height="2.4" fill="#a8a8a8"/></svg><div class="r" style="left:1633px;top:1023.5px;width:277px;height:30.5px;background:#3d3d3d;border-radius:5px;"></div><svg style="left:1645px;top:1033.0px;" width="7" height="11" viewBox="0 0 7 11"><path d="M1 1 L6 5.5 L1 10" fill="none" stroke="#d0d0d0" stroke-width="1.3"/></svg><div class="t" style="left:1660px;top:1029.0px;color:#e6e6e6;">ビューポート表示</div><svg style="left:1887px;top:1035.5px;" width="15" height="7" viewBox="0 0 15 7"><rect x="0" y="0" width="2.4" height="2.4" fill="#a8a8a8"/><rect x="0" y="4" width="2.4" height="2.4" fill="#a8a8a8"/><rect x="4" y="0" width="2.4" height="2.4" fill="#a8a8a8"/><rect x="4" y="4" width="2.4" height="2.4" fill="#a8a8a8"/><rect x="8" y="0" width="2.4" height="2.4" fill="#a8a8a8"/><rect x="8" y="4" width="2.4" height="2.4" fill="#a8a8a8"/><rect x="12" y="0" width="2.4" height="2.4" fill="#a8a8a8"/><rect x="12" y="4" width="2.4" height="2.4" fill="#a8a8a8"/></svg><div class="r" style="left:1912px;top:426px;width:5px;height:559px;background:#3a3a3a;border-radius:3px;"></div><div class="r" style="left:1588px;top:1053px;width:332px;height:1px;background:#141414;border-radius:0px;"></div><div class="r" style="left:1px;top:980px;width:1584px;height:73px;background:#1d1d1d;border-radius:7px;"></div><div class="r" style="left:1px;top:980px;width:1584px;height:31px;background:#303030;border-radius:7px 7px 0 0;"></div><div class="r" style="left:10.5px;top:984.5px;width:38.5px;height:23.5px;background:#282828;border-radius:5px;border:1px solid #3a3a3a"></div><svg style="left:15px;top:987px;" width="20" height="18" viewBox="0 0 20 18"><circle cx="9.5" cy="9" r="8.5" fill="#e6e6e6"/><path d="M11.5 4 L7 9 L11.5 14" fill="none" stroke="#303030" stroke-width="2.2"/></svg><svg style="left:37px;top:995px;" width="8" height="6" viewBox="0 0 8 6"><path d="M1 1 L4 4 L7 1" fill="none" stroke="#d0d0d0" stroke-width="1.3" stroke-linecap="round" stroke-linejoin="round"/></svg><div class="r" style="left:56.5px;top:984.5px;width:161px;height:23.5px;background:#282828;border-radius:5px;border:1px solid #3a3a3a"></div><div class="r" style="left:115.5px;top:985px;width:1px;height:23px;background:#3a3a3a;border-radius:0px;"></div><div class="t" style="left:65px;top:986px;color:#e6e6e6;">再生</div><svg style="left:104px;top:995px;" width="8" height="6" viewBox="0 0 8 6"><path d="M1 1 L4 4 L7 1" fill="none" stroke="#d0d0d0" stroke-width="1.3" stroke-linecap="round" stroke-linejoin="round"/></svg><div class="t" style="left:124px;top:986px;color:#e6e6e6;">キーイング</div><svg style="left:206px;top:995px;" width="8" height="6" viewBox="0 0 8 6"><path d="M1 1 L4 4 L7 1" fill="none" stroke="#d0d0d0" stroke-width="1.3" stroke-linecap="round" stroke-linejoin="round"/></svg><div class="t" style="left:229px;top:986px;color:#e6e6e6;">ビュー</div><div class="t" style="left:290px;top:986px;color:#e6e6e6;">マーカー</div><div class="r" style="left:678px;top:985px;width:48px;height:23.5px;background:#2b2b2b;border-radius:5px;"></div><div class="r" style="left:678px;top:985px;width:23.5px;height:23.5px;background:#545454;border-radius:5px 0 0 5px;"></div><svg style="left:683px;top:990px;" width="14" height="14" viewBox="0 0 14 14"><circle cx="7" cy="7" r="5.2" fill="#e6e6e6"/></svg><svg style="left:709px;top:995px;" width="8" height="6" viewBox="0 0 8 6"><path d="M1 1 L4 4 L7 1" fill="none" stroke="#5a5a5a" stroke-width="1.3" stroke-linecap="round" stroke-linejoin="round"/></svg><div class="r" style="left:734px;top:985px;width:148px;height:23.5px;background:#545454;border-radius:5px;"></div><div class="r" style="left:758.2px;top:985px;width:1px;height:23.5px;background:#474747;border-radius:0px;"></div><div class="r" style="left:782.9px;top:985px;width:1px;height:23.5px;background:#474747;border-radius:0px;"></div><div class="r" style="left:807.6px;top:985px;width:1px;height:23.5px;background:#474747;border-radius:0px;"></div><div class="r" style="left:832.3px;top:985px;width:1px;height:23.5px;background:#474747;border-radius:0px;"></div><div class="r" style="left:857.0px;top:985px;width:1px;height:23.5px;background:#474747;border-radius:0px;"></div><svg style="left:736.5px;top:987px;" width="20" height="19" viewBox="0 0 20 19"><rect x="3" y="3" width="2.5" height="13" fill="#e6e6e6"/><path d="M15 3 L6.5 9.5 L15 16 Z" fill="#e6e6e6"/></svg><svg style="left:761.2px;top:987px;" width="20" height="19" viewBox="0 0 20 19"><path d="M7 3 L13 9.5 L7 16 L1 9.5 Z" fill="#e6e6e6"/><path d="M19 3.5 L13.5 9.5 L19 15.5 Z" fill="#e6e6e6"/></svg><svg style="left:785.9px;top:987px;" width="20" height="19" viewBox="0 0 20 19"><path d="M15 2.5 L15 16.5 L5 9.5 Z" fill="#e6e6e6"/></svg><svg style="left:810.6px;top:987px;" width="20" height="19" viewBox="0 0 20 19"><path d="M5 2.5 L5 16.5 L15 9.5 Z" fill="#e6e6e6"/></svg><svg style="left:835.3px;top:987px;" width="20" height="19" viewBox="0 0 20 19"><path d="M1 3.5 L6.5 9.5 L1 15.5 Z" fill="#e6e6e6"/><path d="M13 3 L19 9.5 L13 16 L7 9.5 Z" fill="#e6e6e6"/></svg><svg style="left:860.0px;top:987px;" width="20" height="19" viewBox="0 0 20 19"><rect x="14.5" y="3" width="2.5" height="13" fill="#e6e6e6"/><path d="M5 3 L13.5 9.5 L5 16 Z" fill="#e6e6e6"/></svg><div class="r" style="left:1235px;top:985px;width:91.5px;height:23.5px;background:#545454;border-radius:5px;"></div><div class="t" style="left:1130.5px;width:300px;text-align:center;top:986px;color:#e6e6e6;"><span class="l">1</span></div><div class="r" style="left:1334px;top:985px;width:241.5px;height:23.5px;background:#545454;border-radius:5px;"></div><div class="r" style="left:1357.5px;top:985px;width:1px;height:23.5px;background:#474747;border-radius:0px;"></div><div class="r" style="left:1466px;top:985px;width:1px;height:23.5px;background:#474747;border-radius:0px;"></div><svg style="left:1337px;top:987px;" width="19" height="19" viewBox="0 0 19 19"><circle cx="9" cy="11" r="6.5" fill="none" stroke="#e6e6e6" stroke-width="1.2"/><path d="M9 7.5 L9 11.5 L12 11.5" fill="none" stroke="#e6e6e6" stroke-width="1.2"/><path d="M6.5 2 L11.5 2 M9 2 L9 4.5 M14.5 3.5 L16 5" stroke="#e6e6e6" stroke-width="1.2"/></svg><div class="t" style="left:1376px;top:986px;color:#e6e6e6;">開始</div><div class="t" style="left:1148px;width:300px;text-align:right;top:986px;color:#e6e6e6;"><span class="l">1</span></div><div class="t" style="left:1485px;top:986px;color:#e6e6e6;">終了</div><div class="t" style="left:1258px;width:300px;text-align:right;top:986px;color:#e6e6e6;"><span class="l">250</span></div><div class="r" style="left:1px;top:1040px;width:1584px;height:14.5px;background:#282828;border-radius:0 0 7px 7px;"></div><div class="r" style="left:53px;top:1040px;width:1.2px;height:14.5px;background:#1c1c1c;border-radius:0px;"></div><div class="r" style="left:83px;top:1040px;width:1.2px;height:14.5px;background:#1c1c1c;border-radius:0px;"></div><div class="r" style="left:112px;top:1040px;width:1.2px;height:14.5px;background:#1c1c1c;border-radius:0px;"></div><div class="r" style="left:141px;top:1040px;width:1.2px;height:14.5px;background:#1c1c1c;border-radius:0px;"></div><div class="r" style="left:171px;top:1040px;width:1.2px;height:14.5px;background:#1c1c1c;border-radius:0px;"></div><div class="r" style="left:200px;top:1040px;width:1.2px;height:14.5px;background:#1c1c1c;border-radius:0px;"></div><div class="r" style="left:230px;top:1040px;width:1.2px;height:14.5px;background:#1c1c1c;border-radius:0px;"></div><div class="r" style="left:259px;top:1040px;width:1.2px;height:14.5px;background:#1c1c1c;border-radius:0px;"></div><div class="r" style="left:289px;top:1040px;width:1.2px;height:14.5px;background:#1c1c1c;border-radius:0px;"></div><div class="r" style="left:318px;top:1040px;width:1.2px;height:14.5px;background:#1c1c1c;border-radius:0px;"></div><div class="r" style="left:348px;top:1040px;width:1.2px;height:14.5px;background:#1c1c1c;border-radius:0px;"></div><div class="r" style="left:377px;top:1040px;width:1.2px;height:14.5px;background:#1c1c1c;border-radius:0px;"></div><div class="r" style="left:407px;top:1040px;width:1.2px;height:14.5px;background:#1c1c1c;border-radius:0px;"></div><div class="r" style="left:436px;top:1040px;width:1.2px;height:14.5px;background:#1c1c1c;border-radius:0px;"></div><div class="r" style="left:466px;top:1040px;width:1.2px;height:14.5px;background:#1c1c1c;border-radius:0px;"></div><div class="r" style="left:495px;top:1040px;width:1.2px;height:14.5px;background:#1c1c1c;border-radius:0px;"></div><div class="r" style="left:524px;top:1040px;width:1.2px;height:14.5px;background:#1c1c1c;border-radius:0px;"></div><div class="r" style="left:554px;top:1040px;width:1.2px;height:14.5px;background:#1c1c1c;border-radius:0px;"></div><div class="r" style="left:583px;top:1040px;width:1.2px;height:14.5px;background:#1c1c1c;border-radius:0px;"></div><div class="r" style="left:613px;top:1040px;width:1.2px;height:14.5px;background:#1c1c1c;border-radius:0px;"></div><div class="r" style="left:642px;top:1040px;width:1.2px;height:14.5px;background:#1c1c1c;border-radius:0px;"></div><div class="r" style="left:672px;top:1040px;width:1.2px;height:14.5px;background:#1c1c1c;border-radius:0px;"></div><div class="r" style="left:701px;top:1040px;width:1.2px;height:14.5px;background:#1c1c1c;border-radius:0px;"></div><div class="r" style="left:731px;top:1040px;width:1.2px;height:14.5px;background:#1c1c1c;border-radius:0px;"></div><div class="r" style="left:760px;top:1040px;width:1.2px;height:14.5px;background:#1c1c1c;border-radius:0px;"></div><div class="r" style="left:790px;top:1040px;width:1.2px;height:14.5px;background:#1c1c1c;border-radius:0px;"></div><div class="r" style="left:819px;top:1040px;width:1.2px;height:14.5px;background:#1c1c1c;border-radius:0px;"></div><div class="r" style="left:849px;top:1040px;width:1.2px;height:14.5px;background:#1c1c1c;border-radius:0px;"></div><div class="r" style="left:878px;top:1040px;width:1.2px;height:14.5px;background:#1c1c1c;border-radius:0px;"></div><div class="r" style="left:907px;top:1040px;width:1.2px;height:14.5px;background:#1c1c1c;border-radius:0px;"></div><div class="r" style="left:937px;top:1040px;width:1.2px;height:14.5px;background:#1c1c1c;border-radius:0px;"></div><div class="r" style="left:966px;top:1040px;width:1.2px;height:14.5px;background:#1c1c1c;border-radius:0px;"></div><div class="r" style="left:996px;top:1040px;width:1.2px;height:14.5px;background:#1c1c1c;border-radius:0px;"></div><div class="r" style="left:1025px;top:1040px;width:1.2px;height:14.5px;background:#1c1c1c;border-radius:0px;"></div><div class="r" style="left:1055px;top:1040px;width:1.2px;height:14.5px;background:#1c1c1c;border-radius:0px;"></div><div class="r" style="left:1084px;top:1040px;width:1.2px;height:14.5px;background:#1c1c1c;border-radius:0px;"></div><div class="r" style="left:1114px;top:1040px;width:1.2px;height:14.5px;background:#1c1c1c;border-radius:0px;"></div><div class="r" style="left:1143px;top:1040px;width:1.2px;height:14.5px;background:#1c1c1c;border-radius:0px;"></div><div class="r" style="left:1173px;top:1040px;width:1.2px;height:14.5px;background:#1c1c1c;border-radius:0px;"></div><div class="r" style="left:1202px;top:1040px;width:1.2px;height:14.5px;background:#1c1c1c;border-radius:0px;"></div><div class="r" style="left:1232px;top:1040px;width:1.2px;height:14.5px;background:#1c1c1c;border-radius:0px;"></div><div class="r" style="left:1261px;top:1040px;width:1.2px;height:14.5px;background:#1c1c1c;border-radius:0px;"></div><div class="r" style="left:1290px;top:1040px;width:1.2px;height:14.5px;background:#1c1c1c;border-radius:0px;"></div><div class="r" style="left:1320px;top:1040px;width:1.2px;height:14.5px;background:#1c1c1c;border-radius:0px;"></div><div class="r" style="left:1349px;top:1040px;width:1.2px;height:14.5px;background:#1c1c1c;border-radius:0px;"></div><div class="r" style="left:1379px;top:1040px;width:1.2px;height:14.5px;background:#1c1c1c;border-radius:0px;"></div><div class="r" style="left:1408px;top:1040px;width:1.2px;height:14.5px;background:#1c1c1c;border-radius:0px;"></div><div class="r" style="left:1438px;top:1040px;width:1.2px;height:14.5px;background:#1c1c1c;border-radius:0px;"></div><div class="r" style="left:1467px;top:1040px;width:1.2px;height:14.5px;background:#1c1c1c;border-radius:0px;"></div><div class="r" style="left:1497px;top:1040px;width:1.2px;height:14.5px;background:#1c1c1c;border-radius:0px;"></div><div class="r" style="left:1526px;top:1040px;width:1.2px;height:14.5px;background:#1c1c1c;border-radius:0px;"></div><div class="r" style="left:11.5px;top:1041px;width:1563px;height:10.5px;background:#545454;border-radius:6px;"></div><svg style="left:12px;top:1041px;" width="11" height="11" viewBox="0 0 11 11"><circle cx="5.5" cy="5.5" r="4" fill="#303030" stroke="#5c5c5c" stroke-width="1"/></svg><svg style="left:1564px;top:1041px;" width="11" height="11" viewBox="0 0 11 11"><circle cx="5.5" cy="5.5" r="4" fill="#303030" stroke="#5c5c5c" stroke-width="1"/></svg><div class="t" style="left:-37.971999999999994px;width:300px;text-align:center;top:1016px;color:#c8c8c8;"><span class="l">10</span></div><div class="t" style="left:20.948000000000008px;width:300px;text-align:center;top:1016px;color:#c8c8c8;"><span class="l">20</span></div><div class="t" style="left:79.86800000000002px;width:300px;text-align:center;top:1016px;color:#c8c8c8;"><span class="l">30</span></div><div class="t" style="left:138.788px;width:300px;text-align:center;top:1016px;color:#c8c8c8;"><span class="l">40</span></div><div class="t" style="left:197.70800000000003px;width:300px;text-align:center;top:1016px;color:#c8c8c8;"><span class="l">50</span></div><div class="t" style="left:256.62800000000004px;width:300px;text-align:center;top:1016px;color:#c8c8c8;"><span class="l">60</span></div><div class="t" style="left:315.548px;width:300px;text-align:center;top:1016px;color:#c8c8c8;"><span class="l">70</span></div><div class="t" style="left:374.4680000000001px;width:300px;text-align:center;top:1016px;color:#c8c8c8;"><span class="l">80</span></div><div class="t" style="left:433.38800000000003px;width:300px;text-align:center;top:1016px;color:#c8c8c8;"><span class="l">90</span></div><div class="t" style="left:492.308px;width:300px;text-align:center;top:1016px;color:#c8c8c8;"><span class="l">100</span></div><div class="t" style="left:551.2280000000001px;width:300px;text-align:center;top:1016px;color:#c8c8c8;"><span class="l">110</span></div><div class="t" style="left:610.148px;width:300px;text-align:center;top:1016px;color:#c8c8c8;"><span class="l">120</span></div><div class="t" style="left:669.0680000000001px;width:300px;text-align:center;top:1016px;color:#c8c8c8;"><span class="l">130</span></div><div class="t" style="left:727.988px;width:300px;text-align:center;top:1016px;color:#c8c8c8;"><span class="l">140</span></div><div class="t" style="left:786.908px;width:300px;text-align:center;top:1016px;color:#c8c8c8;"><span class="l">150</span></div><div class="t" style="left:845.8280000000001px;width:300px;text-align:center;top:1016px;color:#c8c8c8;"><span class="l">160</span></div><div class="t" style="left:904.748px;width:300px;text-align:center;top:1016px;color:#c8c8c8;"><span class="l">170</span></div><div class="t" style="left:963.6680000000001px;width:300px;text-align:center;top:1016px;color:#c8c8c8;"><span class="l">180</span></div><div class="t" style="left:1022.588px;width:300px;text-align:center;top:1016px;color:#c8c8c8;"><span class="l">190</span></div><div class="t" style="left:1081.508px;width:300px;text-align:center;top:1016px;color:#c8c8c8;"><span class="l">200</span></div><div class="t" style="left:1140.428px;width:300px;text-align:center;top:1016px;color:#c8c8c8;"><span class="l">210</span></div><div class="t" style="left:1199.3480000000002px;width:300px;text-align:center;top:1016px;color:#c8c8c8;"><span class="l">220</span></div><div class="t" style="left:1258.268px;width:300px;text-align:center;top:1016px;color:#c8c8c8;"><span class="l">230</span></div><div class="t" style="left:1317.188px;width:300px;text-align:center;top:1016px;color:#c8c8c8;"><span class="l">240</span></div><div class="t" style="left:1376.1080000000002px;width:300px;text-align:center;top:1016px;color:#c8c8c8;"><span class="l">250</span></div><div class="r" style="left:44px;top:1015px;width:29.5px;height:21px;background:#4772b3;border-radius:5px;"></div><div class="t" style="left:-91.2px;width:300px;text-align:center;top:1016px;color:#ffffff;"><span class="l">1</span></div><div class="r" style="left:58px;top:1035px;width:1.6px;height:19px;background:#4772b3;border-radius:0px;"></div><div class="r" style="left:1px;top:1027px;width:9px;height:20px;background:#262626;border-radius:0 5px 5px 0;"></div><svg style="left:4px;top:1032px;" width="6" height="10" viewBox="0 0 6 10"><path d="M1 1 L5 5 L1 9" fill="none" stroke="#8a8a8a" stroke-width="1.3" stroke-linecap="round" stroke-linejoin="round"/></svg><div class="r" style="left:1578px;top:1033px;width:7px;height:20px;background:#2e2e2e;border-radius:4px 0 0 4px;"></div><svg style="left:1579px;top:1038px;" width="6" height="10" viewBox="0 0 6 10"><path d="M5 1 L1 5 L5 9" fill="none" stroke="#8a8a8a" stroke-width="1.3" stroke-linecap="round" stroke-linejoin="round"/></svg><div class="r" style="left:0px;top:1054.5px;width:1920px;height:25.5px;background:#181818;border-radius:0px;"></div><svg style="left:15px;top:1059px;" width="15" height="20" viewBox="0 0 15 20"><rect x="1" y="1" width="12.4" height="17.6" rx="4" fill="none" stroke="#b0b0b0" stroke-width="1.1"/><path d="M1.6 8 L1.6 5 Q1.6 1.6 5 1.6 L7 1.6 L7 8 Z" fill="#a0a0a0"/></svg><div class="t" style="left:43px;top:1058px;color:#a8a8a8;">最短パス選択</div><svg style="left:296px;top:1059px;" width="15" height="20" viewBox="0 0 15 20"><rect x="1" y="1" width="12.4" height="17.6" rx="4" fill="none" stroke="#b0b0b0" stroke-width="1.1"/><rect x="5.6" y="3.6" width="3" height="5" rx="0.8" fill="#b8b8b8"/></svg><div class="t" style="left:324px;top:1058px;color:#a8a8a8;">ビューをズーム</div><svg style="left:577px;top:1059px;" width="15" height="20" viewBox="0 0 15 20"><rect x="1" y="1" width="12.4" height="17.6" rx="4" fill="none" stroke="#b0b0b0" stroke-width="1.1"/><path d="M7.3 1.6 L9.4 1.6 Q12.8 1.6 12.8 5 L12.8 8 L7.3 8 Z" fill="#a0a0a0"/></svg><div class="t" style="left:604px;top:1058px;color:#a8a8a8;">マウス位置に押し出し<span class="l">/</span>追加</div><div class="t" style="left:1869px;top:1058px;color:#8c8c8c;"><span class="l">4.0.1</span></div>
</div></body></html>
